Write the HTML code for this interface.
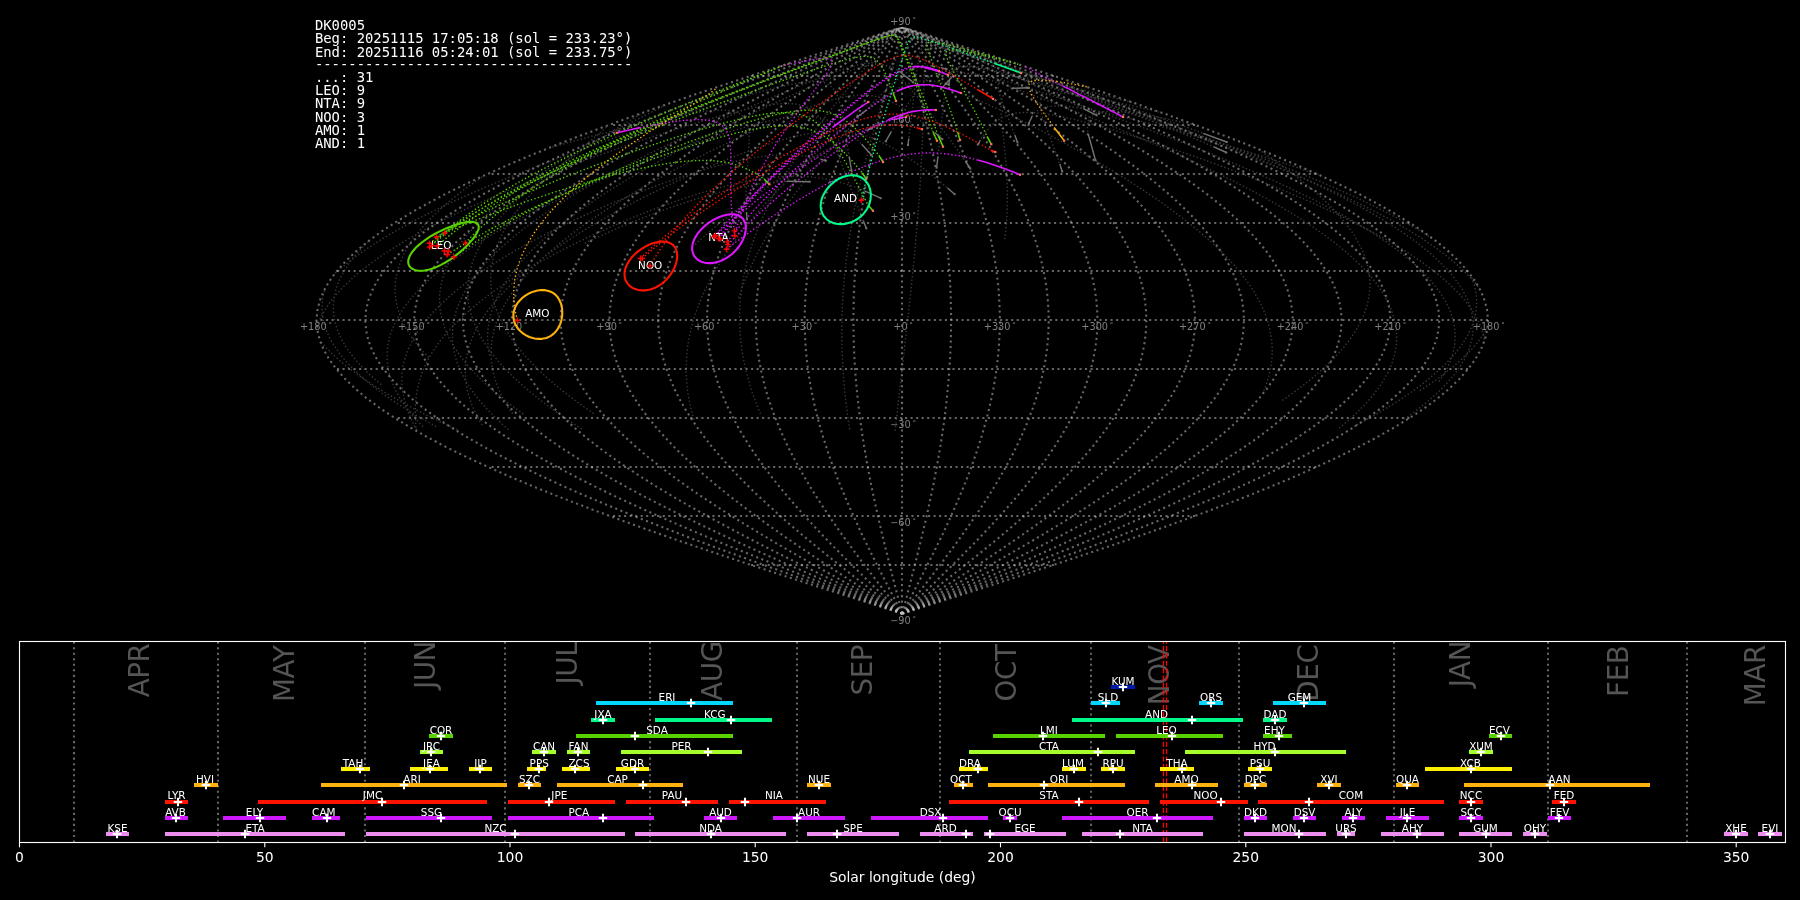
<!DOCTYPE html>
<html lang="en">
<head>
<meta charset="utf-8">
<title>DK0005 shower association</title>
<style>
html,body{margin:0;padding:0;background:#000;overflow:hidden}
svg{display:block;will-change:transform}
text{white-space:pre}
</style>
</head>
<body>
<svg width="1800" height="900" viewBox="0 0 1800 900">
<rect x="0" y="0" width="1800" height="900" fill="#000000"/>
<clipPath id="mapclip"><rect x="300" y="27.4" width="1200" height="600"/></clipPath>
<g fill="none" stroke="#c0c0c0" stroke-opacity="0.53" stroke-width="2.083" stroke-dasharray="2.083 3.4375" clip-path="url(#mapclip)">
<path d="M902.0 613.7 L902.0 603.9 L902.0 594.1 L902.0 584.4 L902.0 574.6 L902.0 564.8 L902.0 555.0 L902.0 545.3 L902.0 535.5 L902.0 525.7 L902.0 515.9 L902.0 506.1 L902.0 496.4 L902.0 486.6 L902.0 476.8 L902.0 467.0 L902.0 457.2 L902.0 447.5 L902.0 437.7 L902.0 427.9 L902.0 418.1 L902.0 408.4 L902.0 398.6 L902.0 388.8 L902.0 379.0 L902.0 369.2 L902.0 359.5 L902.0 349.7 L902.0 339.9 L902.0 330.1 L902.0 320.4 L902.0 310.6 L902.0 300.8 L902.0 291.0 L902.0 281.2 L902.0 271.5 L902.0 261.7 L902.0 251.9 L902.0 242.1 L902.0 232.3 L902.0 222.6 L902.0 212.8 L902.0 203.0 L902.0 193.2 L902.0 183.5 L902.0 173.7 L902.0 163.9 L902.0 154.1 L902.0 144.3 L902.0 134.6 L902.0 124.8 L902.0 115.0 L902.0 105.2 L902.0 95.4 L902.0 85.7 L902.0 75.9 L902.0 66.1 L902.0 56.3 L902.0 46.6 L902.0 36.8 L902.0 27.0"/>
<path d="M902.2 613.7 L899.7 603.9 L897.1 594.1 L894.6 584.4 L892.1 574.6 L889.6 564.8 L887.2 555.0 L884.8 545.3 L882.4 535.5 L880.1 525.7 L877.8 515.9 L875.7 506.1 L873.6 496.4 L871.5 486.6 L869.6 476.8 L867.7 467.0 L866.0 457.2 L864.3 447.5 L862.8 437.7 L861.3 427.9 L860.0 418.1 L858.8 408.4 L857.7 398.6 L856.7 388.8 L855.8 379.0 L855.1 369.2 L854.5 359.5 L854.0 349.7 L853.7 339.9 L853.5 330.1 L853.4 320.4 L853.5 310.6 L853.7 300.8 L854.0 291.0 L854.5 281.2 L855.1 271.5 L855.8 261.7 L856.7 251.9 L857.7 242.1 L858.8 232.3 L860.0 222.6 L861.3 212.8 L862.8 203.0 L864.3 193.2 L866.0 183.5 L867.7 173.7 L869.6 163.9 L871.5 154.1 L873.6 144.3 L875.7 134.6 L877.8 124.8 L880.1 115.0 L882.4 105.2 L884.8 95.4 L887.2 85.7 L889.6 75.9 L892.1 66.1 L894.6 56.3 L897.1 46.6 L899.7 36.8 L902.2 27.0"/>
<path d="M902.2 613.7 L897.1 603.9 L892.0 594.1 L887.0 584.4 L882.0 574.6 L877.0 564.8 L872.1 555.0 L867.3 545.3 L862.5 535.5 L857.9 525.7 L853.4 515.9 L849.1 506.1 L844.9 496.4 L840.8 486.6 L836.9 476.8 L833.2 467.0 L829.7 457.2 L826.4 447.5 L823.3 437.7 L820.4 427.9 L817.7 418.1 L815.3 408.4 L813.1 398.6 L811.1 388.8 L809.4 379.0 L808.0 369.2 L806.8 359.5 L805.8 349.7 L805.2 339.9 L804.8 330.1 L804.6 320.4 L804.8 310.6 L805.2 300.8 L805.8 291.0 L806.8 281.2 L808.0 271.5 L809.4 261.7 L811.1 251.9 L813.1 242.1 L815.3 232.3 L817.7 222.6 L820.4 212.8 L823.3 203.0 L826.4 193.2 L829.7 183.5 L833.2 173.7 L836.9 163.9 L840.8 154.1 L844.9 144.3 L849.1 134.6 L853.4 124.8 L857.9 115.0 L862.5 105.2 L867.3 95.4 L872.1 85.7 L877.0 75.9 L882.0 66.1 L887.0 56.3 L892.0 46.6 L897.1 36.8 L902.2 27.0"/>
<path d="M902.2 613.7 L894.6 603.9 L886.9 594.1 L879.3 584.4 L871.8 574.6 L864.3 564.8 L857.0 555.0 L849.8 545.3 L842.7 535.5 L835.8 525.7 L829.0 515.9 L822.5 506.1 L816.2 496.4 L810.1 486.6 L804.3 476.8 L798.7 467.0 L793.4 457.2 L788.4 447.5 L783.8 437.7 L779.4 427.9 L775.4 418.1 L771.8 408.4 L768.5 398.6 L765.5 388.8 L763.0 379.0 L760.8 369.2 L759.0 359.5 L757.6 349.7 L756.6 339.9 L756.0 330.1 L755.8 320.4 L756.0 310.6 L756.6 300.8 L757.6 291.0 L759.0 281.2 L760.8 271.5 L763.0 261.7 L765.5 251.9 L768.5 242.1 L771.8 232.3 L775.4 222.6 L779.4 212.8 L783.8 203.0 L788.4 193.2 L793.4 183.5 L798.7 173.7 L804.3 163.9 L810.1 154.1 L816.2 144.3 L822.5 134.6 L829.0 124.8 L835.8 115.0 L842.7 105.2 L849.8 95.4 L857.0 85.7 L864.3 75.9 L871.8 66.1 L879.3 56.3 L886.9 46.6 L894.6 36.8 L902.2 27.0"/>
<path d="M902.2 613.7 L892.0 603.9 L881.8 594.1 L871.7 584.4 L861.7 574.6 L851.7 564.8 L841.9 555.0 L832.3 545.3 L822.8 535.5 L813.6 525.7 L804.6 515.9 L795.9 506.1 L787.5 496.4 L779.4 486.6 L771.6 476.8 L764.2 467.0 L757.1 457.2 L750.5 447.5 L744.3 437.7 L738.5 427.9 L733.2 418.1 L728.3 408.4 L723.9 398.6 L720.0 388.8 L716.6 379.0 L713.7 369.2 L711.3 359.5 L709.4 349.7 L708.1 339.9 L707.3 330.1 L707.0 320.4 L707.3 310.6 L708.1 300.8 L709.4 291.0 L711.3 281.2 L713.7 271.5 L716.6 261.7 L720.0 251.9 L723.9 242.1 L728.3 232.3 L733.2 222.6 L738.5 212.8 L744.3 203.0 L750.5 193.2 L757.1 183.5 L764.2 173.7 L771.6 163.9 L779.4 154.1 L787.5 144.3 L795.9 134.6 L804.6 124.8 L813.6 115.0 L822.8 105.2 L832.3 95.4 L841.9 85.7 L851.7 75.9 L861.7 66.1 L871.7 56.3 L881.8 46.6 L892.0 36.8 L902.2 27.0"/>
<path d="M902.2 613.7 L889.5 603.9 L876.7 594.1 L864.1 584.4 L851.5 574.6 L839.1 564.8 L826.8 555.0 L814.8 545.3 L803.0 535.5 L791.4 525.7 L780.2 515.9 L769.3 506.1 L758.8 496.4 L748.7 486.6 L738.9 476.8 L729.7 467.0 L720.9 457.2 L712.6 447.5 L704.8 437.7 L697.6 427.9 L690.9 418.1 L684.8 408.4 L679.3 398.6 L674.4 388.8 L670.1 379.0 L666.5 369.2 L663.5 359.5 L661.2 349.7 L659.5 339.9 L658.5 330.1 L658.2 320.4 L658.5 310.6 L659.5 300.8 L661.2 291.0 L663.5 281.2 L666.5 271.5 L670.1 261.7 L674.4 251.9 L679.3 242.1 L684.8 232.3 L690.9 222.6 L697.6 212.8 L704.8 203.0 L712.6 193.2 L720.9 183.5 L729.7 173.7 L738.9 163.9 L748.7 154.1 L758.8 144.3 L769.3 134.6 L780.2 124.8 L791.4 115.0 L803.0 105.2 L814.8 95.4 L826.8 85.7 L839.1 75.9 L851.5 66.1 L864.1 56.3 L876.7 46.6 L889.5 36.8 L902.2 27.0"/>
<path d="M902.2 613.7 L886.9 603.9 L871.6 594.1 L856.4 584.4 L841.4 574.6 L826.4 564.8 L811.7 555.0 L797.3 545.3 L783.1 535.5 L769.3 525.7 L755.8 515.9 L742.7 506.1 L730.1 496.4 L717.9 486.6 L706.3 476.8 L695.2 467.0 L684.6 457.2 L674.6 447.5 L665.3 437.7 L656.6 427.9 L648.6 418.1 L641.3 408.4 L634.7 398.6 L628.8 388.8 L623.7 379.0 L619.4 369.2 L615.8 359.5 L613.0 349.7 L611.0 339.9 L609.8 330.1 L609.4 320.4 L609.8 310.6 L611.0 300.8 L613.0 291.0 L615.8 281.2 L619.4 271.5 L623.7 261.7 L628.8 251.9 L634.7 242.1 L641.3 232.3 L648.6 222.6 L656.6 212.8 L665.3 203.0 L674.6 193.2 L684.6 183.5 L695.2 173.7 L706.3 163.9 L717.9 154.1 L730.1 144.3 L742.7 134.6 L755.8 124.8 L769.3 115.0 L783.1 105.2 L797.3 95.4 L811.7 85.7 L826.4 75.9 L841.4 66.1 L856.4 56.3 L871.6 46.6 L886.9 36.8 L902.2 27.0"/>
<path d="M902.2 613.7 L884.4 603.9 L866.5 594.1 L848.8 584.4 L831.2 574.6 L813.8 564.8 L796.7 555.0 L779.8 545.3 L763.3 535.5 L747.1 525.7 L731.4 515.9 L716.2 506.1 L701.4 496.4 L687.2 486.6 L673.6 476.8 L660.6 467.0 L648.3 457.2 L636.7 447.5 L625.8 437.7 L615.7 427.9 L606.3 418.1 L597.8 408.4 L590.1 398.6 L583.3 388.8 L577.3 379.0 L572.2 369.2 L568.0 359.5 L564.8 349.7 L562.4 339.9 L561.0 330.1 L560.6 320.4 L561.0 310.6 L562.4 300.8 L564.8 291.0 L568.0 281.2 L572.2 271.5 L577.3 261.7 L583.3 251.9 L590.1 242.1 L597.8 232.3 L606.3 222.6 L615.7 212.8 L625.8 203.0 L636.7 193.2 L648.3 183.5 L660.6 173.7 L673.6 163.9 L687.2 154.1 L701.4 144.3 L716.2 134.6 L731.4 124.8 L747.1 115.0 L763.3 105.2 L779.8 95.4 L796.7 85.7 L813.8 75.9 L831.2 66.1 L848.8 56.3 L866.5 46.6 L884.4 36.8 L902.2 27.0"/>
<path d="M902.2 613.7 L881.8 603.9 L861.4 594.1 L841.2 584.4 L821.1 574.6 L801.2 564.8 L781.6 555.0 L762.3 545.3 L743.4 535.5 L725.0 525.7 L707.0 515.9 L689.6 506.1 L672.7 496.4 L656.5 486.6 L641.0 476.8 L626.1 467.0 L612.0 457.2 L598.8 447.5 L586.3 437.7 L574.7 427.9 L564.1 418.1 L554.3 408.4 L545.5 398.6 L537.7 388.8 L530.9 379.0 L525.1 369.2 L520.3 359.5 L516.6 349.7 L513.9 339.9 L512.3 330.1 L511.7 320.4 L512.3 310.6 L513.9 300.8 L516.6 291.0 L520.3 281.2 L525.1 271.5 L530.9 261.7 L537.7 251.9 L545.5 242.1 L554.3 232.3 L564.1 222.6 L574.7 212.8 L586.3 203.0 L598.8 193.2 L612.0 183.5 L626.1 173.7 L641.0 163.9 L656.5 154.1 L672.7 144.3 L689.6 134.6 L707.0 124.8 L725.0 115.0 L743.4 105.2 L762.3 95.4 L781.6 85.7 L801.2 75.9 L821.1 66.1 L841.2 56.3 L861.4 46.6 L881.8 36.8 L902.2 27.0"/>
<path d="M902.2 613.7 L879.3 603.9 L856.3 594.1 L833.5 584.4 L810.9 574.6 L788.5 564.8 L766.5 555.0 L744.8 545.3 L723.6 535.5 L702.8 525.7 L682.6 515.9 L663.0 506.1 L644.0 496.4 L625.8 486.6 L608.3 476.8 L591.6 467.0 L575.8 457.2 L560.8 447.5 L546.8 437.7 L533.8 427.9 L521.8 418.1 L510.8 408.4 L500.9 398.6 L492.1 388.8 L484.4 379.0 L477.9 369.2 L472.5 359.5 L468.3 349.7 L465.3 339.9 L463.5 330.1 L462.9 320.4 L463.5 310.6 L465.3 300.8 L468.3 291.0 L472.5 281.2 L477.9 271.5 L484.4 261.7 L492.1 251.9 L500.9 242.1 L510.8 232.3 L521.8 222.6 L533.8 212.8 L546.8 203.0 L560.8 193.2 L575.8 183.5 L591.6 173.7 L608.3 163.9 L625.8 154.1 L644.0 144.3 L663.0 134.6 L682.6 124.8 L702.8 115.0 L723.6 105.2 L744.8 95.4 L766.5 85.7 L788.5 75.9 L810.9 66.1 L833.5 56.3 L856.3 46.6 L879.3 36.8 L902.2 27.0"/>
<path d="M902.2 613.7 L876.7 603.9 L851.2 594.1 L825.9 584.4 L800.8 574.6 L775.9 564.8 L751.4 555.0 L727.3 545.3 L703.7 535.5 L680.6 525.7 L658.2 515.9 L636.4 506.1 L615.3 496.4 L595.1 486.6 L575.6 476.8 L557.1 467.0 L539.5 457.2 L522.9 447.5 L507.3 437.7 L492.9 427.9 L479.5 418.1 L467.3 408.4 L456.3 398.6 L446.5 388.8 L438.0 379.0 L430.8 369.2 L424.8 359.5 L420.1 349.7 L416.8 339.9 L414.8 330.1 L414.1 320.4 L414.8 310.6 L416.8 300.8 L420.1 291.0 L424.8 281.2 L430.8 271.5 L438.0 261.7 L446.5 251.9 L456.3 242.1 L467.3 232.3 L479.5 222.6 L492.9 212.8 L507.3 203.0 L522.9 193.2 L539.5 183.5 L557.1 173.7 L575.6 163.9 L595.1 154.1 L615.3 144.3 L636.4 134.6 L658.2 124.8 L680.6 115.0 L703.7 105.2 L727.3 95.4 L751.4 85.7 L775.9 75.9 L800.8 66.1 L825.9 56.3 L851.2 46.6 L876.7 36.8 L902.2 27.0"/>
<path d="M902.2 613.7 L874.1 603.9 L846.1 594.1 L818.3 584.4 L790.6 574.6 L763.3 564.8 L736.3 555.0 L709.8 545.3 L683.9 535.5 L658.5 525.7 L633.8 515.9 L609.8 506.1 L586.6 496.4 L564.3 486.6 L543.0 476.8 L522.6 467.0 L503.2 457.2 L485.0 447.5 L467.9 437.7 L451.9 427.9 L437.2 418.1 L423.8 408.4 L411.7 398.6 L401.0 388.8 L391.6 379.0 L383.6 369.2 L377.0 359.5 L371.9 349.7 L368.2 339.9 L366.0 330.1 L365.3 320.4 L366.0 310.6 L368.2 300.8 L371.9 291.0 L377.0 281.2 L383.6 271.5 L391.6 261.7 L401.0 251.9 L411.7 242.1 L423.8 232.3 L437.2 222.6 L451.9 212.8 L467.9 203.0 L485.0 193.2 L503.2 183.5 L522.6 173.7 L543.0 163.9 L564.3 154.1 L586.6 144.3 L609.8 134.6 L633.8 124.8 L658.5 115.0 L683.9 105.2 L709.8 95.4 L736.3 85.7 L763.3 75.9 L790.6 66.1 L818.3 56.3 L846.1 46.6 L874.1 36.8 L902.2 27.0"/>
<path d="M902.2 613.7 L871.6 603.9 L841.0 594.1 L810.6 584.4 L780.5 574.6 L750.6 564.8 L721.2 555.0 L692.3 545.3 L664.0 535.5 L636.3 525.7 L609.4 515.9 L583.2 506.1 L558.0 496.4 L533.6 486.6 L510.3 476.8 L488.1 467.0 L466.9 457.2 L447.0 447.5 L428.4 437.7 L411.0 427.9 L395.0 418.1 L380.3 408.4 L367.1 398.6 L355.4 388.8 L345.2 379.0 L336.5 369.2 L329.3 359.5 L323.7 349.7 L319.7 339.9 L317.3 330.1 L316.5 320.4 L317.3 310.6 L319.7 300.8 L323.7 291.0 L329.3 281.2 L336.5 271.5 L345.2 261.7 L355.4 251.9 L367.1 242.1 L380.3 232.3 L395.0 222.6 L411.0 212.8 L428.4 203.0 L447.0 193.2 L466.9 183.5 L488.1 173.7 L510.3 163.9 L533.6 154.1 L558.0 144.3 L583.2 134.6 L609.4 124.8 L636.3 115.0 L664.0 105.2 L692.3 95.4 L721.2 85.7 L750.6 75.9 L780.5 66.1 L810.6 56.3 L841.0 46.6 L871.6 36.8 L902.2 27.0"/>
<path d="M902.2 613.7 L930.4 603.9 L958.4 594.1 L986.2 584.4 L1013.9 574.6 L1041.2 564.8 L1068.2 555.0 L1094.7 545.3 L1120.6 535.5 L1146.0 525.7 L1170.7 515.9 L1194.7 506.1 L1217.9 496.4 L1240.2 486.6 L1261.5 476.8 L1281.9 467.0 L1301.3 457.2 L1319.5 447.5 L1336.6 437.7 L1352.6 427.9 L1367.3 418.1 L1380.7 408.4 L1392.8 398.6 L1403.5 388.8 L1412.9 379.0 L1420.9 369.2 L1427.5 359.5 L1432.6 349.7 L1436.3 339.9 L1438.5 330.1 L1439.2 320.4 L1438.5 310.6 L1436.3 300.8 L1432.6 291.0 L1427.5 281.2 L1420.9 271.5 L1412.9 261.7 L1403.5 251.9 L1392.8 242.1 L1380.7 232.3 L1367.3 222.6 L1352.6 212.8 L1336.6 203.0 L1319.5 193.2 L1301.3 183.5 L1281.9 173.7 L1261.5 163.9 L1240.2 154.1 L1217.9 144.3 L1194.7 134.6 L1170.7 124.8 L1146.0 115.0 L1120.6 105.2 L1094.7 95.4 L1068.2 85.7 L1041.2 75.9 L1013.9 66.1 L986.2 56.3 L958.4 46.6 L930.4 36.8 L902.2 27.0"/>
<path d="M902.2 613.7 L927.8 603.9 L953.3 594.1 L978.6 584.4 L1003.7 574.6 L1028.6 564.8 L1053.1 555.0 L1077.2 545.3 L1100.8 535.5 L1123.9 525.7 L1146.3 515.9 L1168.1 506.1 L1189.2 496.4 L1209.4 486.6 L1228.9 476.8 L1247.4 467.0 L1265.0 457.2 L1281.6 447.5 L1297.2 437.7 L1311.6 427.9 L1325.0 418.1 L1337.2 408.4 L1348.2 398.6 L1358.0 388.8 L1366.5 379.0 L1373.7 369.2 L1379.7 359.5 L1384.4 349.7 L1387.7 339.9 L1389.7 330.1 L1390.4 320.4 L1389.7 310.6 L1387.7 300.8 L1384.4 291.0 L1379.7 281.2 L1373.7 271.5 L1366.5 261.7 L1358.0 251.9 L1348.2 242.1 L1337.2 232.3 L1325.0 222.6 L1311.6 212.8 L1297.2 203.0 L1281.6 193.2 L1265.0 183.5 L1247.4 173.7 L1228.9 163.9 L1209.4 154.1 L1189.2 144.3 L1168.1 134.6 L1146.3 124.8 L1123.9 115.0 L1100.8 105.2 L1077.2 95.4 L1053.1 85.7 L1028.6 75.9 L1003.7 66.1 L978.6 56.3 L953.3 46.6 L927.8 36.8 L902.2 27.0"/>
<path d="M902.2 613.7 L925.2 603.9 L948.2 594.1 L971.0 584.4 L993.6 574.6 L1016.0 564.8 L1038.0 555.0 L1059.7 545.3 L1080.9 535.5 L1101.7 525.7 L1121.9 515.9 L1141.5 506.1 L1160.5 496.4 L1178.7 486.6 L1196.2 476.8 L1212.9 467.0 L1228.7 457.2 L1243.7 447.5 L1257.7 437.7 L1270.7 427.9 L1282.7 418.1 L1293.7 408.4 L1303.6 398.6 L1312.4 388.8 L1320.1 379.0 L1326.6 369.2 L1332.0 359.5 L1336.2 349.7 L1339.2 339.9 L1341.0 330.1 L1341.6 320.4 L1341.0 310.6 L1339.2 300.8 L1336.2 291.0 L1332.0 281.2 L1326.6 271.5 L1320.1 261.7 L1312.4 251.9 L1303.6 242.1 L1293.7 232.3 L1282.7 222.6 L1270.7 212.8 L1257.7 203.0 L1243.7 193.2 L1228.7 183.5 L1212.9 173.7 L1196.2 163.9 L1178.7 154.1 L1160.5 144.3 L1141.5 134.6 L1121.9 124.8 L1101.7 115.0 L1080.9 105.2 L1059.7 95.4 L1038.0 85.7 L1016.0 75.9 L993.6 66.1 L971.0 56.3 L948.2 46.6 L925.2 36.8 L902.2 27.0"/>
<path d="M902.2 613.7 L922.7 603.9 L943.1 594.1 L963.3 584.4 L983.4 574.6 L1003.3 564.8 L1022.9 555.0 L1042.2 545.3 L1061.1 535.5 L1079.5 525.7 L1097.5 515.9 L1114.9 506.1 L1131.8 496.4 L1148.0 486.6 L1163.5 476.8 L1178.4 467.0 L1192.5 457.2 L1205.7 447.5 L1218.2 437.7 L1229.8 427.9 L1240.4 418.1 L1250.2 408.4 L1259.0 398.6 L1266.8 388.8 L1273.6 379.0 L1279.4 369.2 L1284.2 359.5 L1287.9 349.7 L1290.6 339.9 L1292.2 330.1 L1292.8 320.4 L1292.2 310.6 L1290.6 300.8 L1287.9 291.0 L1284.2 281.2 L1279.4 271.5 L1273.6 261.7 L1266.8 251.9 L1259.0 242.1 L1250.2 232.3 L1240.4 222.6 L1229.8 212.8 L1218.2 203.0 L1205.7 193.2 L1192.5 183.5 L1178.4 173.7 L1163.5 163.9 L1148.0 154.1 L1131.8 144.3 L1114.9 134.6 L1097.5 124.8 L1079.5 115.0 L1061.1 105.2 L1042.2 95.4 L1022.9 85.7 L1003.3 75.9 L983.4 66.1 L963.3 56.3 L943.1 46.6 L922.7 36.8 L902.2 27.0"/>
<path d="M902.2 613.7 L920.1 603.9 L938.0 594.1 L955.7 584.4 L973.3 574.6 L990.7 564.8 L1007.8 555.0 L1024.7 545.3 L1041.2 535.5 L1057.4 525.7 L1073.1 515.9 L1088.3 506.1 L1103.1 496.4 L1117.3 486.6 L1130.9 476.8 L1143.9 467.0 L1156.2 457.2 L1167.8 447.5 L1178.7 437.7 L1188.8 427.9 L1198.2 418.1 L1206.7 408.4 L1214.4 398.6 L1221.2 388.8 L1227.2 379.0 L1232.3 369.2 L1236.5 359.5 L1239.7 349.7 L1242.1 339.9 L1243.5 330.1 L1243.9 320.4 L1243.5 310.6 L1242.1 300.8 L1239.7 291.0 L1236.5 281.2 L1232.3 271.5 L1227.2 261.7 L1221.2 251.9 L1214.4 242.1 L1206.7 232.3 L1198.2 222.6 L1188.8 212.8 L1178.7 203.0 L1167.8 193.2 L1156.2 183.5 L1143.9 173.7 L1130.9 163.9 L1117.3 154.1 L1103.1 144.3 L1088.3 134.6 L1073.1 124.8 L1057.4 115.0 L1041.2 105.2 L1024.7 95.4 L1007.8 85.7 L990.7 75.9 L973.3 66.1 L955.7 56.3 L938.0 46.6 L920.1 36.8 L902.2 27.0"/>
<path d="M902.2 613.7 L917.6 603.9 L932.9 594.1 L948.1 584.4 L963.1 574.6 L978.1 564.8 L992.8 555.0 L1007.2 545.3 L1021.4 535.5 L1035.2 525.7 L1048.7 515.9 L1061.8 506.1 L1074.4 496.4 L1086.6 486.6 L1098.2 476.8 L1109.3 467.0 L1119.9 457.2 L1129.9 447.5 L1139.2 437.7 L1147.9 427.9 L1155.9 418.1 L1163.2 408.4 L1169.8 398.6 L1175.7 388.8 L1180.8 379.0 L1185.1 369.2 L1188.7 359.5 L1191.5 349.7 L1193.5 339.9 L1194.7 330.1 L1195.1 320.4 L1194.7 310.6 L1193.5 300.8 L1191.5 291.0 L1188.7 281.2 L1185.1 271.5 L1180.8 261.7 L1175.7 251.9 L1169.8 242.1 L1163.2 232.3 L1155.9 222.6 L1147.9 212.8 L1139.2 203.0 L1129.9 193.2 L1119.9 183.5 L1109.3 173.7 L1098.2 163.9 L1086.6 154.1 L1074.4 144.3 L1061.8 134.6 L1048.7 124.8 L1035.2 115.0 L1021.4 105.2 L1007.2 95.4 L992.8 85.7 L978.1 75.9 L963.1 66.1 L948.1 56.3 L932.9 46.6 L917.6 36.8 L902.2 27.0"/>
<path d="M902.2 613.7 L915.0 603.9 L927.8 594.1 L940.4 584.4 L953.0 574.6 L965.4 564.8 L977.7 555.0 L989.7 545.3 L1001.5 535.5 L1013.1 525.7 L1024.3 515.9 L1035.2 506.1 L1045.7 496.4 L1055.8 486.6 L1065.6 476.8 L1074.8 467.0 L1083.6 457.2 L1091.9 447.5 L1099.7 437.7 L1106.9 427.9 L1113.6 418.1 L1119.7 408.4 L1125.2 398.6 L1130.1 388.8 L1134.4 379.0 L1138.0 369.2 L1141.0 359.5 L1143.3 349.7 L1145.0 339.9 L1146.0 330.1 L1146.3 320.4 L1146.0 310.6 L1145.0 300.8 L1143.3 291.0 L1141.0 281.2 L1138.0 271.5 L1134.4 261.7 L1130.1 251.9 L1125.2 242.1 L1119.7 232.3 L1113.6 222.6 L1106.9 212.8 L1099.7 203.0 L1091.9 193.2 L1083.6 183.5 L1074.8 173.7 L1065.6 163.9 L1055.8 154.1 L1045.7 144.3 L1035.2 134.6 L1024.3 124.8 L1013.1 115.0 L1001.5 105.2 L989.7 95.4 L977.7 85.7 L965.4 75.9 L953.0 66.1 L940.4 56.3 L927.8 46.6 L915.0 36.8 L902.2 27.0"/>
<path d="M902.2 613.7 L912.5 603.9 L922.7 594.1 L932.8 584.4 L942.8 574.6 L952.8 564.8 L962.6 555.0 L972.2 545.3 L981.7 535.5 L990.9 525.7 L999.9 515.9 L1008.6 506.1 L1017.0 496.4 L1025.1 486.6 L1032.9 476.8 L1040.3 467.0 L1047.4 457.2 L1054.0 447.5 L1060.2 437.7 L1066.0 427.9 L1071.3 418.1 L1076.2 408.4 L1080.6 398.6 L1084.5 388.8 L1087.9 379.0 L1090.8 369.2 L1093.2 359.5 L1095.1 349.7 L1096.4 339.9 L1097.2 330.1 L1097.5 320.4 L1097.2 310.6 L1096.4 300.8 L1095.1 291.0 L1093.2 281.2 L1090.8 271.5 L1087.9 261.7 L1084.5 251.9 L1080.6 242.1 L1076.2 232.3 L1071.3 222.6 L1066.0 212.8 L1060.2 203.0 L1054.0 193.2 L1047.4 183.5 L1040.3 173.7 L1032.9 163.9 L1025.1 154.1 L1017.0 144.3 L1008.6 134.6 L999.9 124.8 L990.9 115.0 L981.7 105.2 L972.2 95.4 L962.6 85.7 L952.8 75.9 L942.8 66.1 L932.8 56.3 L922.7 46.6 L912.5 36.8 L902.2 27.0"/>
<path d="M902.2 613.7 L909.9 603.9 L917.6 594.1 L925.2 584.4 L932.7 574.6 L940.2 564.8 L947.5 555.0 L954.7 545.3 L961.8 535.5 L968.7 525.7 L975.5 515.9 L982.0 506.1 L988.3 496.4 L994.4 486.6 L1000.2 476.8 L1005.8 467.0 L1011.1 457.2 L1016.1 447.5 L1020.7 437.7 L1025.1 427.9 L1029.1 418.1 L1032.7 408.4 L1036.0 398.6 L1039.0 388.8 L1041.5 379.0 L1043.7 369.2 L1045.5 359.5 L1046.9 349.7 L1047.9 339.9 L1048.5 330.1 L1048.7 320.4 L1048.5 310.6 L1047.9 300.8 L1046.9 291.0 L1045.5 281.2 L1043.7 271.5 L1041.5 261.7 L1039.0 251.9 L1036.0 242.1 L1032.7 232.3 L1029.1 222.6 L1025.1 212.8 L1020.7 203.0 L1016.1 193.2 L1011.1 183.5 L1005.8 173.7 L1000.2 163.9 L994.4 154.1 L988.3 144.3 L982.0 134.6 L975.5 124.8 L968.7 115.0 L961.8 105.2 L954.7 95.4 L947.5 85.7 L940.2 75.9 L932.7 66.1 L925.2 56.3 L917.6 46.6 L909.9 36.8 L902.2 27.0"/>
<path d="M902.2 613.7 L907.4 603.9 L912.5 594.1 L917.5 584.4 L922.5 574.6 L927.5 564.8 L932.4 555.0 L937.2 545.3 L942.0 535.5 L946.6 525.7 L951.1 515.9 L955.4 506.1 L959.6 496.4 L963.7 486.6 L967.6 476.8 L971.3 467.0 L974.8 457.2 L978.1 447.5 L981.2 437.7 L984.1 427.9 L986.8 418.1 L989.2 408.4 L991.4 398.6 L993.4 388.8 L995.1 379.0 L996.5 369.2 L997.7 359.5 L998.7 349.7 L999.3 339.9 L999.7 330.1 L999.9 320.4 L999.7 310.6 L999.3 300.8 L998.7 291.0 L997.7 281.2 L996.5 271.5 L995.1 261.7 L993.4 251.9 L991.4 242.1 L989.2 232.3 L986.8 222.6 L984.1 212.8 L981.2 203.0 L978.1 193.2 L974.8 183.5 L971.3 173.7 L967.6 163.9 L963.7 154.1 L959.6 144.3 L955.4 134.6 L951.1 124.8 L946.6 115.0 L942.0 105.2 L937.2 95.4 L932.4 85.7 L927.5 75.9 L922.5 66.1 L917.5 56.3 L912.5 46.6 L907.4 36.8 L902.2 27.0"/>
<path d="M902.2 613.7 L904.8 603.9 L907.4 594.1 L909.9 584.4 L912.4 574.6 L914.9 564.8 L917.3 555.0 L919.7 545.3 L922.1 535.5 L924.4 525.7 L926.7 515.9 L928.8 506.1 L930.9 496.4 L933.0 486.6 L934.9 476.8 L936.8 467.0 L938.5 457.2 L940.2 447.5 L941.7 437.7 L943.2 427.9 L944.5 418.1 L945.7 408.4 L946.8 398.6 L947.8 388.8 L948.7 379.0 L949.4 369.2 L950.0 359.5 L950.5 349.7 L950.8 339.9 L951.0 330.1 L951.1 320.4 L951.0 310.6 L950.8 300.8 L950.5 291.0 L950.0 281.2 L949.4 271.5 L948.7 261.7 L947.8 251.9 L946.8 242.1 L945.7 232.3 L944.5 222.6 L943.2 212.8 L941.7 203.0 L940.2 193.2 L938.5 183.5 L936.8 173.7 L934.9 163.9 L933.0 154.1 L930.9 144.3 L928.8 134.6 L926.7 124.8 L924.4 115.0 L922.1 105.2 L919.7 95.4 L917.3 85.7 L914.9 75.9 L912.4 66.1 L909.9 56.3 L907.4 46.6 L904.8 36.8 L902.2 27.0"/>
<path d="M902.2 613.7 L932.9 603.9 L963.5 594.1 L993.9 584.4 L1024.0 574.6 L1053.9 564.8 L1083.3 555.0 L1112.2 545.3 L1140.5 535.5 L1168.2 525.7 L1195.1 515.9 L1221.3 506.1 L1246.5 496.4 L1270.9 486.6 L1294.2 476.8 L1316.4 467.0 L1337.6 457.2 L1357.5 447.5 L1376.1 437.7 L1393.5 427.9 L1409.5 418.1 L1424.2 408.4 L1437.4 398.6 L1449.1 388.8 L1459.3 379.0 L1468.0 369.2 L1475.2 359.5 L1480.8 349.7 L1484.8 339.9 L1487.2 330.1 L1488.0 320.4 L1487.2 310.6 L1484.8 300.8 L1480.8 291.0 L1475.2 281.2 L1468.0 271.5 L1459.3 261.7 L1449.1 251.9 L1437.4 242.1 L1424.2 232.3 L1409.5 222.6 L1393.5 212.8 L1376.1 203.0 L1357.5 193.2 L1337.6 183.5 L1316.4 173.7 L1294.2 163.9 L1270.9 154.1 L1246.5 144.3 L1221.3 134.6 L1195.1 124.8 L1168.2 115.0 L1140.5 105.2 L1112.2 95.4 L1083.3 85.7 L1053.9 75.9 L1024.0 66.1 L993.9 56.3 L963.5 46.6 L932.9 36.8 L902.2 27.0"/>
<path d="M902.2 565.0 L750.6 565.0"/>
<path d="M1053.9 565.0 L902.2 565.0"/>
<path d="M902.2 516.0 L609.4 516.0"/>
<path d="M1195.1 516.0 L902.2 516.0"/>
<path d="M902.2 467.0 L488.1 467.0"/>
<path d="M1316.4 467.0 L902.2 467.0"/>
<path d="M902.2 418.0 L395.0 418.0"/>
<path d="M1409.5 418.0 L902.2 418.0"/>
<path d="M902.2 369.0 L336.5 369.0"/>
<path d="M1468.0 369.0 L902.2 369.0"/>
<path d="M902.2 320.0 L316.5 320.0"/>
<path d="M1488.0 320.0 L902.2 320.0"/>
<path d="M902.2 271.0 L336.5 271.0"/>
<path d="M1468.0 271.0 L902.2 271.0"/>
<path d="M902.2 223.0 L395.0 223.0"/>
<path d="M1409.5 223.0 L902.2 223.0"/>
<path d="M902.2 174.0 L488.1 174.0"/>
<path d="M1316.4 174.0 L902.2 174.0"/>
<path d="M902.2 125.0 L609.4 125.0"/>
<path d="M1195.1 125.0 L902.2 125.0"/>
<path d="M902.2 76.0 L750.6 76.0"/>
<path d="M1053.9 76.0 L902.2 76.0"/>
</g>
<g font-family="'DejaVu Sans', 'Liberation Sans', sans-serif" font-size="9.72" fill="#808080" text-anchor="middle">
<text x="903.0" y="624.0">−90<tspan font-size="6.9" dy="-3.4" dx="1.7">&#176;</tspan></text>
<text x="903.0" y="526.0">−60<tspan font-size="6.9" dy="-3.4" dx="1.7">&#176;</tspan></text>
<text x="903.0" y="428.0">−30<tspan font-size="6.9" dy="-3.4" dx="1.7">&#176;</tspan></text>
<text x="903.0" y="330.0">+0<tspan font-size="6.9" dy="-3.4" dx="1.7">&#176;</tspan></text>
<text x="903.0" y="220.0">+30<tspan font-size="6.9" dy="-3.4" dx="1.7">&#176;</tspan></text>
<text x="903.0" y="123.0">+60<tspan font-size="6.9" dy="-3.4" dx="1.7">&#176;</tspan></text>
<text x="903.0" y="25.0">+90<tspan font-size="6.9" dy="-3.4" dx="1.7">&#176;</tspan></text>
<text x="804.4" y="330.0">+30<tspan font-size="6.9" dy="-3.4" dx="1.7">&#176;</tspan></text>
<text x="706.8" y="330.0">+60<tspan font-size="6.9" dy="-3.4" dx="1.7">&#176;</tspan></text>
<text x="609.2" y="330.0">+90<tspan font-size="6.9" dy="-3.4" dx="1.7">&#176;</tspan></text>
<text x="511.5" y="330.0">+120<tspan font-size="6.9" dy="-3.4" dx="1.7">&#176;</tspan></text>
<text x="413.9" y="330.0">+150<tspan font-size="6.9" dy="-3.4" dx="1.7">&#176;</tspan></text>
<text x="315.9" y="330.0">+180<tspan font-size="6.9" dy="-3.4" dx="1.7">&#176;</tspan></text>
<text x="1390.2" y="330.0">+210<tspan font-size="6.9" dy="-3.4" dx="1.7">&#176;</tspan></text>
<text x="1292.6" y="330.0">+240<tspan font-size="6.9" dy="-3.4" dx="1.7">&#176;</tspan></text>
<text x="1194.9" y="330.0">+270<tspan font-size="6.9" dy="-3.4" dx="1.7">&#176;</tspan></text>
<text x="1097.3" y="330.0">+300<tspan font-size="6.9" dy="-3.4" dx="1.7">&#176;</tspan></text>
<text x="999.7" y="330.0">+330<tspan font-size="6.9" dy="-3.4" dx="1.7">&#176;</tspan></text>
<text x="1488.7" y="330.0">+180<tspan font-size="6.9" dy="-3.4" dx="1.7">&#176;</tspan></text>
</g>
<path d="M1263.8 390.8 L1264.6 388.8 L1265.4 386.8 L1266.1 384.7 L1266.8 382.7 L1267.5 380.7 L1268.1 378.7 L1268.7 376.6 L1269.2 374.6 L1269.7 372.6 L1270.1 370.6 L1270.5 368.5 L1270.9 366.5 L1271.2 364.5 L1271.5 362.4 L1271.7 360.4 L1271.9 358.4 L1272.0 356.3 L1272.1 354.3 L1272.2 352.3 L1272.2 350.2 L1272.2 348.2 L1272.1 346.2 L1272.0 344.1 L1271.8 342.1 L1271.6 340.1 L1271.3 338.0 L1271.0 336.0 L1270.7 334.0 L1270.3 331.9 L1269.9 329.9 L1269.4 327.9 L1268.9 325.8 L1268.4 323.8 L1267.8 321.7 L1267.1 319.7 L1266.4 317.7 L1265.7 315.6 L1264.9 313.6 L1264.1 311.6 L1263.2 309.5 L1262.3 307.5 L1261.4 305.4 L1260.4 303.4 L1259.4 301.4 L1258.3 299.3 L1257.2 297.3 L1256.0 295.3 L1254.8 293.2 L1253.6 291.2 L1252.3 289.2 L1251.0 287.1 L1249.6 285.1 L1248.2 283.1 L1246.7 281.0 L1245.2 279.0 L1243.7 277.0 L1242.1 274.9 L1240.5 272.9 L1238.9 270.9 L1237.2 268.8 L1235.5 266.8 L1233.7 264.8 L1231.9 262.8 L1230.1 260.7 L1228.2 258.7 L1226.2 256.7 L1224.3 254.7 L1222.3 252.6 L1220.3 250.6 L1218.2 248.6 L1216.1 246.6 L1214.0 244.6 L1211.8 242.6 L1209.6 240.5 L1207.3 238.5 L1205.0 236.5 L1202.7 234.5 L1200.4 232.5 L1198.0 230.5 L1195.6 228.5 L1193.1 226.5 L1190.7 224.5 L1188.2 222.5 L1185.6 220.5 L1183.0 218.5 L1180.4 216.5 L1177.8 214.5 L1175.1 212.5 L1172.5 210.5 L1169.7 208.5 L1167.0 206.5 L1164.2 204.5 L1161.4 202.5 L1158.6 200.6 L1155.7 198.6 L1152.8 196.6 L1149.9 194.6 L1147.0 192.7 L1144.1 190.7 L1141.1 188.8 L1138.1 186.8 L1135.1 184.8 L1132.0 182.9 L1128.9 180.9 L1125.9 179.0 L1122.8 177.1 L1119.6 175.1 L1116.5 173.2 L1113.3 171.3 L1110.2 169.3 L1107.0 167.4 L1103.8 165.5 L1100.6 163.6 L1097.3 161.7 L1094.1 159.8 L1090.8 157.9 L1087.5 156.1 L1084.3 154.2 L1081.0 152.3 L1077.7 150.5 L1074.4 148.6 L1071.0 146.8 L1067.7 144.9 L1064.4 143.1 L1061.1 141.3 L1057.7 139.5 L1054.4 137.7 L1051.1 135.9 L1047.7 134.1 L1044.4 132.4 L1041.1 130.6 L1037.7 128.9 L1034.4 127.2 L1031.1 125.5 L1027.8 123.8 L1024.5 122.1 L1021.2 120.4 L1017.9 118.8 L1014.7 117.2 L1011.4 115.6 L1008.2 114.0 L1005.0 112.4 L1001.8 110.9 L998.6 109.4 L995.5 107.9 L992.3 106.5 L989.2 105.0 L986.2 103.7 L983.1 102.3 L980.1 101.0 L977.1 99.7 L974.2 98.4 L971.3 97.2 L968.4 96.1 L965.6 95.0 L962.8 93.9 L960.1 92.9 L957.3 91.9 L954.7 91.0 L952.1 90.1 L949.5 89.3 L947.0 88.6 L944.5 87.9 L942.0 87.3 L939.6 86.8 L937.3 86.3 L934.9 85.9 L932.7 85.6 L930.4 85.3 L928.2 85.2 L926.0 85.1 L923.9 85.0 L921.8 85.1 L919.7 85.2 L917.6 85.4 L915.6 85.7 L913.5 86.1 L911.5 86.5 L909.5 87.0 L907.5 87.5 L905.5 88.2 L903.5 88.9 L901.5 89.6 L899.5 90.5 L897.5 91.3 L895.5 92.3 L893.5 93.3 L891.5 94.3 L889.5 95.4 L887.5 96.5 L885.4 97.7 L883.4 98.9 L881.3 100.2 L879.3 101.5 L877.2 102.8 L875.1 104.2 L873.0 105.6 L870.9 107.0 L868.8 108.5 L866.7 110.0M1339.2 428.2 L1341.7 426.1 L1344.2 424.1 L1346.6 422.0 L1349.0 419.9 L1351.3 417.9 L1353.5 415.8 L1355.7 413.8 L1357.9 411.7 L1359.9 409.6 L1362.0 407.6 L1364.0 405.5 L1365.9 403.4 L1367.8 401.4 L1369.6 399.3 L1371.3 397.2 L1373.0 395.2 L1374.7 393.1 L1376.2 391.0 L1377.8 388.9 L1379.2 386.9 L1380.7 384.8 L1382.0 382.7 L1383.3 380.7 L1384.5 378.6 L1385.7 376.5 L1386.8 374.4 L1387.9 372.4 L1388.9 370.3 L1389.8 368.2 L1390.7 366.1 L1391.5 364.0 L1392.3 362.0 L1393.0 359.9 L1393.6 357.8 L1394.2 355.7 L1394.7 353.7 L1395.1 351.6 L1395.5 349.5 L1395.9 347.4 L1396.1 345.3 L1396.3 343.3 L1396.5 341.2 L1396.6 339.1 L1396.6 337.0 L1396.6 334.9 L1396.5 332.9 L1396.3 330.8 L1396.1 328.7 L1395.8 326.6 L1395.5 324.5 L1395.1 322.5 L1394.6 320.4 L1394.1 318.3 L1393.5 316.2 L1392.8 314.1 L1392.1 312.1 L1391.3 310.0 L1390.5 307.9 L1389.6 305.8 L1388.7 303.7 L1387.7 301.6 L1386.6 299.6 L1385.5 297.5 L1384.3 295.4 L1383.0 293.3 L1381.7 291.3 L1380.3 289.2 L1378.9 287.1 L1377.4 285.0 L1375.9 282.9 L1374.3 280.9 L1372.6 278.8 L1370.9 276.7 L1369.1 274.6 L1367.3 272.5 L1365.4 270.5 L1363.4 268.4 L1361.4 266.3 L1359.3 264.2 L1357.2 262.2 L1355.0 260.1 L1352.8 258.0 L1350.5 255.9 L1348.2 253.9 L1345.8 251.8 L1343.3 249.7 L1340.8 247.7 L1338.3 245.6 L1335.6 243.5 L1333.0 241.4 L1330.3 239.4 L1327.5 237.3 L1324.7 235.2 L1321.8 233.2 L1318.9 231.1 L1315.9 229.1 L1312.9 227.0 L1309.8 224.9 L1306.7 222.9 L1303.6 220.8 L1300.3 218.7 L1297.1 216.7 L1293.8 214.6 L1290.4 212.6 L1287.0 210.5 L1283.6 208.5 L1280.1 206.4 L1276.6 204.4 L1273.0 202.3 L1269.4 200.3 L1265.7 198.2 L1262.0 196.2 L1258.3 194.1 L1254.5 192.1 L1250.7 190.0 L1246.8 188.0 L1242.9 186.0 L1239.0 183.9 L1235.1 181.9 L1231.0 179.9 L1227.0 177.9 L1222.9 175.8 L1218.8 173.8 L1214.7 171.8 L1210.5 169.8 L1206.3 167.8 L1202.1 165.7 L1197.8 163.7 L1193.5 161.7 L1189.2 159.7 L1184.9 157.7 L1180.5 155.7 L1176.1 153.8 L1171.7 151.8 L1167.3 149.8 L1162.8 147.8 L1158.3 145.8 L1153.8 143.9 L1149.3 141.9 L1144.8 140.0 L1140.2 138.0 L1135.7 136.1 L1131.1 134.1 L1126.5 132.2 L1121.9 130.3 L1117.3 128.4 L1112.7 126.5 L1108.1 124.6 L1103.5 122.7 L1098.8 120.8 L1094.2 118.9 L1089.6 117.1 L1085.0 115.2 L1080.4 113.4 L1075.8 111.6 L1071.2 109.8 L1066.6 108.0 L1062.0 106.2 L1057.5 104.4 L1053.0 102.7 L1048.5 101.0 L1044.0 99.3 L1039.6 97.6 L1035.2 96.0 L1030.8 94.3 L1026.5 92.8 L1022.2 91.2 L1018.0 89.7 L1013.8 88.2 L1009.7 86.7 L1005.6 85.3 L1001.7 83.9 L997.8 82.6 L993.9 81.3 L990.2 80.1 L986.5 78.9 L983.0 77.8 L979.5 76.8 L976.2 75.8 L972.9 74.9 L969.8 74.1 L966.8 73.4 L963.9 72.7 L961.1 72.1 L958.4 71.7 L955.9 71.3 L953.4 71.1 L951.1 70.9 L948.9 70.8 L946.8 70.9 L944.8 71.0 L942.9 71.2 L941.1 71.6 L939.4 72.0 L937.7 72.6 L936.1 73.2 L934.6 73.9 L933.2 74.7 L931.8 75.6 L930.4 76.5 L929.1 77.5 L927.8 78.6 L926.5 79.8 L925.3 81.0 L924.0 82.2 L922.8 83.6 L921.6 84.9 L920.5 86.3 L919.3 87.8 L918.2 89.3 L917.0 90.8 L915.9 92.3 L914.7 93.9 L913.6 95.5 L912.5 97.2 L911.4 98.9 L910.3 100.5 L909.1 102.3 L908.0 104.0 L906.9 105.7 L905.8 107.5 L904.7 109.3 L903.6 111.1 L902.4 112.9 L901.3 114.7 L900.2 116.6 L899.1 118.4 L898.0 120.3 L896.9 122.2 L895.8 124.1 L894.6 126.0 L893.5 127.9 L892.4 129.8 L891.3 131.7M422.9 426.7 L421.2 425.0 L419.5 423.2 L417.8 421.4 L416.2 419.5 L414.6 417.7 L413.0 415.9 L411.5 414.1 L410.0 412.3 L408.5 410.5 L407.2 408.6 L405.8 406.8 L404.5 405.0 L403.2 403.1 L402.0 401.3 L400.8 399.4 L399.7 397.6 L398.6 395.7 L397.6 393.9 L396.6 392.0 L395.6 390.2 L394.7 388.3 L393.9 386.5 L393.1 384.6 L392.3 382.7 L391.6 380.9 L391.0 379.0 L390.4 377.1 L389.8 375.2 L389.3 373.4 L388.9 371.5 L388.5 369.6 L388.1 367.7 L387.8 365.8 L387.6 364.0 L387.4 362.1 L387.2 360.2 L387.1 358.3 L387.1 356.4 L387.1 354.5 L387.2 352.6 L387.3 350.7 L387.5 348.9 L387.7 347.0 L387.9 345.1 L388.3 343.2 L388.7 341.3 L389.1 339.4 L389.6 337.5 L390.1 335.6 L390.7 333.7 L391.3 331.8 L392.0 329.9 L392.8 328.0 L393.6 326.1 L394.4 324.2 L395.3 322.3 L396.3 320.4 L397.3 318.5 L398.4 316.6 L399.5 314.7 L400.6 312.8 L401.9 310.9 L403.1 309.0 L404.4 307.1 L405.8 305.2 L407.2 303.3 L408.7 301.4 L410.2 299.5 L411.8 297.6 L413.4 295.7 L415.1 293.9 L416.8 292.0 L418.6 290.1 L420.4 288.2 L422.3 286.3 L424.2 284.4 L426.2 282.5 L428.2 280.6 L430.3 278.7 L432.4 276.9 L434.6 275.0 L436.8 273.1 L439.0 271.2 L441.3 269.3 L443.7 267.5 L446.0 265.6 L448.5 263.7 L451.0 261.8 L453.5 260.0 L456.1 258.1 L458.7 256.2 L461.3 254.4 L464.0 252.5 L466.7 250.6 L469.5 248.8 L472.3 246.9 L475.2 245.1 L478.1 243.2 L481.0 241.4 L484.0 239.5 L487.0 237.7 L490.0 235.9 L493.1 234.0 L496.2 232.2 L499.4 230.4 L502.6 228.5 L505.8 226.7 L509.1 224.9 L512.4 223.1 L515.7 221.3 L519.0 219.5 L522.4 217.7 L525.8 215.9 L529.3 214.1 L532.7 212.3 L536.2 210.5 L539.8 208.7 L543.3 206.9 L546.9 205.2 L550.5 203.4 L554.1 201.7 L557.8 199.9 L561.4 198.2 L565.1 196.4 L568.8 194.7 L572.6 193.0 L576.3 191.3 L580.1 189.5 L583.8 187.8 L587.6 186.1 L591.4 184.5 L595.3 182.8 L599.1 181.1 L602.9 179.4 L606.8 177.8 L610.6 176.2 L614.5 174.5 L618.4 172.9 L622.3 171.3 L626.2 169.7 L630.0 168.1 L633.9 166.5 L637.8 165.0 L641.7 163.4 L645.6 161.9 L649.5 160.3 L653.3 158.8 L657.2 157.3 L661.1 155.8 L664.9 154.4 L668.8 152.9 L672.6 151.5 L676.4 150.1 L680.2 148.7 L684.0 147.3 L687.7 145.9 L691.5 144.6 L695.2 143.3 L698.9 142.0 L702.6 140.7 L706.2 139.4 L709.9 138.2 L713.4 137.0 L717.0 135.8 L720.5 134.7 L724.0 133.5 L727.5 132.4 L730.9 131.4 L734.3 130.3 L737.7 129.3 L741.0 128.3 L744.2 127.4 L747.5 126.5 L750.6 125.6 L753.8 124.8 L756.9 123.9 L759.9 123.2 L762.9 122.4 L765.8 121.8 L768.7 121.1 L771.5 120.5 L774.3 119.9 L777.1 119.4 L779.7 118.9 L782.4 118.4 L784.9 118.0 L787.5 117.7 L789.9 117.4 L792.4 117.1 L794.7 116.9 L797.0 116.7 L799.3 116.6 L801.5 116.5 L803.7 116.5 L805.8 116.5 L807.9 116.6 L809.9 116.7 L811.9 116.8 L813.8 117.0 L815.7 117.3 L817.6 117.6 L819.4 117.9 L821.2 118.3 L822.9 118.8 L824.6 119.2 L826.3 119.7 L828.0 120.3 L829.6 120.9 L831.2 121.6 L832.7 122.2 L834.3 123.0 L835.8 123.7 L837.3 124.5 L838.8 125.3 L840.2 126.2 L841.6 127.1 L843.1 128.1 L844.5 129.0 L845.8 130.0 L847.2 131.1 L848.6 132.1 L849.9 133.2 L851.3 134.3 L852.6 135.5 L853.9 136.7 L855.2 137.9 L856.5 139.1 L857.8 140.3 L859.1 141.6 L860.4 142.9 L861.7 144.2M1353.9 426.4 L1357.7 424.4 L1361.5 422.4 L1365.2 420.3 L1368.8 418.3 L1372.4 416.3 L1376.0 414.3 L1379.5 412.3 L1382.9 410.2 L1386.3 408.2 L1389.6 406.2 L1392.9 404.2 L1396.1 402.1 L1399.3 400.1 L1402.4 398.1 L1405.4 396.0 L1408.4 394.0 L1411.3 392.0 L1414.2 389.9 L1417.0 387.9 L1419.8 385.9 L1422.5 383.8 L1425.1 381.8 L1427.7 379.8 L1430.2 377.7 L1432.6 375.7 L1435.0 373.6 L1437.3 371.6 L1439.6 369.6 L1441.7 367.5 L1443.9 365.5 L1445.9 363.4 L1447.9 361.4 L1449.9 359.3 L1451.7 357.3 L1453.5 355.2 L1455.3 353.2 L1456.9 351.2 L1458.5 349.1 L1460.1 347.1 L1461.5 345.0 L1462.9 343.0 L1464.3 340.9 L1465.5 338.9 L1466.7 336.8 L1467.9 334.8 L1468.9 332.7 L1469.9 330.7 L1470.8 328.6 L1471.7 326.6 L1472.5 324.5 L1473.2 322.5 L1473.9 320.4 L1474.4 318.4 L1475.0 316.3 L1475.4 314.3 L1475.8 312.2 L1476.1 310.2 L1476.3 308.1 L1476.5 306.1 L1476.6 304.0 L1476.6 302.0 L1476.6 299.9 L1476.5 297.9 L1476.3 295.8 L1476.1 293.8 L1475.7 291.8 L1475.4 289.7 L1474.9 287.7 L1474.4 285.6 L1473.8 283.6 L1473.1 281.5 L1472.4 279.5 L1471.6 277.4 L1470.8 275.4M335.2 273.3 L337.5 271.3 L339.8 269.3 L342.2 267.2 L344.7 265.2 L347.2 263.1 L349.8 261.1 L352.5 259.1 L355.2 257.0 L358.0 255.0 L360.8 253.0 L363.7 250.9 L366.7 248.9 L369.8 246.8 L372.9 244.8 L376.0 242.8 L379.3 240.8 L382.5 238.7 L385.9 236.7 L389.3 234.7 L392.8 232.6 L396.3 230.6 L399.9 228.6 L403.5 226.6 L407.2 224.6 L410.9 222.5 L414.7 220.5 L418.6 218.5 L422.5 216.5 L426.5 214.5 L430.5 212.5 L434.6 210.5 L438.7 208.5 L442.8 206.4 L447.1 204.4 L451.3 202.4 L455.6 200.4 L460.0 198.5 L464.4 196.5 L468.9 194.5 L473.4 192.5 L477.9 190.5 L482.5 188.5 L487.1 186.5 L491.8 184.6 L496.5 182.6 L501.2 180.6 L506.0 178.6 L510.8 176.7 L515.7 174.7 L520.5 172.8 L525.5 170.8 L530.4 168.9 L535.4 166.9 L540.4 165.0 L545.4 163.1 L550.5 161.1 L555.6 159.2 L560.7 157.3 L565.9 155.4 L571.0 153.5 L576.2 151.6 L581.4 149.7 L586.6 147.8 L591.9 145.9 L597.1 144.1 L602.4 142.2 L607.6 140.4 L612.9 138.5 L618.2 136.7 L623.5 134.9 L628.8 133.0 L634.1 131.2 L639.4 129.4 L644.6 127.7 L649.9 125.9 L655.2 124.2 L660.5 122.4 L665.7 120.7 L670.9 119.0 L676.1 117.3 L681.3 115.6 L686.5 114.0 L691.6 112.3 L696.7 110.7 L701.8 109.1 L706.8 107.6 L711.8 106.0 L716.7 104.5 L721.6 103.0 L726.4 101.6 L731.2 100.2 L735.9 98.8 L740.5 97.4 L745.0 96.1 L749.5 94.8 L753.9 93.6 L758.2 92.4 L762.4 91.3 L766.5 90.2 L770.5 89.1 L774.4 88.1 L778.2 87.2 L781.9 86.3 L785.4 85.5 L788.8 84.8 L792.1 84.1 L795.3 83.5 L798.3 83.0 L801.2 82.6 L803.9 82.2 L806.6 81.9 L809.0 81.7 L811.4 81.5 L813.6 81.5 L815.7 81.5 L817.7 81.6 L819.5 81.8 L821.3 82.1 L822.9 82.4 L824.4 82.9 L825.8 83.4 L827.1 83.9 L828.3 84.6 L829.4 85.3 L830.5 86.1 L831.5 86.9 L832.4 87.8 L833.2 88.8 L834.0 89.8 L834.8 90.9 L835.5 92.0 L836.1 93.2 L836.7 94.4 L837.3 95.7 L837.8 97.0 L838.3 98.3 L838.8 99.7 L839.2 101.1 L839.7 102.6 L840.1 104.0 L840.5 105.6 L840.8 107.1 L841.2 108.6 L841.5 110.2 L841.9 111.8 L842.2 113.5 L842.5 115.1 L842.8 116.8 L843.1 118.5 L843.4 120.2 L843.7 121.9 L844.0 123.6 L844.3 125.4 L844.6 127.1 L844.9 128.9 L845.1 130.7 L845.4 132.5 L845.7 134.3 L846.0 136.1 L846.3 137.9 L846.5 139.8 L846.8 141.6 L847.1 143.5 L847.4 145.3 L847.7 147.2 L848.0 149.1 L848.3 151.0 L848.6 152.9 L848.9 154.8 L849.2 156.7M584.8 243.2 L587.5 241.9 L590.1 240.6 L592.8 239.4 L595.5 238.1 L598.2 236.9 L600.9 235.6 L603.7 234.4 L606.4 233.2 L609.1 232.0 L611.8 230.8 L614.6 229.6 L617.3 228.4 L620.1 227.2 L622.8 226.0 L625.6 224.9 L628.4 223.7 L631.1 222.6 L633.9 221.5 L636.6 220.4 L639.4 219.2 L642.2 218.2 L644.9 217.1 L647.7 216.0 L650.4 214.9 L653.2 213.9 L656.0 212.8 L658.7 211.8 L661.5 210.8 L664.2 209.8 L666.9 208.8 L669.7 207.8 L672.4 206.9 L675.1 205.9 L677.9 205.0 L680.6 204.1 L683.3 203.2 L686.0 202.3 L688.7 201.4 L691.3 200.5 L694.0 199.7 L696.7 198.9 L699.3 198.1 L702.0 197.3 L704.6 196.5 L707.3 195.7 L709.9 195.0 L712.5 194.2 L715.1 193.5 L717.6 192.8 L720.2 192.2 L722.8 191.5 L725.3 190.9 L727.8 190.2 L730.4 189.6 L732.9 189.0 L735.4 188.5 L737.8 187.9 L740.3 187.4 L742.8 186.9 L745.2 186.4 L747.6 186.0 L750.0 185.5 L752.4 185.1 L754.8 184.7 L757.2 184.3 L759.5 183.9 L761.9 183.6 L764.2 183.3 L766.5 183.0 L768.8 182.7 L771.1 182.4 L773.4 182.2 L775.6 182.0 L777.9 181.8 L780.1 181.7 L782.3 181.5 L784.5 181.4 L786.7 181.3M415.9 427.7 L415.8 426.6 L415.8 425.5 L415.7 424.3 L415.7 423.2 L415.6 422.0 L415.6 420.9 L415.5 419.7 L415.5 418.5 L415.4 417.3 L415.4 416.1 L415.4 414.8 L415.4 413.6 L415.4 412.4 L415.4 411.1 L415.4 409.9 L415.4 408.6 L415.4 407.3 L415.5 406.1 L415.5 404.8 L415.6 403.5 L415.7 402.2 L415.8 400.9 L415.9 399.5 L416.1 398.2 L416.2 396.9 L416.4 395.5 L416.6 394.2 L416.8 392.8 L417.0 391.5 L417.3 390.1 L417.5 388.8 L417.8 387.4 L418.1 386.0 L418.4 384.6 L418.8 383.2 L419.2 381.8 L419.6 380.4 L420.0 379.0 L420.4 377.6 L420.9 376.2 L421.4 374.8 L421.9 373.4 L422.4 372.0 L423.0 370.5 L423.6 369.1 L424.2 367.7 L424.8 366.2 L425.5 364.8 L426.2 363.3 L426.9 361.9 L427.7 360.4 L428.5 359.0 L429.3 357.5 L430.1 356.1 L430.9 354.6 L431.8 353.1 L432.7 351.7 L433.7 350.2 L434.7 348.7 L435.7 347.3 L436.7 345.8 L437.7 344.3 L438.8 342.8 L439.9 341.3 L441.1 339.9 L442.2 338.4 L443.4 336.9 L444.7 335.4 L445.9 333.9 L447.2 332.4 L448.5 330.9 L449.9 329.5 L451.2 328.0 L452.6 326.5 L454.1 325.0 L455.5 323.5 L457.0 322.0 L458.5 320.5 L460.1 319.0 L461.6 317.5 L463.2 316.0 L464.9 314.5 L466.5 313.1 L468.2 311.6 L469.9 310.1 L471.7 308.6 L473.4 307.1 L475.2 305.6 L477.0 304.1 L478.9 302.6 L480.7 301.2 L482.6 299.7 L484.6 298.2 L486.5 296.7 L488.5 295.2 L490.5 293.8 L492.5 292.3 L494.6 290.8 L496.6 289.3 L498.7 287.9 L500.9 286.4 L503.0 284.9 L505.2 283.5 L507.4 282.0 L509.6 280.6 L511.8 279.1 L514.1 277.7 L516.4 276.2 L518.7 274.8 L521.0 273.3 L523.4 271.9 L525.7 270.5 L528.1 269.0 L530.5 267.6 L532.9 266.2 L535.4 264.8 L537.9 263.4 L540.3 262.0 L542.8 260.5 L545.4 259.1 L547.9 257.8 L550.4 256.4 L553.0 255.0 L555.6 253.6 L558.2 252.2 L560.8 250.9 L563.4 249.5 L566.1 248.1 L568.7 246.8 L571.4 245.4 L574.1 244.1 L576.7 242.8 L579.4 241.4 L582.2 240.1 L584.9 238.8 L587.6 237.5 L590.4 236.2 L593.1 234.9 L595.9 233.6 L598.6 232.4 L601.4 231.1 L604.2 229.8 L607.0 228.6 L609.8 227.3 L612.6 226.1 L615.4 224.9 L618.2 223.7 L621.0 222.5 L623.8 221.3 L626.6 220.1 L629.4 218.9 L632.3 217.8 L635.1 216.6 L637.9 215.5 L640.7 214.3 L643.5 213.2 L646.4 212.1 L649.2 211.0 L652.0 209.9 L654.8 208.8 L657.6 207.8 L660.4 206.7 L663.2 205.7 L666.0 204.7 L668.8 203.7 L671.6 202.7 L674.4 201.7 L677.2 200.7 L679.9 199.8 L682.7 198.9 L685.4 197.9 L688.2 197.0 L690.9 196.1 L693.6 195.3 L696.4 194.4 L699.1 193.6 L701.8 192.7 L704.4 191.9 L707.1 191.1 L709.8 190.4 L712.4 189.6 L715.0 188.9 L717.7 188.2 L720.3 187.5 L722.9 186.8 L725.4 186.1 L728.0 185.5 L730.6 184.9 L733.1 184.3 L735.6 183.7 L738.1 183.1 L740.6 182.6 L743.1 182.1 L745.6 181.6 L748.0 181.1 L750.5 180.6 L752.9 180.2 L755.3 179.8 L757.7 179.4 L760.0 179.0 L762.4 178.7 L764.7 178.4 L767.0 178.1 L769.4 177.8 L771.6 177.5 L773.9 177.3 L776.2 177.1 L778.4 176.9 L780.7 176.8 L782.9 176.6 L785.1 176.5 L787.3 176.4 L789.4 176.4 L791.6 176.3 L793.7 176.3 L795.9 176.3 L798.0 176.3 L800.1 176.4 L802.2 176.5 L804.3 176.6 L806.3 176.7 L808.4 176.8 L810.5 177.0 L812.5 177.2 L814.5 177.4 L816.5 177.7 L818.5 177.9 L820.5 178.2 L822.5 178.5 L824.5 178.9 L826.5 179.2 L828.4 179.6 L830.4 180.0 L832.3 180.4 L834.2 180.9 L836.2 181.3 L838.1 181.8 L840.0 182.3 L841.9 182.9 L843.8 183.4 L845.7 184.0 L847.6 184.6 L849.5 185.2 L851.4 185.8 L853.3 186.5 L855.2 187.2 L857.0 187.9 L858.9 188.6 L860.8 189.3 L862.6 190.0 L864.5 190.8M416.8 430.0 L416.0 428.6 L415.2 427.2 L414.5 425.8 L413.7 424.4 L413.0 422.9 L412.3 421.5 L411.6 420.0 L410.9 418.6 L410.3 417.1 L409.6 415.6 L409.0 414.2 L408.4 412.7 L407.8 411.2 L407.3 409.7 L406.7 408.2 L406.2 406.7 L405.7 405.2 L405.3 403.6 L404.9 402.1 L404.4 400.6 L404.1 399.0 L403.7 397.5 L403.4 395.9 L403.1 394.4 L402.8 392.8 L402.6 391.2 L402.4 389.7 L402.2 388.1 L402.1 386.5 L402.0 384.9 L401.9 383.4 L401.8 381.8 L401.8 380.2 L401.8 378.6 L401.9 377.0 L402.0 375.4 L402.1 373.8 L402.3 372.1 L402.5 370.5 L402.7 368.9 L402.9 367.3 L403.2 365.7 L403.6 364.0 L403.9 362.4 L404.4 360.8 L404.8 359.2 L405.3 357.5 L405.8 355.9 L406.4 354.2 L406.9 352.6 L407.6 351.0 L408.2 349.3 L408.9 347.7 L409.7 346.0 L410.5 344.4 L411.3 342.7 L412.1 341.1 L413.0 339.4 L414.0 337.8 L414.9 336.1 L415.9 334.5 L417.0 332.8 L418.1 331.2 L419.2 329.5 L420.4 327.8 L421.6 326.2 L422.8 324.5 L424.1 322.9 L425.4 321.2 L426.7 319.6 L428.1 317.9 L429.5 316.2 L431.0 314.6 L432.5 312.9 L434.0 311.3 L435.6 309.6 L437.2 308.0 L438.9 306.3 L440.5 304.6 L442.3 303.0 L444.0 301.3 L445.8 299.7 L447.6 298.0 L449.5 296.4 L451.4 294.7 L453.3 293.1 L455.3 291.4 L457.3 289.8 L459.3 288.2 L461.4 286.5 L463.5 284.9 L465.6 283.2 L467.8 281.6 L470.0 280.0 L472.2 278.3 L474.4 276.7 L476.7 275.1 L479.0 273.5 L481.4 271.8 L483.8 270.2 L486.2 268.6 L488.6 267.0 L491.1 265.4 L493.6 263.8 L496.1 262.2 L498.7 260.6 L501.2 259.0 L503.9 257.4 L506.5 255.8 L509.1 254.2 L511.8 252.7 L514.5 251.1 L517.3 249.5 L520.0 247.9 L522.8 246.4 L525.6 244.8 L528.4 243.3 L531.2 241.7 L534.1 240.2 L537.0 238.7 L539.9 237.1 L542.8 235.6 L545.8 234.1 L548.7 232.6 L551.7 231.1 L554.7 229.6 L557.7 228.1 L560.7 226.6 L563.7 225.1 L566.8 223.6 L569.9 222.2 L572.9 220.7 L576.0 219.3 L579.1 217.8 L582.2 216.4 L585.3 215.0 L588.5 213.5 L591.6 212.1 L594.7 210.7 L597.9 209.4 L601.0 208.0 L604.2 206.6 L607.4 205.2 L610.5 203.9 L613.7 202.6 L616.9 201.2 L620.1 199.9 L623.2 198.6 L626.4 197.3 L629.6 196.0 L632.8 194.8 L636.0 193.5 L639.1 192.3 L642.3 191.1 L645.4 189.8 L648.6 188.6 L651.8 187.5 L654.9 186.3 L658.0 185.1 L661.2 184.0 L664.3 182.9 L667.4 181.7 L670.5 180.7 L673.6 179.6 L676.6 178.5 L679.7 177.5 L682.7 176.5 L685.8 175.5 L688.8 174.5 L691.8 173.5 L694.8 172.6 L697.7 171.6 L700.7 170.7 L703.6 169.8 L706.5 169.0 L709.4 168.1 L712.3 167.3 L715.1 166.5 L717.9 165.7 L720.7 165.0 L723.5 164.3 L726.3 163.6 L729.0 162.9 L731.7 162.2 L734.4 161.6 L737.1 161.0 L739.7 160.4 L742.3 159.9 L744.9 159.3 L747.5 158.8 L750.0 158.4 L752.5 157.9 L755.0 157.5 L757.5 157.1 L759.9 156.8 L762.3 156.4 L764.7 156.1 L767.1 155.9 L769.4 155.6 L771.7 155.4 L774.0 155.2 L776.3 155.1 L778.5 154.9 L780.7 154.9 L782.9 154.8 L785.1 154.8 L787.2 154.8 L789.3 154.8 L791.4 154.8 L793.5 154.9 L795.5 155.0 L797.6 155.2 L799.6 155.4 L801.6 155.6 L803.5 155.8 L805.5 156.1 L807.4 156.4 L809.3 156.7 L811.2 157.0 L813.1 157.4 L815.0 157.8 L816.8 158.2 L818.7 158.7 L820.5 159.2M1004.8 239.3 L1005.0 237.3 L1005.2 235.3 L1005.5 233.3 L1005.6 231.3 L1005.8 229.3 L1006.0 227.3 L1006.2 225.3 L1006.3 223.3 L1006.5 221.3 L1006.6 219.3 L1006.7 217.3 L1006.8 215.4 L1006.9 213.4 L1007.0 211.4 L1007.1 209.4 L1007.2 207.4 L1007.2 205.5 L1007.2 203.5 L1007.3 201.5 L1007.3 199.6 L1007.3 197.6 L1007.3 195.7 L1007.3 193.7 L1007.3 191.7 L1007.3 189.8 L1007.2 187.9 L1007.2 185.9 L1007.1 184.0 L1007.1 182.0 L1007.0 180.1 L1006.9 178.2 L1006.8 176.3 L1006.7 174.4 L1006.6 172.4 L1006.5 170.5 L1006.3 168.6 L1006.2 166.7 L1006.1 164.9 L1005.9 163.0 L1005.8 161.1 L1005.6 159.2 L1005.4 157.4 L1005.3 155.5 L1005.1 153.7 L1004.9 151.8 L1004.7 150.0 L1004.5 148.2 L1004.3 146.3 L1004.2 144.5 L1004.0 142.7 L1003.8 141.0 L1003.6 139.2 L1003.4 137.4 L1003.2 135.7 L1003.0 133.9 L1002.8 132.2 L1002.6 130.5 L1002.4 128.8 L1002.2 127.1 L1002.0 125.4 L1001.9 123.8 L1001.7 122.2 L1001.5 120.5 L1001.4 119.0 L1001.3 117.4 L1001.2 115.8 L1001.1 114.3 L1001.0 112.8 L1001.0 111.3 L1000.9 109.9 L1000.9 108.4 L1000.9 107.0 L1001.0 105.7 L1001.1 104.4 L1001.2 103.1 L1001.4 101.8 L1001.6 100.6 L1001.8 99.4 L1002.2 98.3 L1002.5 97.2 L1002.9 96.1 L1003.4 95.1 L1004.0 94.2 L1004.6 93.3 L1005.3 92.4 L1006.1 91.7 L1007.0 90.9 L1008.0 90.3 L1009.1 89.7 L1010.3 89.2 L1011.6 88.7 L1013.0 88.3M428.7 357.6 L426.9 355.7 L425.1 353.7 L423.3 351.8 L421.6 349.9 L419.9 347.9 L418.3 346.0 L416.8 344.0 L415.3 342.1 L413.8 340.1 L412.4 338.2 L411.1 336.2 L409.8 334.3 L408.5 332.3 L407.4 330.4 L406.2 328.4 L405.2 326.5 L404.1 324.5 L403.2 322.6 L402.3 320.6 L401.4 318.7 L400.6 316.7 L399.8 314.8 L399.2 312.8 L398.5 310.9 L397.9 308.9 L397.4 307.0 L396.9 305.0 L396.5 303.1 L396.1 301.1 L395.8 299.2 L395.6 297.2 L395.4 295.3 L395.2 293.3 L395.2 291.4 L395.1 289.4 L395.1 287.5 L395.2 285.5 L395.3 283.6 L395.5 281.7 L395.8 279.7 L396.1 277.8 L396.4 275.8 L396.8 273.9 L397.3 272.0 L397.8 270.0 L398.3 268.1 L398.9 266.2 L399.6 264.2 L400.3 262.3 L401.1 260.4 L401.9 258.4 L402.8 256.5 L403.7 254.6 L404.7 252.7 L405.7 250.7 L406.8 248.8 L407.9 246.9 L409.1 245.0 L410.4 243.1 L411.6 241.2 L413.0 239.3 L414.3 237.3 L415.8 235.4 L417.2 233.5 L418.7 231.6 L420.3 229.7 L421.9 227.9 L423.6 226.0 L425.3 224.1 L427.0 222.2 L428.8 220.3 L430.6 218.4 L432.5 216.6 L434.4 214.7 L436.4 212.8 L438.4 211.0 L440.4 209.1 L442.5 207.2 L444.6 205.4 L446.7 203.5 L448.9 201.7 L451.1 199.9 L453.4 198.0 L455.7 196.2 L458.0 194.4 L460.4 192.6 L462.7 190.7 L465.2 188.9 L467.6 187.1 L470.1 185.4 L472.6 183.6 L475.1 181.8 L477.6 180.0 L480.2 178.2 L482.8 176.5M1318.5 174.7 L1313.4 173.0 L1308.3 171.3 L1303.2 169.5 L1298.0 167.8 L1292.9 166.1 L1287.7 164.4 L1282.6 162.7 L1277.4 161.0 L1272.2 159.4 L1267.0 157.7 L1261.8 156.1 L1256.7 154.5 L1251.5 152.8 L1246.3 151.2 L1241.1 149.6 L1236.0 148.1 L1230.8 146.5 L1225.7 145.0 L1220.6 143.4 L1215.5 141.9 L1210.4 140.4 L1205.4 138.9 L1200.3 137.5 L1195.3 136.1 L1190.4 134.6 L1185.4 133.2 L1180.5 131.9 L1175.7 130.5 L1170.9 129.2 L1166.1 127.9 L1161.4 126.6 L1156.7 125.4 L1152.1 124.1 L1147.6 123.0 L1143.1 121.8 L1138.7 120.7 L1134.3 119.6 L1130.0 118.5 L1125.8 117.5 L1121.7 116.5 L1117.6 115.5 L1113.6 114.6 L1109.7 113.7 L1105.9 112.9 L1102.2 112.1 L1098.6 111.4 L1095.0 110.7 L1091.6 110.0 L1088.2 109.4 L1085.0 108.8 L1081.9 108.3 L1078.8 107.9 L1075.9 107.4 L1073.0 107.1 L1070.3 106.8 L1067.7 106.5 L1065.2 106.3 L1062.8 106.2 L1060.4 106.1 L1058.2 106.0 L1056.1 106.0 L1054.1 106.1 L1052.2 106.2 L1050.4 106.4 L1048.7 106.6 L1047.0 106.9 L1045.5 107.3 L1044.0 107.6 L1042.6 108.1 L1041.3 108.6 L1040.1 109.1 L1039.0 109.7 L1037.9 110.3 L1036.9 111.0 L1036.0 111.7 L1035.1 112.5 L1034.3 113.3 L1033.6 114.2 L1032.9 115.1 L1032.2 116.0M523.3 413.9 L520.4 411.9 L517.6 409.8 L514.8 407.8 L512.0 405.7 L509.3 403.7 L506.7 401.6 L504.0 399.6 L501.5 397.6 L499.0 395.5 L496.5 393.5 L494.1 391.4 L491.7 389.3 L489.4 387.3 L487.1 385.2 L484.9 383.2 L482.7 381.1 L480.6 379.1 L478.5 377.0 L476.5 375.0 L474.5 372.9 L472.6 370.8 L470.7 368.8 L468.9 366.7 L467.1 364.7 L465.4 362.6 L463.8 360.5 L462.2 358.5 L460.6 356.4 L459.1 354.4 L457.7 352.3 L456.3 350.2 L455.0 348.2 L453.7 346.1 L452.4 344.0 L451.3 342.0 L450.2 339.9 L449.1 337.9 L448.1 335.8 L447.1 333.7 L446.2 331.7 L445.4 329.6 L444.6 327.5 L443.9 325.5 L443.2 323.4 L442.6 321.3 L442.1 319.3 L441.5 317.2 L441.1 315.1 L440.7 313.1 L440.4 311.0 L440.1 309.0 L439.9 306.9 L439.7 304.8 L439.6 302.8 L439.6 300.7 L439.6 298.6 L439.6 296.6 L439.7 294.5 L439.9 292.4 L440.1 290.4 L440.4 288.3 L440.8 286.3 L441.2 284.2 L441.6 282.1 L442.1 280.1 L442.7 278.0 L443.3 275.9 L444.0 273.9 L444.7 271.8 L445.5 269.8 L446.4 267.7 L447.3 265.7 L448.2 263.6 L449.2 261.5 L450.3 259.5 L451.4 257.4 L452.6 255.4 L453.8 253.3 L455.1 251.3 L456.4 249.2 L457.8 247.2 L459.2 245.1 L460.7 243.1 L462.3 241.0 L463.9 239.0 L465.5 236.9 L467.2 234.9 L469.0 232.8 L470.8 230.8 L472.6 228.7 L474.5 226.7 L476.5 224.7 L478.5 222.6 L480.5 220.6 L482.6 218.5 L484.8 216.5 L486.9 214.5 L489.2 212.4 L491.5 210.4 L493.8 208.4 L496.2 206.3 L498.6 204.3 L501.1 202.3 L503.6 200.3 L506.1 198.3 L508.7 196.2 L511.4 194.2 L514.0 192.2 L516.8 190.2 L519.5 188.2 L522.3 186.2 L525.2 184.2 L528.1 182.2 L531.0 180.2 L533.9 178.2 L536.9 176.2 L540.0 174.2 L543.0 172.2 L546.1 170.2 L549.2 168.2 L552.4 166.3 L555.6 164.3 L558.8 162.3 L562.1 160.4 L565.3 158.4 L568.6 156.5 L572.0 154.5 L575.3 152.6 L578.7 150.6 L582.1 148.7 L585.5 146.8 L589.0 144.9 L592.4 142.9 L595.9 141.0 L599.4 139.1 L602.9 137.2 L606.4 135.4 L609.9 133.5 L613.5 131.6 L617.0 129.8 L620.5 127.9 L624.1 126.1 L627.6 124.3 L631.1 122.4 L634.7 120.6 L638.2 118.9 L641.7 117.1 L645.2 115.3 L648.6 113.6 L652.1 111.9 L655.5 110.2 L658.9 108.5 L662.2 106.8 L665.5 105.2M1135.6 103.5 L1129.6 101.9 L1123.6 100.4 L1117.7 98.8 L1111.9 97.3 L1106.2 95.8 L1100.5 94.4 L1095.0 93.0 L1089.5 91.6 L1084.1 90.3 L1078.8 89.0 L1073.7 87.7 L1068.7 86.5 L1063.8 85.4 L1059.1 84.3 L1054.5 83.3 L1050.0 82.3 L1045.8 81.4 L1041.7 80.5 L1037.8 79.8 L1034.0 79.1 L1030.5 78.5 L1027.1 77.9 L1024.0 77.5 L1021.0 77.1 L1018.3 76.9 L1015.7 76.7 L1013.4 76.6 L1011.2 76.6 L1009.2 76.6 L1007.5 76.8 L1005.9 77.1 L1004.5 77.4 L1003.2 77.9 L1002.1 78.4 L1001.2 79.0 L1000.4 79.6 L999.8 80.4 L999.2 81.2 L998.8 82.1 L998.5 83.1 L998.3 84.1 L998.2 85.2 L998.2 86.3 L998.3 87.5 L998.4 88.7 L998.6 90.0 L998.9 91.3 L999.2 92.7 L999.5 94.1 L999.9 95.5 L1000.4 97.0 L1000.9 98.5 L1001.4 100.1 L1001.9 101.6 L1002.5 103.2 L1003.1 104.8 L1003.7 106.5 L1004.3 108.2 L1005.0 109.8 L1005.6 111.5 L1006.3 113.3 L1007.0 115.0 L1007.7 116.8 L1008.4 118.5 L1009.1 120.3 L1009.8 122.1 L1010.5 123.9 L1011.2 125.7 L1011.9 127.6 L1012.7 129.4 L1013.4 131.3 L1014.1 133.1 L1014.8 135.0M760.5 413.8 L759.6 411.7 L758.7 409.6 L757.9 407.4 L757.0 405.3 L756.2 403.1 L755.4 401.0 L754.6 398.9 L753.8 396.7 L753.1 394.6 L752.3 392.5 L751.6 390.3 L750.9 388.2 L750.3 386.0 L749.6 383.9 L749.0 381.8 L748.4 379.6 L747.8 377.5 L747.2 375.3 L746.6 373.2 L746.1 371.1 L745.6 368.9 L745.1 366.8 L744.6 364.6 L744.2 362.5 L743.8 360.4 L743.4 358.2 L743.0 356.1 L742.6 353.9 L742.3 351.8 L741.9 349.7 L741.6 347.5 L741.4 345.4 L741.1 343.2 L740.8 341.1 L740.6 339.0 L740.4 336.8 L740.3 334.7 L740.1 332.6 L740.0 330.4 L739.9 328.3 L739.8 326.1 L739.7 324.0 L739.6 321.9 L739.6 319.7 L739.6 317.6 L739.6 315.4 L739.7 313.3 L739.7 311.2 L739.8 309.0 L739.9 306.9 L740.0 304.7 L740.2 302.6 L740.3 300.5 L740.5 298.3 L740.7 296.2 L741.0 294.0 L741.2 291.9 L741.5 289.8 L741.8 287.6 L742.1 285.5 L742.4 283.3 L742.8 281.2 L743.2 279.1 L743.6 276.9 L744.0 274.8 L744.4 272.6 L744.9 270.5 L745.3 268.4 L745.8 266.2 L746.4 264.1 L746.9 262.0 L747.5 259.8 L748.1 257.7 L748.7 255.5 L749.3 253.4 L749.9 251.3 L750.6 249.1 L751.3 247.0 L752.0 244.8 L752.7 242.7 L753.4 240.6 L754.2 238.4 L755.0 236.3 L755.8 234.1 L756.6 232.0 L757.4 229.9 L758.3 227.7 L759.2 225.6 L760.1 223.4 L761.0 221.3 L761.9 219.2 L762.9 217.0 L763.8 214.9 L764.8 212.7 L765.8 210.6 L766.8 208.5 L767.9 206.3 L768.9 204.2 L770.0 202.1 L771.1 199.9 L772.2 197.8 L773.3 195.6 L774.5 193.5 L775.7 191.4 L776.8 189.2 L778.0 187.1 L779.2 184.9 L780.5 182.8 L781.7 180.7 L783.0 178.5 L784.2 176.4 L785.5 174.2 L786.8 172.1 L788.1 170.0 L789.5 167.8 L790.8 165.7 L792.2 163.5 L793.6 161.4 L795.0 159.3 L796.4 157.1 L797.8 155.0 L799.2 152.9 L800.7 150.7 L802.1 148.6 L803.6 146.4 L805.1 144.3 L806.6 142.2 L808.1 140.0 L809.6 137.9 L811.2 135.7 L812.7 133.6 L814.3 131.5 L815.9 129.3 L817.4 127.2 L819.0 125.0 L820.6 122.9 L822.3 120.8 L823.9 118.6 L825.5 116.5 L827.2 114.3 L828.8 112.2 L830.5 110.1 L832.2 107.9 L833.9 105.8 L835.6 103.7 L837.3 101.5 L839.0 99.4 L840.7 97.2 L842.4 95.1 L844.2 93.0 L845.9 90.8 L847.6 88.7 L849.4 86.5 L851.2 84.4 L852.9 82.3 L854.7 80.1 L856.5 78.0 L858.3 75.9 L860.1 73.7 L861.9 71.6 L863.7 69.4 L865.5 67.3 L867.3 65.2 L869.1 63.0 L871.0 60.9 L872.8 58.8 L874.6 56.6 L876.4 54.5 L878.3 52.4 L880.1 50.2 L882.0 48.1 L883.8 46.0 L885.6 43.8 L887.5 41.7 L889.3 39.6 L891.1 37.5 L893.0 35.4 L894.7 33.3 L896.4 31.4 L897.7 29.6 L897.0 29.0 L911.6 30.2 L915.7 32.1 L920.3 34.1 L925.0 36.2 L929.7 38.2 L934.5 40.4 L939.3 42.5 L944.0 44.6 L948.8 46.7 L953.6 48.9 L958.4 51.0 L963.2 53.1 L968.0 55.3 L972.8 57.4 L977.5 59.5 L982.3 61.7 L987.0 63.8 L991.8 65.9 L996.5 68.1 L1001.2 70.2 L1005.9 72.3 L1010.6 74.5 L1015.3 76.6 L1019.9 78.8 L1024.6 80.9 L1029.2 83.0 L1033.8 85.2 L1038.4 87.3 L1043.0 89.5 L1047.6 91.6 L1052.1 93.7 L1056.6 95.9 L1061.1 98.0 L1065.6 100.1 L1070.1 102.3 L1074.5 104.4 L1078.9 106.6 L1083.3 108.7M593.6 413.6 L590.9 411.7 L588.2 409.9 L585.6 408.0 L582.9 406.1 L580.3 404.3 L577.7 402.4 L575.2 400.5 L572.7 398.6 L570.2 396.8 L567.8 394.9 L565.3 393.0 L562.9 391.1 L560.6 389.2 L558.3 387.3 L556.0 385.4 L553.7 383.5 L551.5 381.6 L549.3 379.7 L547.2 377.8 L545.1 375.9 L543.0 374.0 L541.0 372.1 L539.0 370.2 L537.0 368.3 L535.1 366.4 L533.2 364.5 L531.4 362.6 L529.5 360.7 L527.8 358.7 L526.0 356.8 L524.3 354.9 L522.7 353.0 L521.1 351.1 L519.5 349.2 L518.0 347.2 L516.5 345.3 L515.0 343.4 L513.6 341.5 L512.2 339.6 L510.9 337.6 L509.6 335.7 L508.4 333.8 L507.1 331.9 L506.0 329.9 L504.9 328.0 L503.8 326.1 L502.7 324.2 L501.7 322.2 L500.8 320.3 L499.9 318.4 L499.0 316.5 L498.2 314.5 L497.4 312.6 L496.7 310.7 L496.0 308.8 L495.3 306.8 L494.7 304.9 L494.1 303.0 L493.6 301.1 L493.1 299.2 L492.7 297.2 L492.3 295.3 L492.0 293.4 L491.7 291.5 L491.4 289.6 L491.2 287.6 L491.0 285.7 L490.9 283.8 L490.8 281.9 L490.7 280.0 L490.7 278.1 L490.7 276.1 L490.8 274.2 L490.9 272.3 L491.1 270.4 L491.3 268.5 L491.6 266.6 L491.8 264.7 L492.2 262.8 L492.5 260.9 L493.0 259.0 L493.4 257.1 L493.9 255.2 L494.4 253.3 L495.0 251.4 L495.6 249.5 L496.3 247.6 L497.0 245.8 L497.7 243.9 L498.5 242.0 L499.3 240.1 L500.1 238.2 L501.0 236.4 L502.0 234.5 L502.9 232.6 L503.9 230.8 L505.0 228.9 L506.0 227.0 L507.1 225.2 L508.3 223.3 L509.4 221.5 L510.6 219.6 L511.9 217.8 L513.2 216.0 L514.5 214.1 L515.8 212.3 L517.2 210.5 L518.6 208.7 L520.0 206.9 L521.5 205.0 L522.9 203.2 L524.5 201.4 L526.0 199.6 L527.6 197.9 L529.2 196.1 L530.8 194.3 L532.4 192.5 L534.1 190.8 L535.8 189.0 L537.5 187.3 L539.2 185.5 L541.0 183.8 L542.7 182.0 L544.5 180.3 L546.3 178.6 L548.1 176.9 L549.9 175.2 L551.8 173.5 L553.6 171.8 L555.5 170.2 L557.3 168.5 L559.2 166.9 L561.1 165.2 L563.0 163.6 L564.9 162.0 L566.7 160.4 L568.6 158.8 L570.5 157.2 L572.4 155.7 L574.2 154.1 L576.1 152.6 L577.9 151.1 L579.8 149.6 L581.6 148.1 L583.4 146.6 L585.2 145.2 L586.9 143.7 L588.6 142.3 L590.3 140.9 L592.0 139.5 L593.6 138.2 L595.2 136.8 L596.8 135.5 L598.3 134.3 L599.8 133.0 L601.2 131.8 L602.5 130.5 L603.8 129.4 L605.1 128.2 L606.2 127.1 L607.3 126.0M1194.9 124.9 L1190.3 123.9 L1185.7 122.9 L1181.2 121.9 L1176.8 121.0 L1172.4 120.1 L1168.2 119.3 L1164.1 118.4 L1160.1 117.7 L1156.1 116.9 L1152.3 116.2 L1148.6 115.6 L1145.0 115.0 L1141.5 114.4 L1138.1 113.9 L1134.9 113.4 L1131.7 113.0 L1128.7 112.6 L1125.8 112.3 L1123.0 112.0 L1120.3 111.8 L1117.7 111.6 L1115.3 111.5 L1113.0 111.4 L1110.8 111.4 L1108.7 111.4 L1106.7 111.4 L1104.8 111.6 L1103.1 111.7 L1101.4 112.0 L1099.9 112.2 L1098.5 112.5 L1097.2 112.9 L1095.9 113.3 L1094.8 113.8 L1093.8 114.3 L1092.8 114.9 L1092.0 115.5 L1091.2 116.1 L1090.5 116.8 L1089.9 117.5 L1089.4 118.3 L1088.9 119.1 L1088.5 119.9 L1088.2 120.8 L1087.9 121.7 L1087.7 122.7 L1087.5 123.7 L1087.4 124.7 L1087.4 125.8 L1087.4 126.9 L1087.4 128.0 L1087.5 129.1 L1087.6 130.3 L1087.8 131.5 L1088.0 132.7 L1088.2 134.0M581.6 428.8 L578.5 426.8 L575.5 424.9 L572.5 422.9 L569.5 421.0 L566.6 419.0 L563.7 417.1 L560.9 415.1 L558.0 413.1 L555.3 411.2 L552.5 409.2 L549.8 407.2 L547.1 405.3 L544.5 403.3 L541.9 401.3 L539.3 399.3 L536.8 397.3 L534.3 395.4 L531.9 393.4 L529.5 391.4 L527.1 389.4 L524.8 387.4 L522.5 385.4 L520.3 383.4 L518.1 381.5 L515.9 379.5 L513.8 377.5 L511.8 375.5 L509.7 373.5 L507.8 371.5 L505.8 369.5 L503.9 367.5 L502.1 365.5 L500.3 363.5 L498.6 361.5 L496.9 359.5 L495.2 357.5 L493.6 355.5 L492.0 353.5 L490.5 351.5 L489.0 349.5 L487.6 347.5 L486.2 345.5 L484.9 343.5 L483.6 341.5 L482.4 339.5 L481.2 337.4 L480.1 335.4 L479.0 333.4 L478.0 331.4 L477.0 329.4 L476.0 327.4 L475.2 325.4 L474.3 323.4 L473.5 321.4 L472.8 319.4 L472.1 317.4 L471.5 315.4 L470.9 313.4 L470.3 311.4 L469.8 309.4 L469.4 307.3 L469.0 305.3 L468.6 303.3 L468.4 301.3 L468.1 299.3 L467.9 297.3 L467.8 295.3 L467.7 293.3 L467.6 291.3 L467.7 289.3 L467.7 287.3 L467.8 285.3 L468.0 283.3 L468.2 281.3 L468.4 279.3 L468.7 277.3 L469.1 275.3 L469.5 273.3 L469.9 271.3 L470.5 269.3 L471.0 267.3 L471.6 265.3 L472.2 263.3 L472.9 261.3 L473.7 259.3 L474.5 257.3 L475.3 255.4 L476.2 253.4 L477.1 251.4 L478.1 249.4 L479.1 247.4 L480.2 245.4 L481.3 243.4 L482.5 241.5 L483.7 239.5 L485.0 237.5 L486.3 235.5 L487.6 233.6 L489.0 231.6 L490.4 229.6 L491.9 227.7 L493.4 225.7 L495.0 223.7 L496.6 221.8 L498.3 219.8 L499.9 217.8 L501.7 215.9 L503.4 213.9 L505.3 212.0 L507.1 210.0 L509.0 208.1 L510.9 206.2 L512.9 204.2 L514.9 202.3 L516.9 200.4 L519.0 198.4 L521.1 196.5 L523.2 194.6 L525.4 192.7 L527.6 190.8 L529.9 188.9 L532.1 186.9 L534.4 185.1 L536.8 183.2 L539.1 181.3 L541.5 179.4 L543.9 177.5 L546.4 175.6 L548.9 173.8 L551.3 171.9 L553.9 170.0 L556.4 168.2 L559.0 166.3 L561.5 164.5 L564.1 162.7 L566.8 160.9 L569.4 159.0 L572.0 157.2 L574.7 155.4 L577.4 153.7 L580.0 151.9 L582.7 150.1 L585.4 148.3 L588.1 146.6 L590.8 144.9 L593.5 143.1 L596.2 141.4 L598.9 139.7 L601.6 138.0 L604.3 136.4 L606.9 134.7 L609.6 133.0 L612.2 131.4 L614.8 129.8 L617.4 128.2 L620.0 126.6 L622.5 125.1 L625.0 123.5 L627.5 122.0 L629.9 120.5 L632.3 119.1 L634.7 117.6 L636.9 116.2 L639.2 114.8 L641.3 113.4M1159.0 112.1 L1153.7 110.8 L1148.4 109.5 L1143.2 108.3 L1138.1 107.1 L1133.1 105.9 L1128.2 104.8 L1123.4 103.7 L1118.7 102.7 L1114.1 101.7 L1109.7 100.7 L1105.3 99.8 L1101.1 98.9 L1097.0 98.1 L1093.1 97.4 L1089.3 96.7 L1085.6 96.1 L1082.1 95.5 L1078.7 94.9 L1075.5 94.5 L1072.4 94.1 L1069.5 93.7 L1066.7 93.5 L1064.1 93.3 L1061.6 93.1 L1059.3 93.1 L1057.2 93.0 L1055.2 93.1 L1053.3 93.2 L1051.6 93.4 L1050.0 93.7 L1048.6 94.0 L1047.2 94.4 L1046.1 94.8 L1045.0 95.3 L1044.1 95.9 L1043.2 96.5 L1042.5 97.2 L1041.9 97.9 L1041.4 98.7 L1041.0 99.6 L1040.6 100.5 L1040.4 101.4 L1040.2 102.4 L1040.1 103.4 L1040.1 104.5 L1040.1 105.6 L1040.2 106.8 L1040.3 107.9 L1040.5 109.2 L1040.8 110.4 L1041.1 111.7 L1041.4 113.1 L1041.8 114.4 L1042.2 115.8 L1042.6 117.2 L1043.1 118.7 L1043.6 120.1 L1044.1 121.6 L1044.6 123.1 L1045.2 124.6 L1045.8 126.2 L1046.4 127.8 L1047.0 129.4 L1047.6 131.0 L1048.2 132.6 L1048.8 134.2 L1049.5 135.9 L1050.1 137.6 L1050.8 139.2 L1051.4 140.9 L1052.1 142.7 L1052.7 144.4 L1053.4 146.1 L1054.1 147.9 L1054.7 149.6 L1055.4 151.4 L1056.0 153.2 L1056.7 154.9 L1057.3 156.7 L1057.9 158.5 L1058.6 160.4 L1059.2 162.2 L1059.8 164.0M895.1 430.9 L895.4 428.8 L895.6 426.7 L895.8 424.6 L896.1 422.4 L896.3 420.3 L896.5 418.2 L896.8 416.1 L897.0 413.9 L897.2 411.8 L897.5 409.7 L897.7 407.6 L897.9 405.5 L898.2 403.3 L898.4 401.2 L898.7 399.1 L898.9 397.0 L899.2 394.8 L899.4 392.7 L899.6 390.6 L899.9 388.5 L900.1 386.3 L900.4 384.2 L900.6 382.1 L900.8 380.0 L901.1 377.8 L901.3 375.7 L901.6 373.6 L901.8 371.5 L902.1 369.3 L902.3 367.2 L902.6 365.1 L902.8 363.0 L903.0 360.8 L903.3 358.7 L903.5 356.6 L903.8 354.5 L904.0 352.3 L904.3 350.2 L904.5 348.1 L904.7 346.0 L905.0 343.8 L905.2 341.7 L905.5 339.6 L905.7 337.4 L906.0 335.3 L906.2 333.2 L906.4 331.1 L906.7 328.9 L906.9 326.8 L907.1 324.7 L907.4 322.6 L907.6 320.4 L907.9 318.3 L908.1 316.2 L908.3 314.1 L908.6 311.9 L908.8 309.8 L909.0 307.7 L909.3 305.6 L909.5 303.4 L909.7 301.3 L909.9 299.2 L910.2 297.1 L910.4 294.9 L910.6 292.8 L910.8 290.7 L911.1 288.5 L911.3 286.4 L911.5 284.3 L911.7 282.2 L911.9 280.0 L912.2 277.9 L912.4 275.8 L912.6 273.7 L912.8 271.5 L913.0 269.4 L913.2 267.3 L913.4 265.2 L913.6 263.0 L913.9 260.9 L914.1 258.8 L914.3 256.7 L914.5 254.5 L914.7 252.4 L914.9 250.3 L915.1 248.2 L915.2 246.0 L915.4 243.9 L915.6 241.8 L915.8 239.7 L916.0 237.5 L916.2 235.4 L916.4 233.3 L916.6 231.2 L916.7 229.1 L916.9 226.9 L917.1 224.8 L917.3 222.7 L917.4 220.6 L917.6 218.4 L917.8 216.3 L918.0 214.2 L918.1 212.1 L918.3 210.0 L918.4 207.8 L918.6 205.7 L918.8 203.6 L918.9 201.5 L919.1 199.4 L919.2 197.2 L919.4 195.1 L919.5 193.0 L919.7 190.9 L919.8 188.8 L919.9 186.7 L920.1 184.5 L920.2 182.4 L920.3 180.3 L920.5 178.2 L920.6 176.1 L920.7 174.0 L920.9 171.9 L921.0 169.7 L921.1 167.6 L921.2 165.5 L921.3 163.4 L921.4 161.3 L921.5 159.2 L921.7 157.1 L921.8 155.0 L921.9 152.9 L922.0 150.8 L922.1 148.7 L922.2 146.6 L922.3 144.5 L922.3 142.4 L922.4 140.3 L922.5 138.2 L922.6 136.1 L922.7 134.0 L922.8 131.9 L922.8 129.8 L922.9 127.7 L923.0 125.6 L923.1 123.5 L923.1 121.4 L923.2 119.4 L923.3 117.3 L923.3 115.2 L923.4 113.1 L923.4 111.1 L923.5 109.0 L923.5 106.9 L923.6 104.9 L923.6 102.8 L923.7 100.8 L923.7 98.7 L923.8 96.7 L923.8 94.6 L923.9 92.6 L923.9 90.6 L924.0 88.6 L924.0 86.6 L924.1 84.6 L924.1 82.6 L924.2 80.6 L924.2 78.6 L924.3 76.7 L924.3 74.7 L924.4 72.8 L924.5 70.9 L924.6 69.1 L924.7 67.2 L924.8 65.4 L924.9 63.6 L925.0 61.9 L925.2 60.2 L925.4 58.5 L925.7 57.0 L926.0 55.5 L926.4 54.0 L926.8 52.7 L927.4 51.5 L928.1 50.4 L929.0 49.5 L930.1 48.8 L931.4 48.2 L933.0 47.8 L934.9 47.7 L937.1 47.8 L939.8 48.1 L942.8 48.6 L946.1 49.2 L949.8 50.1 L953.8 51.1 L958.1 52.3 L962.7 53.6 L967.5 55.0 L972.5 56.5 L977.7 58.0 L983.0 59.7 L988.5 61.3 L994.1 63.1 L999.7 64.8 L1005.5 66.6 L1011.3 68.5 L1017.2 70.3 L1023.1 72.2 L1029.1 74.1 L1035.1 76.1 L1041.2 78.0 L1047.3 80.0 L1053.3 81.9 L1059.4 83.9 L1065.6 85.9 L1071.7 87.9 L1077.8 89.9 L1083.9 92.0 L1090.0 94.0 L1096.2 96.0 L1102.3 98.1 L1108.4 100.1 L1114.5 102.1 L1120.5 104.2 L1126.6 106.3 L1132.6 108.3 L1138.7 110.4 L1144.7 112.5 L1150.6 114.5 L1156.6 116.6 L1162.5 118.7 L1168.5 120.8 L1174.3 122.9 L1180.2 124.9 L1186.0 127.0 L1191.8 129.1 L1197.6 131.2 L1203.3 133.3M849.7 429.3 L849.4 427.2 L849.1 425.1 L848.7 422.9 L848.4 420.8 L848.1 418.6 L847.8 416.5 L847.5 414.4 L847.2 412.2 L846.9 410.1 L846.7 408.0 L846.4 405.8 L846.1 403.7 L845.9 401.5 L845.6 399.4 L845.4 397.3 L845.2 395.1 L844.9 393.0 L844.7 390.8 L844.5 388.7 L844.3 386.6 L844.1 384.4 L843.9 382.3 L843.8 380.1 L843.6 378.0 L843.4 375.9 L843.3 373.7 L843.1 371.6 L843.0 369.5 L842.8 367.3 L842.7 365.2 L842.6 363.0 L842.5 360.9 L842.4 358.8 L842.3 356.6 L842.2 354.5 L842.1 352.3 L842.1 350.2 L842.0 348.1 L842.0 345.9 L841.9 343.8 L841.9 341.6 L841.8 339.5 L841.8 337.4 L841.8 335.2 L841.8 333.1 L841.8 331.0 L841.8 328.8 L841.8 326.7 L841.9 324.5 L841.9 322.4 L841.9 320.3 L842.0 318.1 L842.0 316.0 L842.1 313.8 L842.2 311.7 L842.3 309.6 L842.3 307.4 L842.4 305.3 L842.5 303.1 L842.7 301.0 L842.8 298.9 L842.9 296.7 L843.0 294.6 L843.2 292.5 L843.3 290.3 L843.5 288.2 L843.7 286.0 L843.8 283.9 L844.0 281.8 L844.2 279.6 L844.4 277.5 L844.6 275.3 L844.8 273.2 L845.0 271.1 L845.3 268.9 L845.5 266.8 L845.7 264.6 L846.0 262.5 L846.2 260.4 L846.5 258.2 L846.8 256.1 L847.1 254.0 L847.3 251.8 L847.6 249.7 L847.9 247.5 L848.3 245.4 L848.6 243.3 L848.9 241.1 L849.2 239.0 L849.6 236.8 L849.9 234.7 L850.2 232.6 L850.6 230.4 L851.0 228.3 L851.3 226.1 L851.7 224.0 L852.1 221.9 L852.5 219.7 L852.9 217.6 L853.3 215.5 L853.7 213.3 L854.1 211.2 L854.5 209.0 L855.0 206.9 L855.4 204.8 L855.8 202.6 L856.3 200.5 L856.7 198.3 L857.2 196.2 L857.7 194.1 L858.1 191.9 L858.6 189.8 L859.1 187.6 L859.6 185.5 L860.1 183.4 L860.6 181.2 L861.1 179.1 L861.6 177.0 L862.1 174.8 L862.6 172.7 L863.1 170.5 L863.7 168.4 L864.2 166.3 L864.7 164.1 L865.3 162.0 L865.8 159.8 L866.4 157.7 L867.0 155.6 L867.5 153.4 L868.1 151.3 L868.7 149.2 L869.2 147.0 L869.8 144.9 L870.4 142.7 L871.0 140.6 L871.6 138.5 L872.2 136.3 L872.8 134.2 L873.4 132.1 L874.0 129.9 L874.6 127.8 L875.2 125.6 L875.9 123.5 L876.5 121.4 L877.1 119.2 L877.7 117.1 L878.4 115.0 L879.0 112.8 L879.7 110.7 L880.3 108.5 L880.9 106.4 L881.6 104.3 L882.2 102.1 L882.9 100.0 L883.5 97.9 L884.2 95.7 L884.9 93.6 L885.5 91.5 L886.2 89.3 L886.9 87.2 L887.5 85.0 L888.2 82.9 L888.9 80.8 L889.6 78.6 L890.2 76.5 L890.9 74.4 L891.6 72.2 L892.3 70.1 L892.9 68.0 L893.6 65.9 L894.3 63.7 L895.0 61.6 L895.7 59.5 L896.4 57.4 L897.1 55.2 L897.7 53.1 L898.4 51.0 L899.1 48.9 L899.8 46.8 L900.5 44.7 L901.2 42.6 L901.8 40.6 L902.5 38.5 L903.2 36.6 L903.9 34.7 L904.6 32.9 L905.5 31.5 L907.0 30.9 L909.8 31.4 L913.9 32.7 L918.9 34.4 L924.3 36.3 L929.9 38.2 L935.6 40.3 L941.4 42.3 L947.2 44.4 L953.1 46.5 L959.0 48.6 L964.8 50.7 L970.7 52.8 L976.6 54.9 L982.5 57.0 L988.4 59.2 L994.3 61.3 L1000.2 63.4 L1006.1 65.5 L1012.0 67.7 L1017.8 69.8 L1023.7 71.9 L1029.5 74.1 L1035.3 76.2 L1041.1 78.3 L1046.9 80.5 L1052.6 82.6 L1058.4 84.7 L1064.1 86.9 L1069.8 89.0 L1075.5 91.1 L1081.1 93.3 L1086.8 95.4 L1092.4 97.5 L1098.0 99.7 L1103.6 101.8 L1109.1 104.0 L1114.6 106.1 L1120.1 108.2 L1125.5 110.4 L1131.0 112.5 L1136.4 114.6 L1141.7 116.8 L1147.1 118.9 L1152.4 121.0 L1157.7 123.2 L1162.9 125.3 L1168.1 127.5 L1173.3 129.6 L1178.4 131.7 L1183.5 133.9 L1188.6 136.0 L1193.6 138.1 L1198.6 140.3 L1203.5 142.4 L1208.4 144.6 L1213.3 146.7M1404.2 419.0 L1407.3 416.9 L1410.3 414.8 L1413.2 412.7 L1416.1 410.5 L1418.9 408.4 L1421.6 406.3 L1424.3 404.2 L1426.9 402.0 L1429.4 399.9 L1431.9 397.8 L1434.3 395.6 L1436.6 393.5 L1438.9 391.4 L1441.1 389.3 L1443.2 387.1 L1445.2 385.0 L1447.2 382.9 L1449.1 380.8 L1450.9 378.6 L1452.7 376.5 L1454.4 374.4 L1456.0 372.2 L1457.6 370.1 L1459.0 368.0 L1460.4 365.9 L1461.8 363.7 L1463.0 361.6 L1464.2 359.5 L1465.3 357.3 L1466.4 355.2 L1467.4 353.1 L1468.2 350.9 L1469.1 348.8 L1469.8 346.7 L1470.5 344.6 L1471.1 342.4 L1471.6 340.3 L1472.1 338.2 L1472.4 336.0 L1472.7 333.9 L1473.0 331.8 L1473.1 329.7 L1473.2 327.5 L1473.2 325.4 L1473.1 323.3 L1473.0 321.1 L1472.8 319.0 L1472.5 316.9 L1472.1 314.8 L1471.7 312.6 L1471.2 310.5 L1470.6 308.4 L1469.9 306.2 L1469.2 304.1 L1468.4 302.0 L1467.5 299.8 L1466.6 297.7 L1465.5 295.6 L1464.4 293.5 L1463.3 291.3 L1462.0 289.2 L1460.7 287.1 L1459.3 284.9 L1457.8 282.8 L1456.3 280.7 L1454.7 278.6 L1453.0 276.4 L1451.3 274.3 L1449.4 272.2 L1447.5 270.0 L1445.6 267.9 L1443.5 265.8 L1441.4 263.7 L1439.2 261.5 L1437.0 259.4 L1434.7 257.3 L1432.3 255.1 L1429.8 253.0 L1427.3 250.9 L1424.7 248.8 L1422.1 246.6 L1419.4 244.5 L1416.6 242.4 L1413.7 240.2 L1410.8 238.1 L1407.8 236.0 L1404.7 233.9 L1401.6 231.7 L1398.4 229.6 L1395.2 227.5 L1391.9 225.4 L1388.5 223.2 L1385.1 221.1 L1381.6 219.0 L1378.0 216.9 L1374.4 214.7 L1370.7 212.6 L1366.9 210.5 L1363.1 208.4 L1359.3 206.2 L1355.3 204.1 L1351.4 202.0 L1347.3 199.9 L1343.2 197.7 L1339.1 195.6 L1334.9 193.5 L1330.6 191.4 L1326.3 189.2 L1321.9 187.1 L1317.5 185.0 L1313.0 182.9 L1308.5 180.8 L1303.9 178.6 L1299.3 176.5 L1294.6 174.4 L1289.8 172.3 L1285.1 170.2 L1280.2 168.0 L1275.3 165.9 L1270.4 163.8 L1265.5 161.7 L1260.4 159.6 L1255.4 157.5 L1250.3 155.3 L1245.1 153.2 L1239.9 151.1 L1234.7 149.0 L1229.4 146.9 L1224.1 144.8 L1218.8 142.7 L1213.4 140.6 L1207.9 138.5 L1202.5 136.3 L1197.0 134.2 L1191.5 132.1 L1185.9 130.0 L1180.3 127.9 L1174.7 125.8 L1169.0 123.7 L1163.3 121.6 L1157.6 119.5 L1151.8 117.4 L1146.1 115.3 L1140.3 113.3 L1134.4 111.2 L1128.6 109.1 L1122.7 107.0 L1116.9 104.9 L1110.9 102.8 L1105.0 100.8 L1099.1 98.7 L1093.1 96.6 L1087.2 94.6 L1081.2 92.5 L1075.2 90.5 L1069.2 88.4 L1063.3 86.4 L1057.3 84.4 L1051.3 82.3 L1045.3 80.3 L1039.3 78.3 L1033.4 76.3 L1027.4 74.3 L1021.5 72.4 L1015.6 70.4 L1009.8 68.5 L1004.0 66.6 L998.2 64.7 L992.5 62.8 L986.9 61.0 L981.3 59.2 L975.9 57.5 L970.5 55.8 L965.4 54.2 L960.3 52.6 L955.5 51.1 L950.9 49.8 L946.6 48.5 L942.6 47.5 L938.9 46.5 L935.6 45.8 L932.7 45.3 L930.2 45.1 L928.1 45.1 L926.3 45.4 L924.8 45.9 L923.6 46.6 L922.6 47.5 L921.8 48.6 L921.1 49.8 L920.6 51.2 L920.1 52.6 L919.6 54.2 L919.3 55.8 L918.9 57.5 L918.6 59.3 L918.3 61.1 L918.0 62.9 L917.7 64.7 L917.4 66.6 L917.2 68.5 L916.9 70.5 L916.7 72.4 L916.4 74.4 L916.2 76.4 L915.9 78.4 L915.7 80.4 L915.5 82.4 L915.2 84.4 L915.0 86.4 L914.7 88.5 L914.5 90.5 L914.3 92.6 L914.0 94.6 L913.8 96.7 L913.5 98.8 L913.3 100.8 L913.1 102.9 L912.8 105.0 L912.6 107.1 L912.3 109.1 L912.1 111.2 L911.8 113.3 L911.6 115.4 L911.3 117.5 L911.1 119.6 L910.8 121.7 L910.6 123.8 L910.3 125.9 L910.1 128.0 L909.8 130.1 L909.6 132.2 L909.3 134.3 L909.1 136.4 L908.8 138.5M512.6 413.9 L511.3 411.9 L510.0 410.0 L508.7 408.0 L507.5 406.0 L506.3 404.1 L505.2 402.1 L504.1 400.1 L503.0 398.2 L502.0 396.2 L501.0 394.2 L500.1 392.2 L499.2 390.3 L498.4 388.3 L497.6 386.3 L496.8 384.3 L496.1 382.4 L495.5 380.4 L494.9 378.4 L494.3 376.4 L493.8 374.4 L493.3 372.4 L492.9 370.4 L492.5 368.5 L492.1 366.5 L491.8 364.5 L491.6 362.5 L491.4 360.5 L491.2 358.5 L491.1 356.5 L491.1 354.5 L491.0 352.5 L491.1 350.5 L491.2 348.5 L491.3 346.5 L491.5 344.5 L491.7 342.5 L491.9 340.5 L492.2 338.5 L492.6 336.5 L493.0 334.5 L493.5 332.5 L494.0 330.5 L494.5 328.5 L495.1 326.5 L495.7 324.5 L496.4 322.5 L497.2 320.5 L497.9 318.5 L498.8 316.5 L499.6 314.6 L500.6 312.6 L501.5 310.6 L502.5 308.6 L503.6 306.6 L504.7 304.6 L505.8 302.6 L507.0 300.6 L508.3 298.6 L509.5 296.6 L510.9 294.6 L512.2 292.6 L513.7 290.6 L515.1 288.6 L516.6 286.6 L518.2 284.6 L519.8 282.6 L521.4 280.6 L523.1 278.6 L524.8 276.6 L526.6 274.6 L528.4 272.6 L530.2 270.7 L532.1 268.7 L534.0 266.7 L536.0 264.7 L538.0 262.7 L540.1 260.7 L542.2 258.7 L544.3 256.8 L546.5 254.8 L548.7 252.8 L550.9 250.8 L553.2 248.8 L555.5 246.9 L557.9 244.9 L560.3 242.9 L562.7 241.0 L565.2 239.0 L567.7 237.0 L570.3 235.1 L572.8 233.1 L575.5 231.1 L578.1 229.2 L580.8 227.2 L583.5 225.3 L586.2 223.3 L589.0 221.4 L591.8 219.4 L594.7 217.5 L597.6 215.5 L600.5 213.6 L603.4 211.6 L606.4 209.7 L609.4 207.8 L612.4 205.9 L615.4 203.9 L618.5 202.0 L621.6 200.1 L624.7 198.2 L627.9 196.3 L631.0 194.4 L634.2 192.5 L637.5 190.6 L640.7 188.7 L644.0 186.8 L647.2 184.9 L650.5 183.0 L653.9 181.1 L657.2 179.3 L660.6 177.4 L663.9 175.6 L667.3 173.7 L670.7 171.9 L674.2 170.0 L677.6 168.2 L681.1 166.4 L684.5 164.5 L688.0 162.7 L691.5 160.9 L695.0 159.1 L698.4 157.3 L702.0 155.6 L705.5 153.8 L709.0 152.0 L712.5 150.3 L716.0 148.6 L719.5 146.8 L723.1 145.1 L726.6 143.4 L730.1 141.7 L733.6 140.1 L737.1 138.4 L740.6 136.7 L744.1 135.1 L747.6 133.5 L751.1 131.9 L754.6 130.3 L758.0 128.7 L761.5 127.2 L764.9 125.7 L768.3 124.2 L771.7 122.7 L775.1 121.2 L778.4 119.8 L781.7 118.4 L785.0 117.0 L788.3 115.6 L791.5 114.3 L794.7 113.0 L797.9 111.8 L801.1 110.5 L804.2 109.3 L807.3 108.2 L810.3 107.0 L813.3 106.0 L816.3 104.9 L819.2 103.9 L822.1 103.0 L824.9 102.0 L827.7 101.2 L830.4 100.4 L833.1 99.6 L835.7 98.9 L838.4 98.2 L840.9 97.7 L843.4 97.1 L845.9 96.6 L848.3 96.2 L850.7 95.8 L853.0 95.5 L855.3 95.3 L857.5 95.1 L859.7 95.0 L861.9 95.0 L864.0 95.0 L866.1 95.1 L868.1 95.2 L870.2 95.4 L872.2 95.7 L874.1 96.0 L876.1 96.4 L878.0 96.9 L879.9 97.4 L881.8 98.0 L883.7 98.6 L885.6 99.3 L887.4 100.0 L889.3 100.8 L891.1 101.7 L892.9 102.6 L894.7 103.5 L896.6 104.5 L898.4 105.5 L900.2 106.6 L902.0 107.7 L903.8 108.8 L905.6 110.0 L907.5 111.2 L909.3 112.5 L911.1 113.8 L912.9 115.1 L914.7 116.4 L916.6 117.8 L918.4 119.2 L920.2 120.6 L922.1 122.1 L923.9 123.5 L925.7 125.0 L927.6 126.5 L929.4 128.1 L931.3 129.6 L933.1 131.2 L935.0 132.8M436.2 426.5 L432.4 424.4 L428.6 422.4 L424.9 420.3 L421.3 418.2 L417.7 416.1 L414.2 414.1 L410.7 412.0 L407.3 409.9 L404.0 407.8 L400.7 405.7 L397.5 403.7 L394.3 401.6 L391.2 399.5 L388.2 397.4 L385.2 395.3 L382.3 393.3 L379.5 391.2 L376.7 389.1 L374.0 387.0 L371.3 384.9 L368.8 382.8 L366.3 380.8 L363.8 378.7 L361.4 376.6 L359.1 374.5 L356.9 372.4 L354.7 370.3 L352.6 368.2 L350.5 366.1 L348.6 364.1 L346.7 362.0 L344.8 359.9 L343.0 357.8 L341.4 355.7 L339.7 353.6 L338.2 351.5 L336.7 349.4 L335.3 347.3 L333.9 345.2 L332.7 343.2 L331.5 341.1 L330.3 339.0 L329.3 336.9 L328.3 334.8 L327.4 332.7 L326.5 330.6 L325.8 328.5 L325.1 326.4 L324.4 324.3 L323.9 322.2 L323.4 320.2 L323.0 318.1 L322.7 316.0 L322.4 313.9 L322.2 311.8 L322.1 309.7 L322.1 307.6 L322.1 305.5 L322.2 303.4 L322.4 301.3 L322.6 299.2 L322.9 297.1 L323.3 295.1 L323.8 293.0 L324.3 290.9 L324.9 288.8M1478.2 286.7 L1476.5 284.6 L1474.8 282.5 L1472.9 280.4 L1471.1 278.3 L1469.1 276.3 L1467.1 274.2 L1465.0 272.1 L1462.8 270.0 L1460.6 267.9 L1458.3 265.8 L1455.9 263.7 L1453.5 261.6 L1451.0 259.6 L1448.4 257.5 L1445.7 255.4 L1443.0 253.3 L1440.2 251.2 L1437.4 249.1 L1434.5 247.0 L1431.5 245.0 L1428.5 242.9 L1425.4 240.8 L1422.2 238.7 L1419.0 236.6 L1415.7 234.6 L1412.3 232.5 L1408.9 230.4 L1405.4 228.3 L1401.8 226.2 L1398.2 224.2 L1394.6 222.1 L1390.8 220.0 L1387.1 217.9 L1383.2 215.9 L1379.3 213.8 L1375.4 211.7 L1371.3 209.7 L1367.3 207.6 L1363.1 205.5 L1359.0 203.5 L1354.7 201.4 L1350.4 199.3 L1346.1 197.3 L1341.7 195.2 L1337.3 193.1 L1332.8 191.1 L1328.2 189.0 L1323.6 187.0 L1319.0 184.9 L1314.3 182.9 L1309.6 180.8 L1304.8 178.8 L1300.0 176.7 L1295.1 174.7 L1290.2 172.6 L1285.3 170.6 L1280.3 168.6 L1275.3 166.5 L1270.2 164.5 L1265.1 162.5 L1259.9 160.4 L1254.8 158.4 L1249.6 156.4 L1244.3 154.4 L1239.0 152.4 L1233.7 150.3 L1228.4 148.3 L1223.0 146.3 L1217.6 144.3 L1212.2 142.3 L1206.8 140.4 L1201.3 138.4 L1195.8 136.4 L1190.3 134.4 L1184.8 132.4 L1179.2 130.5 L1173.6 128.5 L1168.1 126.6 L1162.5 124.6 L1156.9 122.7 L1151.3 120.8 L1145.7 118.8 L1140.1 116.9 L1134.5 115.0 L1128.8 113.1 L1123.2 111.3 L1117.6 109.4 L1112.0 107.5 L1106.5 105.7 L1100.9 103.9 L1095.3 102.1 L1089.8 100.3 L1084.3 98.5 L1078.9 96.7 L1073.4 95.0 L1068.0 93.3 L1062.7 91.6 L1057.4 89.9 L1052.2 88.3 L1047.0 86.7 L1041.9 85.1 L1036.8 83.6 L1031.9 82.1 L1027.0 80.7 L1022.2 79.2 L1017.6 77.9 L1013.0 76.6 L1008.6 75.3 L1004.3 74.2 L1000.1 73.0 L996.1 72.0 L992.2 71.0 L988.5 70.2 L985.0 69.4 L981.7 68.7 L978.5 68.1 L975.5 67.6 L972.7 67.2 L970.1 66.9 L967.7 66.7 L965.5 66.7 L963.4 66.7 L961.6 66.9 L959.9 67.2 L958.3 67.5 L956.9 68.0 L955.6 68.6 L954.4 69.3 L953.4 70.1 L952.4 71.0 L951.6 72.0 L950.8 73.0 L950.1 74.1 L949.5 75.3 L948.9 76.5 L948.4 77.8 L947.9 79.2 L947.5 80.6 L947.1 82.0 L946.7 83.5 L946.3 85.1 L946.0 86.6 L945.7 88.2 L945.4 89.9 L945.2 91.5 L944.9 93.2 L944.7 94.9 L944.4 96.7 L944.2 98.4 L944.0 100.2 L943.8 102.0 L943.6 103.8 L943.4 105.6 L943.2 107.5 L943.0 109.3 L942.8 111.2 L942.6 113.1 L942.4 115.0 L942.2 116.9 L942.0 118.8 L941.8 120.7 L941.6 122.6 L941.4 124.5 L941.2 126.5 L941.0 128.4 L940.8 130.4 L940.6 132.4 L940.4 134.3 L940.2 136.3 L940.0 138.3 L939.8 140.3 L939.6 142.3 L939.4 144.2 L939.2 146.2 L938.9 148.2 L938.7 150.3 L938.5 152.3 L938.2 154.3 L938.0 156.3M508.5 429.6 L506.1 427.5 L503.7 425.4 L501.4 423.3 L499.2 421.2 L496.9 419.1 L494.8 417.1 L492.7 415.0 L490.6 412.9 L488.6 410.8 L486.7 408.7 L484.8 406.6 L482.9 404.5 L481.1 402.4 L479.4 400.3 L477.7 398.2 L476.1 396.1 L474.5 394.1 L473.0 392.0 L471.5 389.9 L470.1 387.8 L468.7 385.7 L467.4 383.6 L466.1 381.5 L464.9 379.4 L463.8 377.3 L462.7 375.2 L461.6 373.1 L460.6 371.0 L459.7 368.9 L458.8 366.8 L458.0 364.7 L457.2 362.6 L456.5 360.5 L455.9 358.4 L455.3 356.3 L454.8 354.2 L454.3 352.1 L453.9 350.0 L453.5 347.9 L453.2 345.8 L452.9 343.7 L452.7 341.6 L452.6 339.5 L452.5 337.4 L452.5 335.3 L452.5 333.2 L452.6 331.1 L452.7 329.0 L452.9 326.9 L453.2 324.8 L453.5 322.7 L453.9 320.6 L454.3 318.5 L454.8 316.4 L455.3 314.3 L455.9 312.2 L456.6 310.1 L457.3 308.0 L458.0 305.9 L458.9 303.8 L459.7 301.7 L460.7 299.6 L461.7 297.5 L462.7 295.4 L463.8 293.3 L465.0 291.2 L466.2 289.1 L467.4 287.0 L468.8 284.9 L470.1 282.8 L471.6 280.7 L473.1 278.6 L474.6 276.5 L476.2 274.4 L477.8 272.3 L479.5 270.2 L481.3 268.1 L483.1 266.0 L485.0 263.9 L486.9 261.8 L488.8 259.7 L490.8 257.6 L492.9 255.6 L495.0 253.5 L497.2 251.4 L499.4 249.3 L501.7 247.2 L504.0 245.1 L506.4 243.0 L508.8 240.9 L511.3 238.8 L513.8 236.7 L516.3 234.6 L519.0 232.5 L521.6 230.4 L524.3 228.3 L527.1 226.3 L529.9 224.2 L532.7 222.1 L535.6 220.0 L538.5 217.9 L541.5 215.8 L544.6 213.7 L547.6 211.7 L550.7 209.6 L553.9 207.5 L557.1 205.4 L560.3 203.3 L563.6 201.3 L566.9 199.2 L570.3 197.1 L573.7 195.0 L577.1 192.9 L580.6 190.9 L584.1 188.8 L587.6 186.7 L591.2 184.7 L594.9 182.6 L598.5 180.5 L602.2 178.5 L605.9 176.4 L609.7 174.3 L613.5 172.3 L617.3 170.2 L621.2 168.2 L625.1 166.1 L629.0 164.0 L632.9 162.0 L636.9 159.9 L640.9 157.9 L645.0 155.9 L649.0 153.8 L653.1 151.8 L657.2 149.7 L661.3 147.7 L665.5 145.7 L669.7 143.7 L673.9 141.6 L678.1 139.6 L682.3 137.6 L686.6 135.6 L690.9 133.6 L695.1 131.6 L699.5 129.6 L703.8 127.6 L708.1 125.6 L712.4 123.6 L716.8 121.7 L721.2 119.7 L725.5 117.7 L729.9 115.8 L734.3 113.9 L738.7 111.9 L743.0 110.0 L747.4 108.1 L751.8 106.2 L756.2 104.3 L760.5 102.4 L764.9 100.5 L769.2 98.7 L773.5 96.9 L777.9 95.0 L782.1 93.2 L786.4 91.5 L790.6 89.7 L794.9 88.0 L799.0 86.2 L803.2 84.6 L807.3 82.9 L811.3 81.3 L815.3 79.7 L819.2 78.2 L823.1 76.7 L826.9 75.2 L830.7 73.8 L834.3 72.5 L837.9 71.2 L841.4 70.0 L844.7 68.8 L848.0 67.7 L851.2 66.8 L854.2 65.9 L857.2 65.1 L860.0 64.4 L862.6 63.8 L865.2 63.4 L867.7 63.0 L870.0 62.8 L872.2 62.7 L874.3 62.7 L876.3 62.9 L878.2 63.2 L880.1 63.6 L881.9 64.1 L883.6 64.7 L885.2 65.5 L886.8 66.3 L888.4 67.3 L890.0 68.3 L891.5 69.4 L893.0 70.6 L894.5 71.8 L896.0 73.1 L897.5 74.5 L898.9 76.0 L900.4 77.4 L901.9 79.0 L903.3 80.5 L904.8 82.1 L906.3 83.8 L907.8 85.4 L909.2 87.1 L910.7 88.8 L912.2 90.6 L913.7 92.4 L915.1 94.2 L916.6 96.0 L918.1 97.8 L919.6 99.6 L921.1 101.5 L922.6 103.4 L924.1 105.3 L925.6 107.2 L927.1 109.1 L928.6 111.0 L930.1 112.9 L931.5 114.9 L933.0 116.8 L934.5 118.8 L936.0 120.7 L937.5 122.7 L939.0 124.7 L940.5 126.6 L942.0 128.6 L943.5 130.6 L944.9 132.6 L946.4 134.6 L947.9 136.6 L949.4 138.6 L950.8 140.7 L952.3 142.7 L953.7 144.7 L955.2 146.7 L956.6 148.8 L958.1 150.8 L959.5 152.8 L960.9 154.9 L962.4 156.9 L963.8 159.0 L965.2 161.0M457.6 429.8 L453.6 428.0 L449.7 426.2 L445.8 424.4 L441.9 422.5 L438.1 420.7 L434.3 418.9 L430.5 417.0 L426.8 415.2 L423.1 413.3 L419.5 411.5 L415.9 409.6 L412.3 407.8 L408.8 405.9 L405.4 404.1 L402.0 402.2 L398.6 400.3 L395.3 398.5 L392.0 396.6 L388.8 394.7 L385.6 392.8 L382.5 390.9 L379.5 389.1 L376.4 387.2 L373.5 385.3 L370.6 383.4 L367.7 381.5 L364.9 379.6 L362.1 377.7 L359.4 375.8 L356.8 373.9 L354.2 372.0 L351.6 370.1 L349.2 368.2 L346.7 366.3 L344.4 364.4 L342.1 362.5 L339.8 360.6 L337.6 358.7 L335.5 356.8 L333.4 354.9 L331.4 352.9 L329.4 351.0 L327.5 349.1 L325.7 347.2 L323.9 345.3 L322.2 343.4 L320.5 341.5M1484.3 339.5 L1483.9 337.6 L1483.5 335.7 L1483.0 333.8 L1482.4 331.9 L1481.8 330.0 L1481.2 328.0 L1480.4 326.1 L1479.6 324.2 L1478.8 322.3 L1477.9 320.4 L1476.9 318.4 L1475.9 316.5 L1474.8 314.6 L1473.6 312.7 L1472.4 310.8 L1471.1 308.8 L1469.8 306.9 L1468.4 305.0 L1466.9 303.1 L1465.4 301.2 L1463.9 299.3 L1462.2 297.3 L1460.5 295.4 L1458.8 293.5 L1457.0 291.6 L1455.1 289.7 L1453.2 287.8 L1451.2 285.9 L1449.2 283.9 L1447.1 282.0 L1444.9 280.1 L1442.7 278.2 L1440.5 276.3 L1438.1 274.4 L1435.8 272.5 L1433.3 270.6 L1430.9 268.7 L1428.3 266.8 L1425.7 264.9 L1423.1 263.0 L1420.4 261.1 L1417.7 259.2 L1414.9 257.3 L1412.0 255.4 L1409.1 253.5 L1406.2 251.7 L1403.2 249.8 L1400.1 247.9 L1397.0 246.0 L1393.9 244.1 L1390.7 242.3 L1387.5 240.4 L1384.2 238.5 L1380.9 236.7 L1377.5 234.8 L1374.1 232.9 L1370.7 231.1 L1367.2 229.2 L1363.6 227.4 L1360.1 225.5 L1356.4 223.7 L1352.8 221.8 L1349.1 220.0 L1345.4 218.2 L1341.6 216.3 L1337.8 214.5 L1333.9 212.7 L1330.1 210.9 L1326.2 209.1 L1322.2 207.3 L1318.2 205.5 L1314.2 203.7 L1310.2 201.9 L1306.1 200.1 L1302.1 198.3 L1297.9 196.5 L1293.8 194.8 L1289.6 193.0 L1285.4 191.2 L1281.2 189.5 L1277.0 187.8 L1272.7 186.0 L1268.5 184.3 L1264.2 182.6 L1259.9 180.9 L1255.6 179.2 L1251.2 177.5 L1246.9 175.8 L1242.5 174.1 L1238.1 172.4 L1233.8 170.8 L1229.4 169.1 L1225.0 167.5 L1220.6 165.9 L1216.2 164.2 L1211.8 162.6 L1207.4 161.0 L1203.0 159.5 L1198.6 157.9 L1194.2 156.3 L1189.8 154.8 L1185.4 153.3 L1181.1 151.8 L1176.7 150.3 L1172.4 148.8 L1168.0 147.3 L1163.7 145.9 L1159.4 144.5 L1155.2 143.1 L1150.9 141.7 L1146.7 140.3 L1142.5 139.0 L1138.4 137.7 L1134.2 136.4 L1130.1 135.1 L1126.1 133.8 L1122.0 132.6 L1118.1 131.4 L1114.1 130.3 L1110.2 129.1 L1106.3 128.0 L1102.5 126.9 L1098.8 125.9 L1095.1 124.8 L1091.4 123.9 L1087.8 122.9 L1084.3 122.0 L1080.8 121.1 L1077.4 120.3 L1074.0 119.4 L1070.7 118.7 L1067.5 117.9 L1064.3 117.3 L1061.2 116.6 L1058.2 116.0 L1055.2 115.5 L1052.4 114.9 L1049.5 114.5 L1046.8 114.1 L1044.1 113.7 L1041.5 113.4 L1039.0 113.1 L1036.5 112.9 L1034.1 112.7 L1031.8 112.5 L1029.6 112.5 L1027.4 112.4 L1025.3 112.5 L1023.2 112.5 L1021.3 112.6 L1019.4 112.8 L1017.5 113.0 L1015.7 113.3 L1014.0 113.6 L1012.3 114.0 L1010.7 114.4 L1009.1 114.8 L1007.6 115.3 L1006.1 115.9 L1004.7 116.5 L1003.3 117.1 L1002.0 117.8 L1000.7 118.5 L999.4 119.3 L998.2 120.0 L997.0 120.9 L995.9 121.8 L994.7 122.7 L993.7 123.6 L992.6 124.6 L991.5 125.6 L990.5 126.7 L989.5 127.7 L988.6 128.8 L987.6 130.0 L986.7 131.1 L985.7 132.3 L984.8 133.5 L983.9 134.8 L983.1 136.1 L982.2 137.3 L981.3 138.7 L980.5 140.0M482.1 425.0 L481.1 423.3 L480.1 421.6 L479.2 419.9 L478.2 418.2 L477.3 416.5 L476.5 414.8 L475.6 413.1 L474.8 411.4 L474.0 409.7 L473.3 408.0 L472.5 406.3 L471.8 404.5 L471.2 402.8 L470.5 401.1 L470.0 399.3 L469.4 397.6 L468.9 395.8 L468.4 394.1 L467.9 392.3 L467.5 390.6 L467.1 388.8 L466.8 387.0 L466.5 385.3 L466.2 383.5 L465.9 381.7 L465.7 380.0 L465.6 378.2 L465.5 376.4 L465.4 374.6 L465.3 372.8 L465.3 371.0 L465.3 369.3 L465.4 367.5 L465.5 365.7 L465.7 363.9 L465.8 362.1 L466.1 360.3 L466.3 358.5 L466.6 356.7 L467.0 354.9 L467.4 353.1 L467.8 351.3 L468.2 349.5 L468.8 347.7 L469.3 345.9 L469.9 344.0 L470.5 342.2 L471.2 340.4 L471.9 338.6 L472.6 336.8 L473.4 335.0 L474.2 333.2 L475.1 331.4 L476.0 329.5 L477.0 327.7 L477.9 325.9 L479.0 324.1 L480.0 322.3 L481.1 320.5 L482.3 318.7 L483.5 316.8 L484.7 315.0 L486.0 313.2 L487.3 311.4 L488.6 309.6 L490.0 307.8 L491.4 305.9 L492.9 304.1 L494.4 302.3 L495.9 300.5 L497.5 298.7 L499.1 296.9 L500.8 295.1 L502.5 293.3 L504.2 291.5 L505.9 289.7 L507.7 287.9 L509.6 286.0 L511.5 284.2 L513.4 282.4 L515.3 280.6 L517.3 278.8 L519.3 277.0 L521.3 275.3 L523.4 273.5 L525.5 271.7 L527.7 269.9 L529.9 268.1 L532.1 266.3 L534.3 264.5 L536.6 262.7 L538.9 261.0 L541.3 259.2 L543.6 257.4 L546.0 255.6 L548.5 253.9 L550.9 252.1 L553.4 250.4 L556.0 248.6 L558.5 246.8 L561.1 245.1 L563.7 243.3 L566.3 241.6 L569.0 239.9 L571.7 238.1 L574.4 236.4 L577.1 234.7 L579.9 232.9 L582.6 231.2 L585.5 229.5 L588.3 227.8 L591.1 226.1 L594.0 224.4 L596.9 222.7 L599.8 221.0 L602.7 219.3 L605.7 217.6 L608.7 215.9 L611.6 214.3 L614.6 212.6 L617.7 211.0 L620.7 209.3 L623.7 207.7 L626.8 206.0 L629.9 204.4 L633.0 202.8 L636.1 201.2 L639.2 199.6 L642.3 198.0 L645.5 196.4 L648.6 194.8 L651.8 193.2 L654.9 191.7 L658.1 190.1 L661.3 188.6 L664.4 187.0 L667.6 185.5 L670.8 184.0 L674.0 182.5 L677.2 181.0 L680.4 179.5 L683.6 178.1 L686.8 176.6 L689.9 175.2 L693.1 173.7 L696.3 172.3 L699.5 170.9 L702.7 169.5 L705.8 168.2 L709.0 166.8 L712.2 165.5 L715.3 164.2 L718.5 162.9 L721.6 161.6 L724.7 160.3 L727.8 159.0 L730.9 157.8 L734.0 156.6 L737.0 155.4 L740.1 154.2 L743.1 153.1 L746.1 152.0 L749.1 150.9 L752.1 149.8 L755.0 148.7 L758.0 147.7 L760.9 146.7 L763.8 145.7 L766.6 144.7 L769.5 143.8 L772.3 142.9 L775.1 142.0 L777.9 141.2 L780.6 140.4 L783.3 139.6 L786.0 138.8 L788.7 138.1 L791.3 137.4 L793.9 136.8 L796.5 136.1 L799.1 135.5 L801.6 135.0 L804.1 134.5 L806.6 134.0 L809.0 133.5 L811.4 133.1 L813.8 132.7 L816.2 132.4 L818.5 132.1 L820.8 131.9 L823.1 131.6 L825.3 131.4 L827.5 131.3 L829.7 131.2 L831.9 131.1 L834.1 131.1 L836.2 131.1 L838.3 131.2 L840.4 131.3 L842.4 131.4 L844.5 131.6 L846.5 131.8 L848.5 132.0 L850.5 132.3 L852.5 132.6 L854.4 133.0 L856.4 133.4 L858.3 133.8 L860.2 134.3 L862.1 134.8 L864.0 135.3 L865.9 135.9 L867.8 136.5 L869.6 137.2 L871.5 137.8 L873.3 138.6 L875.2 139.3 L877.0 140.1 L878.9 140.9 L880.7 141.7 L882.5 142.6 L884.3 143.5 L886.1 144.4 L887.9 145.3 L889.7 146.3 L891.5 147.3 L893.3 148.3 L895.1 149.4 L897.0 150.5 L898.8 151.6 L900.6 152.7 L902.4 153.8 L904.2 155.0 L906.0 156.2 L907.8 157.4 L909.6 158.6 L911.4 159.8 L913.2 161.1 L915.0 162.4 L916.8 163.7 L918.6 165.0 L920.4 166.3 L922.2 167.7 L924.0 169.0 L925.8 170.4 L927.6 171.8 L929.4 173.2 L931.2 174.6 L933.0 176.1 L934.8 177.5 L936.6 179.0 L938.5 180.5 L940.3 181.9 L942.1 183.4 L943.9 185.0 L945.7 186.5 L947.5 188.0M1419.9 390.7 L1422.9 388.8 L1425.8 386.8 L1428.7 384.9 L1431.6 382.9 L1434.4 381.0 L1437.1 379.1 L1439.8 377.1 L1442.4 375.2 L1445.0 373.2 L1447.5 371.3 L1449.9 369.3 L1452.3 367.4 L1454.6 365.4 L1456.9 363.5 L1459.1 361.5 L1461.2 359.6 L1463.3 357.6 L1465.3 355.7 L1467.3 353.7 L1469.2 351.8 L1471.1 349.8 L1472.8 347.8 L1474.5 345.9 L1476.2 343.9 L1477.8 342.0 L1479.3 340.0 L1480.8 338.0 L1482.2 336.1 L1483.5 334.1 L1484.8 332.2 L1486.0 330.2 L1487.1 328.2M317.3 326.3 L318.0 324.3 L318.7 322.3 L319.5 320.4 L320.4 318.4 L321.4 316.5 L322.4 314.5 L323.5 312.5 L324.6 310.6 L325.8 308.6 L327.1 306.6 L328.4 304.7 L329.8 302.7 L331.2 300.8 L332.8 298.8 L334.3 296.8 L336.0 294.9 L337.7 292.9 L339.4 291.0 L341.3 289.0 L343.2 287.1 L345.1 285.1 L347.1 283.1 L349.2 281.2 L351.3 279.2 L353.5 277.3 L355.8 275.3 L358.1 273.4 L360.4 271.4 L362.9 269.5 L365.4 267.5 L367.9 265.6 L370.5 263.6 L373.1 261.7 L375.9 259.8 L378.6 257.8 L381.4 255.9 L384.3 253.9 L387.3 252.0 L390.2 250.1 L393.3 248.1 L396.4 246.2 L399.5 244.3 L402.7 242.3 L405.9 240.4 L409.2 238.5 L412.6 236.6 L416.0 234.7 L419.4 232.7 L422.9 230.8 L426.4 228.9 L430.0 227.0 L433.6 225.1 L437.3 223.2 L441.0 221.3 L444.7 219.4 L448.5 217.5 L452.4 215.6 L456.3 213.7 L460.2 211.9 L464.1 210.0 L468.1 208.1 L472.2 206.2 L476.3 204.4 L480.4 202.5 L484.5 200.6 L488.7 198.8 L492.9 196.9 L497.1 195.1 L501.4 193.3 L505.7 191.4 L510.0 189.6 L514.4 187.8 L518.8 185.9 L523.2 184.1 L527.6 182.3 L532.1 180.5 L536.6 178.7 L541.1 177.0 L545.6 175.2 L550.1 173.4 L554.7 171.6 L559.2 169.9 L563.8 168.1 L568.4 166.4 L573.0 164.7 L577.6 163.0 L582.3 161.2 L586.9 159.5 L591.5 157.9 L596.2 156.2 L600.8 154.5 L605.5 152.9 L610.1 151.2 L614.7 149.6 L619.4 148.0 L624.0 146.4 L628.6 144.8 L633.2 143.2 L637.8 141.7 L642.4 140.1 L646.9 138.6 L651.5 137.1 L656.0 135.6 L660.5 134.2 L664.9 132.7 L669.4 131.3 L673.8 129.9 L678.1 128.5 L682.5 127.2 L686.8 125.8 L691.0 124.5 L695.3 123.3 L699.4 122.0 L703.5 120.8 L707.6 119.6 L711.6 118.5 L715.6 117.3 L719.5 116.2 L723.3 115.2 L727.1 114.2 L730.8 113.2 L734.5 112.3 L738.0 111.4 L741.5 110.5 L745.0 109.7 L748.3 108.9 L751.6 108.2 L754.8 107.5 L757.9 106.9 L760.9 106.3 L763.9 105.8 L766.7 105.3 L769.5 104.9 L772.2 104.5 L774.8 104.2 L777.3 104.0 L779.8 103.8 L782.1 103.6 L784.4 103.5 L786.6 103.5 L788.7 103.5 L790.7 103.6 L792.6 103.7 L794.5 103.9 L796.3 104.1 L798.1 104.4 L799.7 104.8 L801.3 105.2 L802.8 105.7 L804.3 106.2 L805.7 106.7 L807.1 107.4 L808.4 108.0 L809.7 108.7 L810.9 109.5 L812.0 110.3 L813.1 111.1 L814.2 112.0 L815.3 112.9 L816.3 113.9 L817.2 114.9 L818.2 116.0 L819.1 117.0 L820.0 118.1 L820.9 119.3 L821.7 120.5 L822.5 121.7 L823.3 122.9 L824.1 124.2 L824.9 125.5 L825.6 126.8 L826.4 128.2 L827.1 129.5 L827.8 130.9 L828.5 132.3 L829.2 133.8 L829.9 135.2 L830.6 136.7 L831.2 138.2 L831.9 139.7 L832.6 141.3 L833.2 142.8 L833.9 144.4 L834.5 146.0 L835.2 147.6 L835.8 149.2 L836.5 150.8 L837.1 152.4 L837.8 154.1 L838.4 155.7 L839.1 157.4 L839.7 159.1 L840.4 160.8 L841.0 162.5 L841.7 164.2 L842.3 165.9 L843.0 167.7 L843.6 169.4 L844.3 171.2 L844.9 172.9 L845.6 174.7 L846.3 176.5 L846.9 178.3 L847.6 180.1 L848.3 181.8 L849.0 183.7 L849.6 185.5 L850.3 187.3 L851.0 189.1 L851.7 190.9 L852.4 192.8 L853.1 194.6 L853.8 196.4 L854.5 198.3 L855.2 200.1 L855.9 202.0 L856.7 203.9 L857.4 205.7 L858.1 207.6 L858.8 209.5 L859.6 211.4 L860.3 213.2 L861.1 215.1 L861.8 217.0 L862.5 218.9 L863.3 220.8M489.6 355.4 L489.1 353.3 L488.8 351.2 L488.4 349.2 L488.2 347.1 L488.0 345.0 L487.8 342.9 L487.7 340.8 L487.6 338.7 L487.6 336.6 L487.7 334.5 L487.8 332.4 L487.9 330.3 L488.1 328.2 L488.4 326.1 L488.7 324.0 L489.1 321.9 L489.5 319.8 L489.9 317.7 L490.4 315.6 L491.0 313.5 L491.6 311.4 L492.3 309.3 L493.0 307.2 L493.8 305.1 L494.6 303.0 L495.5 300.9 L496.4 298.8 L497.4 296.7 L498.4 294.6 L499.5 292.5 L500.7 290.4 L501.8 288.4 L503.1 286.3 L504.4 284.2 L505.7 282.1 L507.1 280.0 L508.5 277.9 L510.0 275.8 L511.5 273.7 L513.1 271.6 L514.7 269.5 L516.4 267.4 L518.1 265.3 L519.9 263.2 L521.7 261.1 L523.6 259.0 L525.5 256.9 L527.5 254.9 L529.5 252.8 L531.5 250.7 L533.6 248.6 L535.8 246.5 L538.0 244.4 L540.2 242.3 L542.5 240.2 L544.8 238.1 L547.2 236.1 L549.6 234.0 L552.1 231.9 L554.6 229.8 L557.1 227.7 L559.7 225.6 L562.3 223.5 L565.0 221.5 L567.7 219.4 L570.5 217.3 L573.3 215.2 L576.1 213.1 L579.0 211.1 L581.9 209.0 L584.8 206.9 L587.8 204.8 L590.9 202.8 L593.9 200.7 L597.0 198.6 L600.1 196.5 L603.3 194.5 L606.5 192.4 L609.8 190.3 L613.0 188.3 L616.3 186.2 L619.7 184.1 L623.1 182.1 L626.5 180.0 L629.9 178.0 L633.4 175.9 L636.9 173.9 L640.4 171.8 L643.9 169.8 L647.5 167.7 L651.1 165.7 L654.8 163.6 L658.4 161.6 L662.1 159.5 L665.8 157.5 L669.6 155.5 L673.3 153.4 L677.1 151.4 L680.9 149.4 L684.8 147.4 L688.6 145.3 L692.5 143.3 L696.3 141.3 L700.2 139.3 L704.2 137.3 L708.1 135.3 L712.0 133.3 L716.0 131.3 L720.0 129.4 L723.9 127.4 L727.9 125.4 L731.9 123.4 L735.9 121.5 L740.0 119.5 L744.0 117.6 L748.0 115.7 L752.0 113.8 L756.1 111.8 L760.1 109.9 L764.1 108.0 L768.1 106.2 L772.1 104.3 L776.1 102.4 L780.1 100.6 L784.1 98.8 L788.1 97.0 L792.0 95.2 L795.9 93.4 L799.8 91.7 L803.7 89.9 L807.5 88.3 L811.3 86.6 L815.1 84.9 L818.9 83.3 L822.5 81.8 L826.2 80.2 L829.8 78.7 L833.3 77.3 L836.8 75.9 L840.2 74.5 L843.5 73.3 L846.7 72.0 L849.9 70.9 L853.0 69.8 L856.0 68.8 L858.9 67.9 L861.7 67.1 L864.4 66.3 L867.0 65.7 L869.6 65.2 L872.0 64.8 L874.3 64.5 L876.6 64.4 L878.7 64.3 L880.8 64.4 L882.8 64.6 L884.8 64.9 L886.7 65.3 L888.6 65.9 L890.4 66.5 L892.2 67.3 L894.0 68.1 L895.7 69.1 L897.5 70.1 L899.2 71.2M1439.1 381.5 L1440.5 379.4 L1441.9 377.3 L1443.2 375.3 L1444.4 373.2 L1445.6 371.1 L1446.7 369.1 L1447.7 367.0 L1448.7 364.9 L1449.6 362.8 L1450.4 360.8 L1451.2 358.7 L1451.9 356.6 L1452.5 354.6 L1453.1 352.5 L1453.6 350.4 L1454.0 348.3 L1454.4 346.3 L1454.7 344.2 L1454.9 342.1 L1455.0 340.1 L1455.1 338.0 L1455.1 335.9 L1455.1 333.8 L1455.0 331.8 L1454.8 329.7 L1454.5 327.6 L1454.2 325.5 L1453.8 323.5 L1453.4 321.4 L1452.9 319.3 L1452.3 317.2 L1451.6 315.2 L1450.9 313.1 L1450.1 311.0 L1449.2 308.9 L1448.3 306.9 L1447.3 304.8 L1446.2 302.7 L1445.1 300.7 L1443.9 298.6 L1442.6 296.5 L1441.3 294.4 L1439.9 292.4 L1438.4 290.3 L1436.9 288.2 L1435.3 286.1 L1433.6 284.1 L1431.9 282.0 L1430.1 279.9 L1428.3 277.9 L1426.3 275.8 L1424.4 273.7 L1422.3 271.7 L1420.2 269.6 L1418.0 267.5 L1415.8 265.4 L1413.5 263.4 L1411.1 261.3 L1408.7 259.2 L1406.2 257.2 L1403.7 255.1 L1401.1 253.0 L1398.4 251.0 L1395.7 248.9 L1392.9 246.9 L1390.0 244.8 L1387.1 242.7 L1384.2 240.7 L1381.1 238.6 L1378.1 236.6 L1374.9 234.5 L1371.7 232.4 L1368.5 230.4 L1365.2 228.3 L1361.8 226.3 L1358.4 224.2 L1354.9 222.2 L1351.4 220.1 L1347.9 218.1 L1344.2 216.0 L1340.6 214.0 L1336.8 211.9 L1333.1 209.9 L1329.2 207.8 L1325.4 205.8 L1321.5 203.8 L1317.5 201.7 L1313.5 199.7 L1309.4 197.7 L1305.3 195.6 L1301.2 193.6 L1297.0 191.6 L1292.7 189.5 L1288.4 187.5 L1284.1 185.5 L1279.8 183.5 L1275.4 181.4 L1270.9 179.4 L1266.4 177.4 L1261.9 175.4 L1257.4 173.4 L1252.8 171.4 L1248.2 169.4 L1243.5 167.4 L1238.8 165.4 L1234.1 163.4 L1229.4 161.4 L1224.6 159.4 L1219.8 157.5 L1215.0 155.5 L1210.1 153.5 L1205.2 151.5 L1200.3 149.6 L1195.4 147.6 L1190.4 145.7 L1185.5 143.7 L1180.5 141.8 L1175.5 139.9 L1170.5 137.9 L1165.4 136.0 L1160.4 134.1 L1155.3 132.2 L1150.3 130.3 L1145.2 128.4 L1140.1 126.5 L1135.0 124.7 L1130.0 122.8 L1124.9 121.0 L1119.8 119.1 L1114.8 117.3 L1109.7 115.5 L1104.6 113.7 L1099.6 111.9 L1094.6 110.2 L1089.6 108.4 L1084.6 106.7 L1079.7 105.0 L1074.7 103.3 L1069.8 101.6 L1065.0 100.0 L1060.2 98.3 L1055.4 96.7 L1050.7 95.2 L1046.0 93.6 L1041.4 92.1 L1036.8 90.7 L1032.4 89.2 L1027.9 87.8 L1023.6 86.5 L1019.4 85.2 L1015.2 83.9 L1011.1 82.7 L1007.2 81.6 L1003.3 80.5 L999.6 79.5 L996.0 78.5 L992.5 77.6 L989.1 76.8 L985.8 76.1 L982.7 75.4 L979.7 74.8 L976.9 74.4 L974.2 74.0 L971.7 73.7 L969.2 73.5 L967.0 73.4 L964.8 73.3 L962.8 73.4 L960.9 73.6 L959.1 73.9 L957.4 74.3 L955.9 74.7 L954.4 75.3 L953.0 75.9M381.2 384.6 L378.7 382.5 L376.2 380.4 L373.9 378.3 L371.5 376.3 L369.3 374.2 L367.1 372.1 L364.9 370.0 L362.9 367.9 L360.9 365.8 L359.0 363.7 L357.1 361.6 L355.3 359.5 L353.6 357.4 L351.9 355.3 L350.4 353.3 L348.9 351.2 L347.4 349.1 L346.0 347.0 L344.7 344.9 L343.5 342.8 L342.3 340.7 L341.2 338.6 L340.2 336.5 L339.3 334.4 L338.4 332.3 L337.6 330.2 L336.8 328.1 L336.2 326.0 L335.6 324.0 L335.0 321.9 L334.6 319.8 L334.2 317.7 L333.9 315.6 L333.6 313.5 L333.5 311.4 L333.4 309.3 L333.3 307.2 L333.4 305.1 L333.5 303.0 L333.7 300.9 L333.9 298.8 L334.3 296.7 L334.7 294.7 L335.1 292.6 L335.7 290.5 L336.3 288.4 L337.0 286.3 L337.7 284.2 L338.6 282.1 L339.4 280.0 L340.4 277.9 L341.5 275.8 L342.6 273.7 L343.7 271.6 L345.0 269.6 L346.3 267.5 L347.7 265.4 L349.1 263.3 L350.7 261.2 L352.3 259.1 L353.9 257.0 L355.6 254.9 L357.4 252.8 L359.3 250.8 L361.2 248.7 L363.2 246.6 L365.3 244.5 L367.4 242.4 L369.6 240.3M1432.0 238.3 L1428.7 236.2 L1425.4 234.1 L1421.9 232.0 L1418.4 229.9 L1414.9 227.8 L1411.3 225.8 L1407.6 223.7 L1403.9 221.6 L1400.1 219.5 L1396.2 217.5 L1392.3 215.4 L1388.3 213.3 L1384.3 211.2 L1380.2 209.2 L1376.0 207.1 L1371.8 205.0 L1367.5 202.9 L1363.2 200.9 L1358.8 198.8 L1354.4 196.7 L1349.9 194.7 L1345.4 192.6 L1340.8 190.6 L1336.2 188.5 L1331.5 186.4 L1326.8 184.4 L1322.0 182.3 L1317.2 180.3 L1312.3 178.2 L1307.4 176.2 L1302.4 174.1 L1297.4 172.1 L1292.3 170.0 L1287.3 168.0 L1282.1 166.0 L1277.0 163.9 L1271.7 161.9 L1266.5 159.9 L1261.2 157.8 L1255.9 155.8 L1250.5 153.8 L1245.1 151.8 L1239.7 149.7 L1234.3 147.7 L1228.8 145.7 L1223.3 143.7 L1217.7 141.7 L1212.2 139.7 L1206.6 137.7 L1201.0 135.7 L1195.4 133.8 L1189.7 131.8 L1184.0 129.8 L1178.4 127.9 L1172.7 125.9 L1167.0 124.0 L1161.2 122.0 L1155.5 120.1 L1149.8 118.2 L1144.0 116.2 L1138.3 114.3 L1132.6 112.4 L1126.8 110.5 L1121.1 108.7 L1115.4 106.8 L1109.7 105.0 L1104.0 103.1 L1098.3 101.3 L1092.7 99.5 L1087.0 97.7 L1081.5 96.0 L1075.9 94.2 L1070.4 92.5 L1064.9 90.8 L1059.5 89.1 L1054.1 87.5 L1048.8 85.9 L1043.6 84.3 L1038.4 82.7 L1033.4 81.2 L1028.4 79.8 L1023.5 78.4 L1018.8 77.0 L1014.1 75.7 L1009.6 74.4 L1005.2 73.2 L1001.0 72.1 L996.9 71.1 L992.9 70.1 L989.2 69.2 L985.6 68.4 L982.2 67.7 L979.1 67.1 L976.1 66.6 L973.3 66.3 L970.7 66.0 L968.3 65.8 L966.1 65.8 L964.1 65.9 L962.2 66.1 L960.6 66.4 L959.1 66.8 L957.7 67.3 L956.5 67.9 L955.4 68.7 L954.5 69.5 L953.6 70.4 L952.9 71.4 L952.2 72.5 L951.6 73.6 L951.1 74.8 L950.6 76.1 L950.2 77.4 L949.8 78.8M694.1 419.7 L693.5 417.7 L692.9 415.7 L692.3 413.6 L691.8 411.6 L691.2 409.6 L690.8 407.6 L690.3 405.5 L689.9 403.5 L689.4 401.5 L689.0 399.4 L688.7 397.4 L688.3 395.4 L688.0 393.3 L687.7 391.3 L687.4 389.3 L687.2 387.2 L687.0 385.2 L686.8 383.1 L686.6 381.1 L686.5 379.1 L686.4 377.0 L686.3 375.0 L686.2 372.9 L686.2 370.9 L686.2 368.8 L686.2 366.8 L686.2 364.8 L686.3 362.7 L686.4 360.7 L686.5 358.6 L686.6 356.6 L686.8 354.5 L687.0 352.5 L687.2 350.4 L687.4 348.4 L687.7 346.3 L688.0 344.3 L688.3 342.2 L688.7 340.2 L689.0 338.1 L689.4 336.1 L689.9 334.0 L690.3 332.0 L690.8 329.9 L691.3 327.9 L691.8 325.8 L692.4 323.8 L692.9 321.7 L693.6 319.7 L694.2 317.6 L694.8 315.6 L695.5 313.5 L696.2 311.5 L696.9 309.4 L697.7 307.4 L698.5 305.3 L699.3 303.3 L700.1 301.2 L700.9 299.2 L701.8 297.1 L702.7 295.1 L703.6 293.0 L704.6 291.0 L705.6 288.9 L706.6 286.9 L707.6 284.8 L708.6 282.8 L709.7 280.7 L710.8 278.7 L711.9 276.6 L713.0 274.6 L714.2 272.5 L715.3 270.5 L716.5 268.4 L717.8 266.4 L719.0 264.4 L720.3 262.3 L721.6 260.3 L722.9 258.2 L724.2 256.2 L725.5 254.2 L726.9 252.1 L728.3 250.1 L729.7 248.0 L731.2 246.0 L732.6 244.0 L734.1 241.9 L735.6 239.9 L737.1 237.9 L738.6 235.8 L740.2 233.8 L741.7 231.8 L743.3 229.8 L744.9 227.7 L746.5 225.7 L748.2 223.7 L749.8 221.7 L751.5 219.6 L753.2 217.6 L754.9 215.6 L756.6 213.6 L758.4 211.6 L760.1 209.6 L761.9 207.6 L763.7 205.6 L765.5 203.5 L767.3 201.5 L769.1 199.5 L771.0 197.5 L772.8 195.6 L774.7 193.6 L776.6 191.6 L778.5 189.6 L780.4 187.6 L782.3 185.6 L784.2 183.6 L786.2 181.7 L788.1 179.7 L790.1 177.7 L792.1 175.8 L794.1 173.8 L796.1 171.8 L798.1 169.9 L800.1 167.9 L802.1 166.0 L804.1 164.0 L806.2 162.1 L808.2 160.2 L810.3 158.3 L812.3 156.3 L814.4 154.4 L816.5 152.5 L818.5 150.6 L820.6 148.7 L822.7 146.8 L824.8 145.0 L826.9 143.1 L829.0 141.2 L831.1 139.4 L833.2 137.5 L835.3 135.7 L837.4 133.9 L839.5 132.0 L841.6 130.2 L843.7 128.4 L845.8 126.7 L847.9 124.9 L850.0 123.1 L852.1 121.4 L854.2 119.7 L856.3 118.0 L858.4 116.3 L860.4 114.6 L862.5 112.9 L864.6 111.3 L866.6 109.7 L868.7 108.1 L870.7 106.5 L872.8 105.0 L874.8 103.5 L876.8 102.0 L878.9 100.5 L880.9 99.1 L882.9 97.7 L884.9 96.4 L886.9 95.1 L888.8 93.8 L890.8 92.6 L892.8 91.4 L894.7 90.2 L896.7 89.2 L898.6 88.1 L900.6 87.2 L902.5 86.2 L904.4 85.4 L906.4 84.6 L908.3 83.9 L910.3 83.2 L912.3 82.6 L914.2 82.1 L916.2 81.7 L918.2 81.4 L920.3 81.1 L922.3 80.9 L924.4 80.8 L926.6 80.8 L928.7 80.8 L930.9 81.0 L933.2 81.2 L935.5 81.5 L937.8 81.9 L940.2 82.4 L942.6 82.9 L945.1 83.5M738.6 298.1 L739.3 296.0 L740.0 293.9 L740.7 291.8 L741.5 289.7 L742.2 287.6 L743.0 285.6 L743.8 283.5 L744.6 281.4 L745.4 279.3 L746.3 277.2 L747.2 275.1 L748.1 273.0 L749.0 270.9 L749.9 268.8 L750.9 266.7 L751.8 264.7 L752.8 262.6 L753.8 260.5 L754.8 258.4 L755.9 256.3 L757.0 254.2 L758.0 252.1 L759.1 250.0 L760.2 248.0 L761.4 245.9 L762.5 243.8 L763.7 241.7 L764.9 239.6 L766.1 237.5 L767.3 235.5 L768.5 233.4 L769.8 231.3 L771.1 229.2 L772.3 227.1 L773.6 225.1 L775.0 223.0 L776.3 220.9 L777.6 218.8 L779.0 216.7 L780.4 214.7 L781.8 212.6 L783.2 210.5 L784.6 208.4 L786.0 206.4 L787.5 204.3 L788.9 202.2 L790.4 200.2 L791.9 198.1 L793.4 196.0 L794.9 194.0 L796.4 191.9 L798.0 189.9 L799.5 187.8 L801.1 185.7 L802.6 183.7 L804.2 181.6 L805.8 179.6 L807.4 177.5 L809.0 175.5 L810.7 173.4 L812.3 171.4 L813.9 169.3 L815.6 167.3 L817.3 165.3 L818.9 163.2 L820.6 161.2 L822.3 159.2 L824.0 157.1 L825.7 155.1 L827.4 153.1 L829.1 151.1 L830.9 149.1 L832.6 147.1 L834.3 145.0 L836.1 143.0 L837.8 141.0 L839.6 139.1 L841.4 137.1 L843.1 135.1 L844.9 133.1 L846.7 131.1 L848.4 129.2 L850.2 127.2 L852.0 125.3 L853.8 123.3 L855.6 121.4 L857.4 119.4 L859.1 117.5 L860.9 115.6 L862.7 113.7 L864.5 111.8 L866.3 109.9 L868.1 108.1 L869.9 106.2 L871.6 104.4 L873.4 102.5 L875.2 100.7 L877.0 98.9 L878.7 97.1 L880.5 95.4 L882.3 93.6 L884.0 91.9 L885.8 90.2 L887.5 88.6 L889.3 87.0 L891.0 85.4 L892.7 83.8 L894.5 82.3 L896.2 80.8 L897.9 79.3 L899.6 77.9 L901.3 76.6 L903.0 75.3 L904.7 74.1 L906.4 72.9 L908.1 71.8 L909.9 70.8 L911.6 69.9 L913.4 69.0 L915.2 68.2 L917.0 67.6 L918.8 67.0 L920.7 66.6 L922.6 66.2 L924.6 66.0 L926.7 65.9 L928.9 65.9 L931.1 66.0 L933.4 66.2 L935.8 66.6 L938.2 67.0 L940.8 67.6M695.2 244.5 L697.1 242.6 L699.2 240.8 L701.2 239.0 L703.2 237.2 L705.3 235.4 L707.4 233.6 L709.5 231.8 L711.6 230.0 L713.7 228.2 L715.9 226.4 L718.0 224.6 L720.2 222.8 L722.4 221.0 L724.6 219.2 L726.8 217.5 L729.0 215.7 L731.3 213.9 L733.5 212.2 L735.8 210.4 L738.1 208.7 L740.4 206.9 L742.7 205.2 L745.0 203.5 L747.3 201.8 L749.6 200.0 L751.9 198.3 L754.3 196.6 L756.6 194.9 L759.0 193.2 L761.4 191.6 L763.7 189.9 L766.1 188.2 L768.5 186.6 L770.9 184.9 L773.3 183.3 L775.7 181.6 L778.1 180.0 L780.5 178.4 L782.9 176.8 L785.3 175.2 L787.7 173.6 L790.1 172.1 L792.5 170.5 L795.0 169.0 L797.4 167.4 L799.8 165.9 L802.2 164.4 L804.6 162.9 L807.0 161.4 L809.4 160.0 L811.8 158.5 L814.2 157.1 L816.6 155.7 L819.0 154.3 L821.4 152.9 L823.8 151.5 L826.1 150.2 L828.5 148.9 L830.9 147.6 L833.2 146.3 L835.6 145.0 L837.9 143.8 L840.2 142.6 L842.6 141.4 L844.9 140.2 L847.2 139.1 L849.5 137.9 L851.8 136.8 L854.0 135.8 L856.3 134.7 L858.6 133.7 L860.8 132.7 L863.1 131.8 L865.3 130.9 L867.5 130.0M1282.4 400.4 L1285.2 398.5 L1287.9 396.6 L1290.5 394.7 L1293.2 392.8 L1295.8 390.9 L1298.3 389.0 L1300.8 387.1 L1303.3 385.2 L1305.8 383.3 L1308.2 381.4 L1310.5 379.5 L1312.8 377.6 L1315.1 375.7 L1317.3 373.8 L1319.5 371.9 L1321.7 370.0 L1323.8 368.0 L1325.8 366.1 L1327.8 364.2 L1329.8 362.3 L1331.7 360.4 L1333.6 358.5 L1335.5 356.5 L1337.3 354.6 L1339.0 352.7 L1340.7 350.8 L1342.4 348.8 L1344.0 346.9 L1345.5 345.0 L1347.0 343.1 L1348.5 341.1 L1349.9 339.2 L1351.3 337.3 L1352.6 335.4 L1353.9 333.4 L1355.1 331.5 L1356.3 329.6 L1357.4 327.6 L1358.5 325.7 L1359.5 323.8 L1360.5 321.9 L1361.5 319.9 L1362.3 318.0 L1363.2 316.1 L1364.0 314.1 L1364.7 312.2 L1365.4 310.3 L1366.0 308.3 L1366.6 306.4 L1367.2 304.5 L1367.7 302.6 L1368.1 300.6 L1368.5 298.7 L1368.8 296.8 L1369.1 294.8 L1369.4 292.9 L1369.6 291.0 L1369.7 289.1 L1369.8 287.2 L1369.9 285.2 L1369.9 283.3 L1369.8 281.4 L1369.7 279.5 L1369.6 277.5 L1369.4 275.6 L1369.1 273.7 L1368.8 271.8 L1368.5 269.9 L1368.1 268.0 L1367.7 266.1 L1367.2 264.2 L1366.6 262.2 L1366.1 260.3 L1365.4 258.4 L1364.8 256.5 L1364.0 254.6 L1363.3 252.7 L1362.5 250.8 L1361.6 248.9 L1360.7 247.1 L1359.8 245.2 L1358.8 243.3 L1357.7 241.4 L1356.6 239.5 L1355.5 237.6 L1354.4 235.7 L1353.1 233.9 L1351.9 232.0 L1350.6 230.1 L1349.3 228.3 L1347.9 226.4 L1346.5 224.5 L1345.0 222.7 L1343.5 220.8 L1342.0 219.0 L1340.5 217.1 L1338.8 215.3 L1337.2 213.4 L1335.5 211.6 L1333.8 209.8 L1332.1 208.0 L1330.3 206.1 L1328.5 204.3 L1326.6 202.5 L1324.8 200.7 L1322.9 198.9 L1320.9 197.1 L1319.0 195.3 L1317.0 193.5 L1314.9 191.8 L1312.9 190.0 L1310.8 188.2 L1308.7 186.5 L1306.6 184.7 L1304.5 183.0 L1302.3 181.2 L1300.1 179.5 L1298.0 177.8 L1295.7 176.1 L1293.5 174.4 L1291.3 172.7 L1289.0 171.0 L1286.8 169.3 L1284.5 167.7 L1282.2 166.0 L1279.9 164.4 L1277.6 162.7 L1275.3 161.1 L1273.1 159.5 L1270.8 157.9 L1268.5 156.3 L1266.2 154.8 L1263.9 153.2 L1261.7 151.7 L1259.4 150.1 L1257.2 148.6M552.3 147.1 L557.6 145.6 L562.8 144.2 L568.0 142.7 L573.1 141.3 L578.3 139.9 L583.4 138.5 L588.4 137.2 L593.4 135.8 L598.4 134.5 L603.4 133.2 L608.3 132.0 L613.1 130.7 L617.9 129.5 L622.6 128.3 L627.3 127.2 L631.9 126.0 L636.4 124.9 L640.9 123.9 L645.3 122.8 L649.7 121.8 L653.9 120.9 L658.1 119.9 L662.2 119.0 L666.2 118.2 L670.1 117.3 L673.9 116.6 L677.6 115.8 L681.3 115.1 L684.8 114.5 L688.3 113.9 L691.6 113.3 L694.8 112.8 L698.0 112.3 L701.0 111.9 L703.9 111.5 L706.7 111.2 L709.4 110.9 L712.0 110.7 L714.5 110.5 L716.9 110.4 L719.2 110.4 L721.4 110.3 L723.4 110.4 L725.4 110.4 L727.3 110.6 L729.1 110.8 L730.7 111.0 L732.3 111.3 L733.8 111.6 L735.2 112.0 L736.5 112.4 L737.7 112.9 L738.9 113.4 L739.9 114.0 L740.9 114.6 L741.8 115.3 L742.7 116.0 L743.5 116.7 L744.2 117.5 L744.8 118.3 L745.4 119.2 L746.0 120.1 L746.4 121.1 L746.9 122.0 L747.3 123.0 L747.6 124.1 L747.9 125.2 L748.2 126.3 L748.4 127.4 L748.6 128.6 L748.8 129.8 L748.9 131.0 L749.0 132.2 L749.1 133.5 L749.1 134.8 L749.1 136.1 L749.2 137.5 L749.2 138.8 L749.1 140.2 L749.1 141.6 L749.0 143.0 L749.0 144.5 L748.9 146.0 L748.8 147.4 L748.7 148.9 L748.6 150.4 L748.5 152.0 L748.4 153.5 L748.2 155.1 L748.1 156.7 L748.0 158.2 L747.9 159.8 L747.7 161.4 L747.6 163.1 L747.5 164.7 L747.4 166.4 L747.2 168.0 L747.1 169.7 L747.0 171.4 L746.9 173.0 L746.8 174.7 L746.7 176.4 L746.6 178.2 L746.5 179.9 L746.4 181.6 L746.3 183.3 L746.3 185.1 L746.2 186.8 L746.2 188.6 L746.1 190.4 L746.1 192.1 L746.1 193.9 L746.1 195.7 L746.1 197.5 L746.1 199.3 L746.1 201.1 L746.2 202.9 L746.2 204.7 L746.3 206.5 L746.3 208.3 L746.4 210.2 L746.5 212.0" fill="none" stroke="#808080" stroke-opacity="0.45" stroke-width="1.39" stroke-dasharray="1.39 2.29"/>
<path d="M429.5 243.3 L430.8 242.3 L432.2 241.2 L433.5 240.2 L434.9 239.1 L436.3 238.1 L437.8 237.1 L439.2 236.0 L440.6 235.0 L442.1 233.9 L443.6 232.9 L445.0 231.8 L446.5 230.8 L448.1 229.8 L449.6 228.7 L451.1 227.7 L452.7 226.6 L454.3 225.6 L455.8 224.6 L457.4 223.5 L459.1 222.5 L460.7 221.4 L462.3 220.4 L464.0 219.4 L465.6 218.3 L467.3 217.3 L469.0 216.2 L470.7 215.2 L472.4 214.2 L474.2 213.1 L475.9 212.1 L477.7 211.0 L479.4 210.0 L481.2 209.0 L483.0 207.9 L484.8 206.9 L486.7 205.8 L488.5 204.8 L490.3 203.8 L492.2 202.7 L494.1 201.7 L496.0 200.7 L497.9 199.6 L499.8 198.6 L501.7 197.5 L503.6 196.5 L505.6 195.5 L507.5 194.4 L509.5 193.4 L511.5 192.4 L513.5 191.3 L515.5 190.3 L517.5 189.2 L519.5 188.2 L521.5 187.2 L523.6 186.1 L525.7 185.1 L527.7 184.1 L529.8 183.0 L531.9 182.0 L534.0 181.0 L536.1 179.9 L538.3 178.9 L540.4 177.9 L542.5 176.8 L544.7 175.8 L546.9 174.8 L549.0 173.7 L551.2 172.7 L553.4 171.7 L555.6 170.6 L557.9 169.6 L560.1 168.6 L562.3 167.6 L564.6 166.5 L566.8 165.5 L569.1 164.5 L571.4 163.4 L573.7 162.4 L576.0 161.4 L578.3 160.4 L580.6 159.3 L582.9 158.3 L585.2 157.3 L587.6 156.2 L589.9 155.2 L592.3 154.2 L594.7 153.2 L597.0 152.1 L599.4 151.1 L601.8 150.1 L604.2 149.1 L606.6 148.1 L609.0 147.0 L611.4 146.0 L613.9 145.0 L616.3 144.0 L618.8 142.9 L621.2 141.9 L623.7 140.9 L626.1 139.9 L628.6 138.9 L631.1 137.9 L633.6 136.8 L636.1 135.8 L638.6 134.8 L641.1 133.8 L643.6 132.8 L646.1 131.8 L648.6 130.8 L651.1 129.8 L653.7 128.8 L656.2 127.7 L658.7 126.7 L661.3 125.7 L663.8 124.7 L666.4 123.7 L669.0 122.7 L671.5 121.7 L674.1 120.7 L676.7 119.7 L679.2 118.7 L681.8 117.7 L684.4 116.7 L687.0 115.7 L689.6 114.7 L692.2 113.7 L694.8 112.7 L697.4 111.8 L700.0 110.8 L702.6 109.8 L705.2 108.8 L707.8 107.8 L710.4 106.8 L713.0 105.9 L715.6 104.9 L718.2 103.9 L720.8 102.9 L723.5 102.0 L726.1 101.0 L728.7 100.0 L731.3 99.1 L733.9 98.1 L736.5 97.2 L739.1 96.2 L741.7 95.2 L744.3 94.3 L746.9 93.3 L749.5 92.4 L752.1 91.5 L754.7 90.5 L757.2 89.6 L759.8 88.7 L762.4 87.7 L764.9 86.8 L767.5 85.9 L770.0 85.0 L772.6 84.1 L775.1 83.2 L777.6 82.3 L780.2 81.4 L782.7 80.5 L785.2 79.6 L787.6 78.8 L790.1 77.9 L792.6 77.1 L795.0 76.2 L797.4 75.4 L799.8 74.5 L802.2 73.7 L804.6 72.9 L807.0 72.1 L809.3 71.3 L811.6 70.5 L813.9 69.7 L816.2 69.0 L818.4 68.2 L820.7 67.5 L822.9 66.8 L825.0 66.1 L827.2 65.4 L829.3 64.7 L831.3 64.1 L833.4 63.4 L835.4 62.8 L837.3 62.2 L839.2 61.7 L841.1 61.1 L843.0 60.6 L844.8 60.1 L846.5 59.6 L848.2 59.2 L849.9 58.8 L851.5 58.4 L853.0 58.0 L854.5 57.7 L856.0 57.4 L857.4 57.2 L858.8 56.9 L860.1 56.8 L861.3 56.6 L862.5 56.5 L863.7 56.4 L864.8 56.4 L865.8 56.4 L866.8 56.4 L867.8 56.5 L868.7 56.6 L869.6 56.8 L870.4 57.0 L871.2 57.2 L872.0 57.4 L872.7 57.7 L873.4 58.1 L874.1 58.4 L874.7 58.8 L875.4 59.2 L876.0 59.7 L876.5 60.1 L877.1 60.6 L877.6 61.2 L878.1 61.7 L878.6 62.3 L879.1 62.9 L879.6 63.5 L880.1 64.1 L880.5 64.8 L881.0 65.5 L881.4 66.2 L881.8 66.9 L882.2 67.6 L882.7 68.3 L883.1 69.1 L883.5 69.8 L883.9 70.6 L884.2 71.4 L884.6 72.2 L885.0 73.0 L885.4 73.8 L885.8 74.6 L886.1 75.4 L886.5 76.3 L886.9 77.1 L887.3 78.0 L887.6 78.9 L888.0 79.7 L888.4 80.6 L888.7 81.5 L889.1 82.4 L889.4 83.3 L889.8 84.2 L890.2 85.1 L890.5 86.0 L890.9 86.9 L891.2 87.8 L891.6 88.8 L891.9 89.7 L892.3 90.6 L892.6 91.6 L893.0 92.5M431.6 245.6 L433.0 244.4 L434.4 243.1 L435.8 241.9 L437.3 240.6 L438.8 239.4 L440.3 238.1 L441.8 236.9 L443.4 235.6 L444.9 234.4 L446.5 233.1 L448.1 231.9 L449.8 230.6 L451.4 229.4 L453.1 228.2 L454.8 226.9 L456.5 225.7 L458.2 224.4 L459.9 223.2 L461.7 221.9 L463.5 220.7 L465.3 219.4 L467.1 218.2 L469.0 216.9 L470.9 215.7 L472.7 214.4 L474.6 213.2 L476.6 211.9 L478.5 210.7 L480.5 209.4 L482.5 208.2 L484.4 206.9 L486.5 205.7 L488.5 204.4 L490.6 203.2 L492.6 201.9 L494.7 200.7 L496.8 199.4 L499.0 198.2 L501.1 196.9 L503.3 195.7 L505.5 194.4 L507.6 193.2 L509.9 192.0 L512.1 190.7 L514.4 189.5 L516.6 188.2 L518.9 187.0 L521.2 185.7 L523.5 184.5 L525.9 183.2 L528.2 182.0 L530.6 180.7 L533.0 179.5 L535.4 178.2 L537.8 177.0 L540.2 175.7 L542.7 174.5 L545.2 173.2 L547.6 172.0 L550.1 170.7 L552.7 169.5 L555.2 168.2 L557.7 167.0 L560.3 165.8 L562.9 164.5 L565.5 163.3 L568.1 162.0 L570.7 160.8 L573.3 159.5 L576.0 158.3 L578.6 157.0 L581.3 155.8 L584.0 154.5 L586.7 153.3 L589.4 152.0 L592.2 150.8 L594.9 149.5 L597.7 148.3 L600.5 147.0 L603.3 145.8 L606.1 144.6 L608.9 143.3 L611.7 142.1 L614.5 140.8 L617.4 139.6 L620.3 138.3 L623.1 137.1 L626.0 135.8 L628.9 134.6 L631.8 133.3 L634.8 132.1 L637.7 130.8 L640.7 129.6 L643.6 128.4 L646.6 127.1 L649.6 125.9 L652.6 124.6 L655.6 123.4 L658.6 122.1 L661.6 120.9 L664.7 119.6 L667.7 118.4 L670.8 117.2 L673.8 115.9 L676.9 114.7 L680.0 113.4 L683.1 112.2 L686.2 110.9 L689.3 109.7 L692.4 108.4 L695.6 107.2 L698.7 106.0 L701.9 104.7 L705.0 103.5 L708.2 102.2 L711.4 101.0 L714.5 99.8 L717.7 98.5 L720.9 97.3 L724.1 96.0 L727.4 94.8 L730.6 93.5 L733.8 92.3 L737.0 91.1 L740.3 89.8 L743.5 88.6 L746.8 87.4 L750.0 86.1 L753.3 84.9 L756.5 83.6 L759.8 82.4 L763.1 81.2 L766.4 79.9 L769.6 78.7 L772.9 77.5 L776.2 76.2 L779.5 75.0 L782.8 73.8 L786.1 72.6 L789.4 71.3 L792.7 70.1 L796.0 68.9 L799.3 67.6 L802.6 66.4 L805.9 65.2 L809.2 64.0 L812.5 62.8 L815.8 61.6 L819.1 60.3 L822.4 59.1 L825.7 57.9 L829.0 56.7 L832.3 55.5 L835.6 54.3 L838.8 53.2 L842.1 52.0 L845.3 50.8 L848.5 49.6 L851.7 48.5 L854.9 47.3 L858.0 46.2 L861.1 45.1 L864.2 44.0 L867.2 42.9 L870.2 41.9 L873.1 40.8 L875.9 39.9 L878.6 38.9 L881.1 38.1 L883.6 37.3 L885.8 36.6 L887.8 36.1 L889.6 35.7 L891.2 35.4 L892.5 35.4 L893.6 35.5 L894.6 35.8 L895.4 36.2 L896.0 36.8 L896.7 37.6 L897.2 38.4 L897.7 39.2 L898.3 40.2 L898.7 41.2 L899.2 42.2 L899.7 43.3 L900.2 44.3 L900.7 45.4 L901.1 46.6 L901.6 47.7 L902.1 48.9 L902.5 50.0 L903.0 51.2 L903.5 52.4 L903.9 53.5 L904.4 54.7 L904.9 55.9 L905.3 57.1 L905.8 58.3 L906.3 59.5 L906.7 60.7 L907.2 62.0 L907.7 63.2 L908.2 64.4 L908.6 65.6 L909.1 66.8 L909.6 68.0 L910.0 69.3 L910.5 70.5 L911.0 71.7 L911.5 73.0 L911.9 74.2 L912.4 75.4 L912.9 76.6 L913.3 77.9 L913.8 79.1 L914.3 80.3 L914.7 81.6 L915.2 82.8 L915.7 84.0 L916.1 85.3 L916.6 86.5 L917.1 87.8 L917.5 89.0 L918.0 90.2 L918.5 91.5 L918.9 92.7 L919.4 94.0 L919.9 95.2 L920.3 96.4 L920.8 97.7 L921.2 98.9 L921.7 100.2 L922.2 101.4 L922.6 102.6 L923.1 103.9 L923.5 105.1 L924.0 106.4 L924.4 107.6 L924.9 108.9 L925.3 110.1 L925.8 111.3 L926.2 112.6 L926.7 113.8 L927.1 115.1 L927.6 116.3 L928.0 117.6 L928.5 118.8 L928.9 120.0 L929.4 121.3 L929.8 122.5 L930.3 123.8 L930.7 125.0 L931.1 126.3 L931.6 127.5 L932.0 128.8 L932.4 130.0 L932.9 131.3 L933.3 132.5M437.2 246.0 L438.6 244.8 L440.0 243.5 L441.5 242.3 L442.9 241.0 L444.4 239.7 L445.9 238.5 L447.4 237.2 L449.0 235.9 L450.5 234.7 L452.1 233.4 L453.7 232.2 L455.3 230.9 L457.0 229.6 L458.6 228.4 L460.3 227.1 L462.0 225.8 L463.7 224.6 L465.5 223.3 L467.2 222.0 L469.0 220.8 L470.8 219.5 L472.7 218.3 L474.5 217.0 L476.4 215.7 L478.2 214.5 L480.1 213.2 L482.1 211.9 L484.0 210.7 L486.0 209.4 L487.9 208.2 L489.9 206.9 L491.9 205.6 L494.0 204.4 L496.0 203.1 L498.1 201.8 L500.2 200.6 L502.3 199.3 L504.4 198.1 L506.6 196.8 L508.7 195.5 L510.9 194.3 L513.1 193.0 L515.3 191.7 L517.6 190.5 L519.8 189.2 L522.1 188.0 L524.4 186.7 L526.7 185.4 L529.0 184.2 L531.3 182.9 L533.7 181.6 L536.0 180.4 L538.4 179.1 L540.8 177.9 L543.3 176.6 L545.7 175.3 L548.1 174.1 L550.6 172.8 L553.1 171.5 L555.6 170.3 L558.1 169.0 L560.6 167.8 L563.2 166.5 L565.8 165.2 L568.3 164.0 L570.9 162.7 L573.5 161.5 L576.2 160.2 L578.8 158.9 L581.4 157.7 L584.1 156.4 L586.8 155.1 L589.5 153.9 L592.2 152.6 L594.9 151.4 L597.7 150.1 L600.4 148.8 L603.2 147.6 L606.0 146.3 L608.8 145.1 L611.6 143.8 L614.4 142.5 L617.2 141.3 L620.1 140.0 L622.9 138.7 L625.8 137.5 L628.7 136.2 L631.6 135.0 L634.5 133.7 L637.4 132.4 L640.3 131.2 L643.3 129.9 L646.2 128.7 L649.2 127.4 L652.2 126.1 L655.1 124.9 L658.1 123.6 L661.2 122.4 L664.2 121.1 L667.2 119.8 L670.2 118.6 L673.3 117.3 L676.4 116.1 L679.4 114.8 L682.5 113.6 L685.6 112.3 L688.7 111.0 L691.8 109.8 L694.9 108.5 L698.1 107.3 L701.2 106.0 L704.3 104.7 L707.5 103.5 L710.7 102.2 L713.8 101.0 L717.0 99.7 L720.2 98.5 L723.4 97.2 L726.6 96.0 L729.8 94.7 L733.0 93.4 L736.2 92.2 L739.4 90.9 L742.7 89.7 L745.9 88.4 L749.2 87.2 L752.4 85.9 L755.7 84.7 L758.9 83.4 L762.2 82.2 L765.5 80.9 L768.8 79.7 L772.0 78.4 L775.3 77.2 L778.6 75.9 L781.9 74.7 L785.2 73.4 L788.5 72.2 L791.8 71.0 L795.1 69.7 L798.4 68.5 L801.7 67.2 L805.0 66.0 L808.3 64.8 L811.6 63.5 L814.9 62.3 L818.2 61.1 L821.5 59.8 L824.8 58.6 L828.1 57.4 L831.4 56.2 L834.6 55.0 L837.9 53.8 L841.2 52.6 L844.4 51.4 L847.6 50.2 L850.8 49.0 L854.0 47.8 L857.2 46.7 L860.3 45.5 L863.4 44.4 L866.5 43.3 L869.5 42.2 L872.4 41.2 L875.3 40.2 L878.0 39.2 L880.7 38.3 L883.2 37.5 L885.5 36.7 L887.6 36.1 L889.6 35.6 L891.2 35.3 L892.6 35.2 L893.8 35.2 L894.8 35.5 L895.7 35.9 L896.4 36.5 L897.1 37.2 L897.7 38.0 L898.2 38.9 L898.8 39.8 L899.3 40.8 L899.8 41.9 L900.4 42.9 L900.9 44.0 L901.4 45.2 L901.9 46.3 L902.4 47.4 L902.9 48.6 L903.5 49.8 L904.0 51.0 L904.5 52.2 L905.0 53.4 L905.5 54.6 L906.0 55.8 L906.6 57.0 L907.1 58.2 L907.6 59.4 L908.1 60.7 L908.6 61.9 L909.2 63.1 L909.7 64.3 L910.2 65.6 L910.7 66.8 L911.2 68.1 L911.7 69.3 L912.3 70.5 L912.8 71.8 L913.3 73.0 L913.8 74.3 L914.3 75.5 L914.9 76.8 L915.4 78.0 L915.9 79.3 L916.4 80.5 L916.9 81.7 L917.4 83.0 L918.0 84.3 L918.5 85.5 L919.0 86.8 L919.5 88.0 L920.0 89.3 L920.5 90.5 L921.0 91.8 L921.6 93.0 L922.1 94.3 L922.6 95.5 L923.1 96.8 L923.6 98.0 L924.1 99.3 L924.6 100.6 L925.1 101.8 L925.6 103.1 L926.1 104.3 L926.6 105.6 L927.1 106.8 L927.6 108.1 L928.1 109.4 L928.6 110.6 L929.1 111.9 L929.6 113.1 L930.1 114.4 L930.6 115.6 L931.1 116.9 L931.6 118.2 L932.1 119.4 L932.6 120.7 L933.0 121.9 L933.5 123.2 L934.0 124.5 L934.5 125.7 L935.0 127.0 L935.5 128.2 L935.9 129.5 L936.4 130.8 L936.9 132.0 L937.4 133.3 L937.8 134.5 L938.3 135.8M429.5 247.1 L430.7 245.9 L432.0 244.6 L433.2 243.4 L434.5 242.1 L435.8 240.9 L437.1 239.6 L438.4 238.4 L439.8 237.1 L441.2 235.9 L442.6 234.6 L444.0 233.4 L445.4 232.1 L446.9 230.9 L448.4 229.6 L449.9 228.4 L451.4 227.1 L452.9 225.9 L454.5 224.6 L456.1 223.4 L457.7 222.1 L459.3 220.9 L460.9 219.6 L462.6 218.4 L464.3 217.1 L466.0 215.9 L467.7 214.6 L469.4 213.4 L471.2 212.1 L473.0 210.9 L474.8 209.7 L476.6 208.4 L478.4 207.2 L480.3 205.9 L482.2 204.7 L484.0 203.4 L485.9 202.2 L487.9 200.9 L489.8 199.7 L491.8 198.4 L493.8 197.2 L495.8 195.9 L497.8 194.7 L499.8 193.4 L501.9 192.2 L504.0 190.9 L506.0 189.7 L508.2 188.4 L510.3 187.2 L512.4 185.9 L514.6 184.7 L516.8 183.4 L518.9 182.2 L521.2 180.9 L523.4 179.7 L525.6 178.4 L527.9 177.2 L530.2 176.0 L532.5 174.7 L534.8 173.5 L537.1 172.2 L539.4 171.0 L541.8 169.7 L544.2 168.5 L546.6 167.2 L549.0 166.0 L551.4 164.7 L553.8 163.5 L556.3 162.2 L558.7 161.0 L561.2 159.8 L563.7 158.5 L566.2 157.3 L568.8 156.0 L571.3 154.8 L573.9 153.5 L576.4 152.3 L579.0 151.0 L581.6 149.8 L584.2 148.5 L586.8 147.3 L589.5 146.1 L592.1 144.8 L594.8 143.6 L597.5 142.3 L600.2 141.1 L602.9 139.8 L605.6 138.6 L608.3 137.4 L611.0 136.1 L613.8 134.9 L616.6 133.6 L619.3 132.4 L622.1 131.2 L624.9 129.9 L627.7 128.7 L630.6 127.4 L633.4 126.2 L636.3 125.0 L639.1 123.7 L642.0 122.5 L644.9 121.2 L647.7 120.0 L650.6 118.8 L653.5 117.5 L656.5 116.3 L659.4 115.1 L662.3 113.8 L665.3 112.6 L668.2 111.4 L671.2 110.1 L674.2 108.9 L677.1 107.7 L680.1 106.4 L683.1 105.2 L686.1 104.0 L689.1 102.7 L692.2 101.5 L695.2 100.3 L698.2 99.1 L701.3 97.8 L704.3 96.6 L707.3 95.4 L710.4 94.2 L713.5 92.9 L716.5 91.7 L719.6 90.5 L722.7 89.3 L725.7 88.1 L728.8 86.8 L731.9 85.6 L735.0 84.4 L738.1 83.2 L741.2 82.0 L744.3 80.8 L747.4 79.6 L750.4 78.4 L753.5 77.2 L756.6 76.0 L759.7 74.8 L762.8 73.6 L765.9 72.4 L768.9 71.2 L772.0 70.1 L775.1 68.9 L778.1 67.7 L781.1 66.6 L784.2 65.4 L787.2 64.2 L790.2 63.1M1011.2 62.0 L1007.2 60.8 L1003.2 59.7 L999.2 58.6 L995.3 57.5 L991.3 56.4 L987.5 55.3 L983.7 54.3 L979.9 53.2 L976.2 52.2 L972.5 51.2 L968.9 50.2 L965.4 49.3 L962.0 48.4 L958.6 47.5 L955.4 46.6 L952.3 45.8 L949.4 45.1 L946.5 44.4 L943.9 43.8 L941.4 43.2 L939.2 42.8 L937.1 42.4 L935.2 42.1 L933.6 41.9 L932.2 41.8 L931.0 41.9 L930.0 42.0 L929.2 42.2 L928.5 42.6 L928.1 43.0 L927.7 43.5 L927.5 44.1 L927.4 44.7 L927.3 45.4 L927.4 46.2 L927.5 47.0 L927.6 47.9 L927.8 48.8 L928.0 49.7 L928.3 50.7 L928.6 51.7 L928.9 52.7 L929.3 53.7 L929.6 54.8 L930.0 55.8 L930.4 56.9 L930.8 58.0 L931.2 59.1 L931.6 60.2 L932.0 61.4 L932.5 62.5 L932.9 63.7 L933.3 64.8 L933.8 66.0 L934.2 67.1 L934.7 68.3 L935.1 69.5 L935.6 70.6 L936.0 71.8 L936.5 73.0 L936.9 74.2 L937.4 75.4 L937.9 76.6 L938.3 77.8 L938.8 79.0 L939.2 80.2 L939.7 81.4 L940.2 82.6 L940.6 83.8 L941.1 85.0 L941.6 86.2 L942.0 87.4 L942.5 88.6 L942.9 89.9 L943.4 91.1 L943.8 92.3 L944.3 93.5 L944.7 94.7 L945.2 96.0 L945.7 97.2 L946.1 98.4 L946.5 99.6 L947.0 100.9 L947.4 102.1 L947.9 103.3 L948.3 104.6 L948.8 105.8 L949.2 107.0 L949.6 108.3 L950.1 109.5 L950.5 110.7 L951.0 112.0 L951.4 113.2 L951.8 114.4 L952.2 115.7 L952.7 116.9 L953.1 118.1 L953.5 119.4 L953.9 120.6 L954.3 121.8 L954.8 123.1 L955.2 124.3 L955.6 125.6 L956.0 126.8 L956.4 128.0 L956.8 129.3 L957.2 130.5 L957.6 131.8 L958.0 133.0M465.4 243.1 L466.5 241.9 L467.6 240.6 L468.8 239.4 L470.0 238.2 L471.2 236.9 L472.4 235.7 L473.6 234.4 L474.8 233.2 L476.1 232.0 L477.4 230.7 L478.7 229.5 L480.0 228.3 L481.3 227.0 L482.7 225.8 L484.1 224.6 L485.5 223.3 L486.9 222.1 L488.3 220.9 L489.7 219.6 L491.2 218.4 L492.7 217.2 L494.2 215.9 L495.7 214.7 L497.2 213.5 L498.8 212.2 L500.4 211.0 L502.0 209.8 L503.6 208.5 L505.2 207.3 L506.8 206.1 L508.5 204.8 L510.2 203.6 L511.8 202.4 L513.5 201.1 L515.3 199.9 L517.0 198.7 L518.8 197.4 L520.5 196.2 L522.3 195.0 L524.1 193.7 L526.0 192.5 L527.8 191.3 L529.7 190.0 L531.5 188.8 L533.4 187.6 L535.3 186.4 L537.2 185.1 L539.2 183.9 L541.1 182.7 L543.1 181.4 L545.0 180.2 L547.0 179.0 L549.0 177.7 L551.1 176.5 L553.1 175.3 L555.2 174.1 L557.2 172.8 L559.3 171.6 L561.4 170.4 L563.5 169.1 L565.6 167.9 L567.8 166.7 L569.9 165.5 L572.1 164.2 L574.3 163.0 L576.5 161.8 L578.7 160.6 L580.9 159.3 L583.1 158.1 L585.4 156.9 L587.6 155.7 L589.9 154.4 L592.2 153.2 L594.5 152.0 L596.8 150.8 L599.1 149.6 L601.5 148.3 L603.8 147.1 L606.2 145.9 L608.5 144.7 L610.9 143.5 L613.3 142.2 L615.7 141.0 L618.1 139.8 L620.5 138.6 L623.0 137.4 L625.4 136.1 L627.9 134.9 L630.3 133.7 L632.8 132.5 L635.3 131.3 L637.8 130.1 L640.3 128.9 L642.8 127.6 L645.4 126.4 L647.9 125.2 L650.4 124.0 L653.0 122.8 L655.5 121.6 L658.1 120.4 L660.7 119.2 L663.3 118.0 L665.8 116.8 L668.4 115.6 L671.0 114.4 L673.7 113.2 L676.3 112.0 L678.9 110.8 L681.5 109.6 L684.2 108.4 L686.8 107.2 L689.4 106.0 L692.1 104.8 L694.7 103.6 L697.4 102.4 L700.1 101.3 L702.7 100.1 L705.4 98.9 L708.1 97.7 L710.7 96.5 L713.4 95.4 L716.1 94.2 L718.7 93.0 L721.4 91.9 L724.1 90.7 L726.8 89.5 L729.4 88.4 L732.1 87.2 L734.8 86.1 L737.4 84.9 L740.1 83.8 L742.7 82.6 L745.4 81.5 L748.0 80.4 L750.6 79.3 L753.2 78.1 L755.8 77.0 L758.4 75.9 L761.0 74.8 L763.5 73.7 L766.1 72.7 L768.6 71.6 L771.1 70.5 L773.6 69.5 L776.0 68.4 L778.4 67.4 L780.8 66.4 L783.2 65.3M1018.3 64.4 L1014.5 63.4 L1010.8 62.4 L1007.1 61.5 L1003.5 60.5 L1000.0 59.6 L996.5 58.8 L993.1 57.9 L989.7 57.1 L986.5 56.3 L983.3 55.5 L980.3 54.8 L977.3 54.1 L974.4 53.4 L971.7 52.8 L969.1 52.2 L966.6 51.7 L964.3 51.3 L962.1 50.8 L960.0 50.5 L958.1 50.2 L956.3 50.0 L954.7 49.8 L953.3 49.7 L952.0 49.7 L950.8 49.8 L949.8 49.9 L949.0 50.0 L948.2 50.3 L947.6 50.6 L947.1 51.0 L946.7 51.4 L946.4 51.9 L946.2 52.4 L946.1 53.0 L946.1 53.6 L946.1 54.3 L946.2 55.0 L946.4 55.7 L946.6 56.5 L946.8 57.3 L947.1 58.1 L947.4 59.0 L947.8 59.9 L948.2 60.8 L948.6 61.7 L949.0 62.7 L949.5 63.7 L949.9 64.6 L950.4 65.6 L950.9 66.7 L951.5 67.7 L952.0 68.7 L952.6 69.8 L953.1 70.8 L953.7 71.9 L954.2 73.0 L954.8 74.1 L955.4 75.2 L956.0 76.3 L956.6 77.4 L957.2 78.5 L957.8 79.6 L958.4 80.7 L959.1 81.8 L959.7 83.0 L960.3 84.1 L960.9 85.3 L961.5 86.4 L962.2 87.6 L962.8 88.7 L963.4 89.9 L964.0 91.0 L964.7 92.2 L965.3 93.4 L965.9 94.5 L966.6 95.7 L967.2 96.9 L967.8 98.1 L968.4 99.2 L969.1 100.4 L969.7 101.6 L970.3 102.8 L970.9 104.0 L971.6 105.2 L972.2 106.4 L972.8 107.5 L973.4 108.7 L974.0 109.9 L974.7 111.1 L975.3 112.3 L975.9 113.5 L976.5 114.7 L977.1 115.9 L977.7 117.1 L978.3 118.3 L978.9 119.5 L979.5 120.7 L980.1 122.0 L980.7 123.2 L981.3 124.4 L981.9 125.6 L982.4 126.8 L983.0 128.0 L983.6 129.2 L984.2 130.4 L984.7 131.6 L985.3 132.9 L985.9 134.1 L986.4 135.3 L987.0 136.5M453.8 257.0 L455.3 255.9 L456.9 254.8 L458.4 253.7 L460.0 252.6 L461.6 251.5 L463.2 250.4 L464.8 249.3 L466.4 248.1 L468.0 247.0 L469.7 245.9 L471.4 244.8 L473.1 243.7 L474.8 242.6 L476.5 241.5 L478.2 240.4 L479.9 239.3 L481.7 238.2 L483.5 237.1 L485.2 236.0 L487.0 234.9 L488.9 233.8 L490.7 232.7 L492.5 231.6 L494.4 230.5 L496.2 229.4 L498.1 228.3 L500.0 227.2 L501.9 226.1 L503.8 225.1 L505.7 224.0 L507.6 222.9 L509.6 221.8 L511.6 220.7 L513.5 219.6 L515.5 218.5 L517.5 217.5 L519.5 216.4 L521.5 215.3 L523.5 214.2 L525.6 213.1 L527.6 212.1 L529.7 211.0 L531.8 209.9 L533.8 208.9 L535.9 207.8 L538.0 206.7 L540.1 205.7 L542.3 204.6 L544.4 203.5 L546.5 202.5 L548.7 201.4 L550.8 200.4 L553.0 199.3 L555.2 198.2 L557.3 197.2 L559.5 196.1 L561.7 195.1 L563.9 194.1 L566.1 193.0 L568.4 192.0 L570.6 190.9 L572.8 189.9 L575.1 188.9 L577.3 187.8 L579.6 186.8 L581.8 185.8 L584.1 184.7 L586.3 183.7 L588.6 182.7 L590.9 181.7 L593.2 180.7 L595.5 179.7 L597.8 178.7 L600.1 177.6 L602.4 176.6 L604.7 175.6 L607.0 174.6 L609.3 173.6 L611.7 172.7 L614.0 171.7 L616.3 170.7 L618.6 169.7 L621.0 168.7 L623.3 167.7 L625.6 166.8 L628.0 165.8 L630.3 164.8 L632.7 163.9 L635.0 162.9 L637.3 162.0 L639.7 161.0 L642.0 160.1 L644.4 159.1 L646.7 158.2 L649.1 157.3 L651.4 156.3 L653.7 155.4 L656.1 154.5 L658.4 153.6 L660.7 152.7 L663.1 151.8 L665.4 150.9 L667.7 150.0 L670.0 149.1 L672.4 148.2 L674.7 147.3 L677.0 146.5 L679.3 145.6 L681.6 144.8 L683.9 143.9 L686.2 143.1 L688.5 142.2 L690.7 141.4 L693.0 140.6 L695.3 139.7 L697.5 138.9 L699.8 138.1 L702.0 137.3 L704.2 136.5 L706.5 135.7 L708.7 135.0 L710.9 134.2 L713.1 133.4 L715.3 132.7 L717.4 131.9 L719.6 131.2 L721.8 130.5 L723.9 129.8 L726.0 129.1 L728.1 128.4 L730.3 127.7 L732.3 127.0 L734.4 126.3 L736.5 125.7 L738.5 125.0 L740.6 124.4 L742.6 123.8 L744.6 123.2 L746.6 122.6 L748.6 122.0 L750.5 121.4 L752.5 120.8 L754.4 120.3 L756.3 119.7 L758.2 119.2 L760.1 118.7 L762.0 118.2 L763.8 117.7 L765.6 117.2 L767.4 116.7 L769.2 116.3 L771.0 115.9 L772.7 115.4 L774.5 115.0 L776.2 114.6 L777.9 114.3 L779.5 113.9 L781.2 113.6 L782.8 113.2 L784.4 112.9 L786.0 112.6 L787.6 112.3 L789.1 112.1 L790.7 111.8 L792.2 111.6 L793.7 111.4 L795.2 111.2 L796.6 111.0 L798.0 110.8 L799.5 110.7 L800.8 110.5 L802.2 110.4 L803.6 110.3 L804.9 110.2 L806.2 110.2 L807.5 110.1 L808.8 110.1 L810.1 110.1 L811.3 110.1 L812.5 110.1 L813.7 110.2 L814.9 110.2 L816.1 110.3 L817.2 110.4 L818.4 110.5 L819.5 110.7 L820.6 110.8 L821.7 111.0 L822.8 111.2 L823.8 111.4 L824.9 111.6 L825.9 111.8 L826.9 112.1 L827.9 112.3 L828.9 112.6 L829.9 112.9 L830.9 113.2 L831.8 113.5 L832.8 113.9 L833.7 114.3 L834.6 114.6 L835.5 115.0 L836.4 115.4 L837.3 115.8 L838.2 116.3 L839.1 116.7 L839.9 117.2 L840.8 117.7 L841.6 118.2 L842.5 118.7 L843.3 119.2 L844.1 119.7 L845.0 120.3 L845.8 120.8 L846.6 121.4 L847.4 122.0 L848.2 122.5 L849.0 123.1 L849.7 123.8 L850.5 124.4 L851.3 125.0 L852.1 125.7 L852.8 126.3 L853.6 127.0 L854.3 127.7 L855.1 128.4 L855.8 129.1 L856.6 129.8 L857.3 130.5 L858.1 131.2 L858.8 131.9 L859.6 132.7 L860.3 133.4 L861.0 134.2 L861.8 134.9 L862.5 135.7 L863.2 136.5 L863.9 137.3 L864.7 138.1 L865.4 138.9 L866.1 139.7 L866.8 140.5 L867.5 141.4 L868.2 142.2 L869.0 143.0 L869.7 143.9 L870.4 144.7 L871.1 145.6 L871.8 146.5 L872.5 147.3 L873.2 148.2 L873.9 149.1 L874.6 150.0 L875.4 150.9 L876.1 151.8 L876.8 152.7 L877.5 153.6 L878.2 154.5 L878.9 155.4M447.3 254.7 L448.9 253.7 L450.6 252.6 L452.3 251.5 L454.0 250.4 L455.7 249.4 L457.4 248.3 L459.1 247.2 L460.9 246.2 L462.7 245.1 L464.4 244.0 L466.2 243.0 L468.0 241.9 L469.8 240.9 L471.7 239.8 L473.5 238.7 L475.3 237.7 L477.2 236.6 L479.1 235.6 L481.0 234.5 L482.9 233.5 L484.8 232.4 L486.7 231.4 L488.6 230.3 L490.6 229.3 L492.5 228.2 L494.5 227.2 L496.5 226.1 L498.5 225.1 L500.5 224.1 L502.5 223.0 L504.5 222.0 L506.5 221.0 L508.6 219.9 L510.6 218.9 L512.7 217.9 L514.7 216.8 L516.8 215.8 L518.9 214.8 L521.0 213.8 L523.1 212.8 L525.2 211.7 L527.3 210.7 L529.5 209.7 L531.6 208.7 L533.7 207.7 L535.9 206.7 L538.1 205.7 L540.2 204.7 L542.4 203.7 L544.6 202.7 L546.8 201.7 L549.0 200.7 L551.2 199.7 L553.4 198.7 L555.6 197.7 L557.8 196.8 L560.0 195.8 L562.3 194.8 L564.5 193.8 L566.7 192.9 L569.0 191.9 L571.2 190.9 L573.5 190.0 L575.7 189.0 L578.0 188.1 L580.3 187.1 L582.5 186.2 L584.8 185.2 L587.1 184.3 L589.3 183.4 L591.6 182.4 L593.9 181.5 L596.2 180.6 L598.5 179.6 L600.7 178.7 L603.0 177.8 L605.3 176.9 L607.6 176.0 L609.9 175.1 L612.2 174.2 L614.5 173.3 L616.8 172.4 L619.0 171.5 L621.3 170.7 L623.6 169.8 L625.9 168.9 L628.2 168.1 L630.5 167.2 L632.7 166.3 L635.0 165.5 L637.3 164.6 L639.6 163.8 L641.8 163.0 L644.1 162.2 L646.3 161.3 L648.6 160.5 L650.8 159.7 L653.1 158.9 L655.3 158.1 L657.6 157.3 L659.8 156.5 L662.0 155.7 L664.2 155.0 L666.4 154.2 L668.6 153.5 L670.8 152.7 L673.0 152.0 L675.2 151.2 L677.4 150.5 L679.5 149.8 L681.7 149.1 L683.8 148.4 L686.0 147.7 L688.1 147.0 L690.2 146.3 L692.3 145.6 L694.4 145.0 L696.5 144.3 L698.6 143.6 L700.7 143.0 L702.7 142.4 L704.8 141.8 L706.8 141.2 L708.8 140.6 L710.8 140.0 L712.8 139.4 L714.8 138.8 L716.7 138.3 L718.7 137.7 L720.6 137.2 L722.6 136.6 L724.5 136.1 L726.4 135.6 L728.2 135.1 L730.1 134.6 L732.0 134.2 L733.8 133.7 L735.6 133.2 L737.4 132.8 L739.2 132.4 L741.0 132.0 L742.7 131.6 L744.5 131.2 L746.2 130.8 L747.9 130.4 L749.6 130.1 L751.3 129.8 L752.9 129.4 L754.6 129.1 L756.2 128.8 L757.8 128.5 L759.4 128.3 L760.9 128.0 L762.5 127.8 L764.0 127.6 L765.5 127.3 L767.0 127.1 L768.5 127.0 L770.0 126.8 L771.4 126.6 L772.9 126.5 L774.3 126.4 L775.7 126.3 L777.1 126.2 L778.4 126.1 L779.8 126.0 L781.1 126.0 L782.4 125.9 L783.7 125.9 L785.0 125.9 L786.3 125.9 L787.5 125.9 L788.7 125.9 L790.0 126.0 L791.2 126.1 L792.4 126.1 L793.5 126.2 L794.7 126.4 L795.8 126.5 L797.0 126.6 L798.1 126.8 L799.2 126.9 L800.3 127.1 L801.4 127.3 L802.4 127.5 L803.5 127.8 L804.5 128.0 L805.5 128.2 L806.6 128.5 L807.6 128.8 L808.6 129.1 L809.5 129.4 L810.5 129.7 L811.5 130.1 L812.4 130.4 L813.4 130.8 L814.3 131.1 L815.2 131.5 L816.1 131.9 L817.0 132.3 L817.9 132.8 L818.8 133.2 L819.7 133.6 L820.6 134.1 L821.4 134.6 L822.3 135.1 L823.2 135.5 L824.0 136.1 L824.8 136.6 L825.7 137.1 L826.5 137.6 L827.3 138.2 L828.1 138.7 L828.9 139.3 L829.7 139.9 L830.5 140.5 L831.3 141.1 L832.1 141.7 L832.9 142.3 L833.7 142.9 L834.5 143.6 L835.3 144.2 L836.0 144.9 L836.8 145.5 L837.6 146.2 L838.3 146.9 L839.1 147.6 L839.8 148.3 L840.6 149.0 L841.3 149.7 L842.1 150.4 L842.8 151.1 L843.6 151.9 L844.3 152.6 L845.1 153.4 L845.8 154.1 L846.5 154.9 L847.3 155.7 L848.0 156.4 L848.7 157.2 L849.5 158.0 L850.2 158.8 L850.9 159.6 L851.7 160.4 L852.4 161.2 L853.1 162.0 L853.8 162.9 L854.6 163.7 L855.3 164.5 L856.0 165.4 L856.7 166.2 L857.4 167.1 L858.2 167.9 L858.9 168.8 L859.6 169.7 L860.3 170.6 L861.1 171.4 L861.8 172.3 L862.5 173.2M436.4 237.0 L438.5 235.8 L440.7 234.6 L442.9 233.4 L445.1 232.2 L447.3 230.9 L449.5 229.7 L451.8 228.5 L454.1 227.3 L456.3 226.1 L458.7 224.9 L461.0 223.7 L463.3 222.5 L465.7 221.3 L468.0 220.1 L470.4 218.9 L472.8 217.7 L475.2 216.5 L477.6 215.3 L480.1 214.1 L482.5 213.0 L485.0 211.8 L487.5 210.6 L490.0 209.4 L492.5 208.2 L495.0 207.0 L497.6 205.9 L500.1 204.7 L502.7 203.5 L505.3 202.4 L507.9 201.2 L510.5 200.0 L513.1 198.9 L515.7 197.7 L518.3 196.6 L521.0 195.4 L523.6 194.2 L526.3 193.1 L529.0 192.0 L531.6 190.8 L534.3 189.7 L537.0 188.5 L539.7 187.4 L542.5 186.3 L545.2 185.1 L547.9 184.0 L550.7 182.9 L553.4 181.8 L556.2 180.7 L558.9 179.5 L561.7 178.4 L564.4 177.3 L567.2 176.2 L570.0 175.1 L572.8 174.0 L575.6 173.0 L578.4 171.9 L581.2 170.8 L584.0 169.7 L586.8 168.6 L589.6 167.6 L592.4 166.5 L595.2 165.5 L598.0 164.4 L600.8 163.4 L603.6 162.3 L606.4 161.3 L609.2 160.3 L612.0 159.2 L614.8 158.2 L617.6 157.2 L620.4 156.2 L623.2 155.2 L626.0 154.2 L628.8 153.2 L631.6 152.2 L634.4 151.2 L637.2 150.3 L639.9 149.3 L642.7 148.4 L645.5 147.4 L648.2 146.5 L651.0 145.5 L653.7 144.6 L656.4 143.7 L659.1 142.8 L661.8 141.9 L664.5 141.0 L667.2 140.1 L669.9 139.2 L672.6 138.4 L675.2 137.5 L677.8 136.7 L680.5 135.8 L683.1 135.0 L685.7 134.2 L688.3 133.4 L690.8 132.6 L693.4 131.8 L695.9 131.1 L698.4 130.3 L700.9 129.6 L703.4 128.8 L705.8 128.1 L708.3 127.4 L710.7 126.7 L713.1 126.0 L715.5 125.4 L717.8 124.7 L720.1 124.1 L722.5 123.4 L724.7 122.8 L727.0 122.2 L729.2 121.6 L731.5 121.1 L733.6 120.5 L735.8 120.0 L737.9 119.5 L740.1 119.0 L742.1 118.5 L744.2 118.0 L746.2 117.6 L748.2 117.2 L750.2 116.8 L752.2 116.4 L754.1 116.0 L756.0 115.6 L757.8 115.3 L759.7 115.0 L761.5 114.7 L763.2 114.4 L765.0 114.2 L766.7 113.9 L768.4 113.7 L770.1 113.5 L771.7 113.3 L773.3 113.2 L774.9 113.0 L776.4 112.9 L777.9 112.8 L779.4 112.8 L780.9 112.7 L782.3 112.7 L783.7 112.7 L785.1 112.7 L786.4 112.7 L787.8 112.8 L789.1 112.9 L790.3 113.0 L791.6 113.1 L792.8 113.2 L794.0 113.4 L795.2 113.6 L796.3 113.8 L797.5 114.0 L798.6 114.2 L799.6 114.5 L800.7 114.8 L801.7 115.1 L802.8 115.4 L803.8 115.7 L804.8 116.1 L805.7 116.5 L806.7 116.9 L807.6 117.3 L808.5 117.7 L809.4 118.2 L810.3 118.6 L811.1 119.1 L812.0 119.6 L812.8 120.1 L813.6 120.7 L814.4 121.2 L815.2 121.8 L816.0 122.4 L816.8 123.0 L817.6 123.6 L818.3 124.2 L819.0 124.9 L819.8 125.5 L820.5 126.2 L821.2 126.9 L821.9 127.6 L822.6 128.3 L823.3 129.0 L824.0 129.7 L824.6 130.5 L825.3 131.3 L825.9 132.0 L826.6 132.8 L827.2 133.6 L827.9 134.4 L828.5 135.2 L829.1 136.1 L829.8 136.9 L830.4 137.7 L831.0 138.6 L831.6 139.5 L832.2 140.3 L832.8 141.2 L833.4 142.1 L834.0 143.0 L834.6 143.9 L835.2 144.8 L835.8 145.8 L836.4 146.7 L837.0 147.6 L837.6 148.6 L838.2 149.6 L838.8 150.5 L839.3 151.5 L839.9 152.5 L840.5 153.5 L841.1 154.4 L841.7 155.4 L842.2 156.4 L842.8 157.5 L843.4 158.5 L844.0 159.5 L844.5 160.5 L845.1 161.6 L845.7 162.6 L846.3 163.6 L846.8 164.7 L847.4 165.7 L848.0 166.8 L848.6 167.9 L849.2 168.9 L849.7 170.0 L850.3 171.1 L850.9 172.2 L851.5 173.2 L852.0 174.3 L852.6 175.4 L853.2 176.5 L853.8 177.6 L854.4 178.7 L854.9 179.8 L855.5 180.9 L856.1 182.1 L856.7 183.2 L857.3 184.3 L857.9 185.4 L858.5 186.6 L859.0 187.7 L859.6 188.8 L860.2 190.0 L860.8 191.1 L861.4 192.2 L862.0 193.4 L862.6 194.5 L863.2 195.7 L863.8 196.8 L864.4 198.0 L865.0 199.2 L865.6 200.3 L866.2 201.5 L866.8 202.7 L867.4 203.8 L868.0 205.0M445.0 232.9 L446.6 232.3 L448.1 231.6 L449.7 230.9 L451.2 230.3 L452.8 229.6 L454.4 229.0 L455.9 228.3 L457.5 227.6 L459.1 227.0 L460.7 226.3 L462.2 225.7 L463.8 225.0 L465.4 224.4 L467.0 223.7 L468.6 223.1 L470.2 222.4 L471.8 221.8 L473.4 221.2 L475.0 220.5 L476.6 219.9 L478.3 219.3 L479.9 218.6 L481.5 218.0 L483.1 217.4 L484.7 216.7 L486.4 216.1 L488.0 215.5 L489.6 214.9 L491.3 214.2 L492.9 213.6 L494.5 213.0 L496.2 212.4 L497.8 211.8 L499.4 211.2 L501.1 210.6 L502.7 210.0 L504.3 209.4 L506.0 208.8 L507.6 208.2 L509.3 207.6 L510.9 207.0 L512.6 206.4 L514.2 205.8 L515.9 205.2 L517.5 204.6 L519.2 204.0 L520.8 203.5 L522.5 202.9 L524.1 202.3 L525.7 201.7 L527.4 201.2 L529.0 200.6 L530.7 200.0 L532.3 199.5 L534.0 198.9 L535.6 198.4 L537.3 197.8 L538.9 197.3 L540.5 196.7 L542.2 196.2 L543.8 195.6 L545.5 195.1 L547.1 194.5 L548.7 194.0 L550.4 193.5 L552.0 192.9 L553.6 192.4 L555.3 191.9 L556.9 191.4 L558.5 190.9 L560.1 190.4 L561.8 189.8 L563.4 189.3 L565.0 188.8 L566.6 188.3 L568.2 187.8 L569.8 187.3 L571.4 186.8 L573.0 186.4 L574.6 185.9 L576.2 185.4 L577.8 184.9 L579.4 184.4 L581.0 184.0 L582.6 183.5 L584.1 183.1 L585.7 182.6 L587.3 182.1 L588.9 181.7 L590.4 181.2 L592.0 180.8 L593.5 180.4 L595.1 179.9 L596.6 179.5 L598.2 179.1 L599.7 178.6 L601.2 178.2 L602.8 177.8 L604.3 177.4 L605.8 177.0 L607.3 176.6 L608.8 176.2 L610.3 175.8 L611.8 175.4 L613.3 175.0 L614.8 174.6 L616.3 174.2 L617.8 173.9 L619.2 173.5 L620.7 173.1 L622.2 172.8 L623.6 172.4 L625.1 172.1 L626.5 171.7 L627.9 171.4 L629.4 171.0 L630.8 170.7 L632.2 170.4 L633.6 170.0 L635.0 169.7 L636.4 169.4 L637.8 169.1 L639.2 168.8 L640.6 168.5 L642.0 168.2 L643.3 167.9 L644.7 167.6 L646.0 167.4 L647.4 167.1 L648.7 166.8 L650.0 166.6 L651.4 166.3 L652.7 166.0 L654.0 165.8 L655.3 165.6 L656.6 165.3 L657.9 165.1 L659.1 164.9 L660.4 164.6 L661.7 164.4 L662.9 164.2 L664.2 164.0 L665.4 163.8 L666.7 163.6 L667.9 163.4 L669.1 163.2 L670.3 163.1 L671.5 162.9 L672.7 162.7 L673.9 162.6 L675.1 162.4 L676.3 162.3 L677.4 162.1 L678.6 162.0 L679.7 161.8 L680.9 161.7 L682.0 161.6 L683.2 161.5 L684.3 161.4 L685.4 161.3 L686.5 161.2 L687.6 161.1 L688.7 161.0 L689.8 160.9 L690.8 160.9 L691.9 160.8 L693.0 160.7 L694.0 160.7 L695.1 160.6 L696.1 160.6 L697.1 160.5 L698.1 160.5 L699.2 160.5 L700.2 160.5 L701.2 160.4 L702.1 160.4 L703.1 160.4 L704.1 160.4 L705.1 160.4 L706.0 160.5 L707.0 160.5 L707.9 160.5 L708.9 160.5 L709.8 160.6 L710.7 160.6 L711.7 160.7 L712.6 160.7 L713.5 160.8 L714.4 160.9 L715.3 160.9 L716.2 161.0 L717.0 161.1 L717.9 161.2 L718.8 161.3 L719.6 161.4 L720.5 161.5 L721.3 161.6 L722.2 161.8 L723.0 161.9 L723.8 162.0 L724.6 162.2 L725.5 162.3 L726.3 162.5 L727.1 162.6 L727.9 162.8 L728.7 162.9 L729.5 163.1 L730.2 163.3 L731.0 163.5 L731.8 163.7 L732.5 163.9 L733.3 164.1 L734.0 164.3 L734.8 164.5 L735.5 164.7 L736.3 164.9 L737.0 165.2 L737.7 165.4 L738.5 165.6 L739.2 165.9 L739.9 166.1 L740.6 166.4 L741.3 166.6 L742.0 166.9 L742.7 167.2 L743.4 167.5 L744.1 167.7 L744.8 168.0 L745.4 168.3 L746.1 168.6 L746.8 168.9 L747.4 169.2 L748.1 169.5 L748.8 169.8 L749.4 170.2 L750.1 170.5 L750.7 170.8 L751.4 171.1 L752.0 171.5 L752.6 171.8 L753.3 172.2 L753.9 172.5 L754.5 172.9 L755.2 173.3 L755.8 173.6 L756.4 174.0 L757.0 174.4 L757.6 174.7 L758.2 175.1 L758.8 175.5 L759.4 175.9 L760.0 176.3 L760.6 176.7 L761.2 177.1 L761.8 177.5 L762.4 177.9 L763.0 178.4 L763.6 178.8 L764.2 179.2" fill="none" stroke="#59d200" stroke-width="1.39" stroke-dasharray="1.39 2.29"/>
<path d="M718.5 238.6 L719.1 237.8 L719.6 237.0 L720.2 236.3 L720.7 235.5 L721.3 234.7 L721.8 233.9 L722.4 233.2 L722.9 232.4 L723.5 231.6 L724.1 230.9 L724.6 230.1 L725.2 229.3 L725.8 228.5 L726.4 227.8 L727.0 227.0 L727.5 226.2 L728.1 225.5 L728.7 224.7 L729.3 223.9 L729.9 223.1 L730.5 222.4 L731.1 221.6 L731.7 220.8 L732.3 220.1 L732.9 219.3 L733.6 218.5 L734.2 217.8 L734.8 217.0 L735.4 216.2 L736.0 215.4 L736.7 214.7 L737.3 213.9 L737.9 213.1 L738.6 212.4 L739.2 211.6 L739.9 210.8 L740.5 210.1 L741.1 209.3 L741.8 208.5 L742.5 207.8 L743.1 207.0 L743.8 206.2 L744.4 205.5 L745.1 204.7 L745.8 203.9 L746.4 203.2 L747.1 202.4 L747.8 201.6 L748.4 200.9 L749.1 200.1 L749.8 199.3 L750.5 198.6 L751.2 197.8 L751.9 197.0 L752.5 196.3 L753.2 195.5 L753.9 194.7 L754.6 194.0 L755.3 193.2 L756.0 192.4 L756.7 191.7 L757.4 190.9 L758.2 190.1 L758.9 189.4 L759.6 188.6 L760.3 187.9 L761.0 187.1 L761.7 186.3 L762.5 185.6 L763.2 184.8 L763.9 184.0 L764.6 183.3 L765.4 182.5 L766.1 181.8 L766.8 181.0 L767.6 180.2 L768.3 179.5 L769.1 178.7 L769.8 178.0 L770.5 177.2 L771.3 176.4 L772.0 175.7 L772.8 174.9 L773.5 174.2 L774.3 173.4 L775.1 172.6 L775.8 171.9 L776.6 171.1 L777.3 170.4 L778.1 169.6 L778.9 168.9 L779.6 168.1 L780.4 167.3 L781.2 166.6 L782.0 165.8 L782.7 165.1 L783.5 164.3 L784.3 163.6 L785.1 162.8 L785.8 162.1 L786.6 161.3 L787.4 160.6 L788.2 159.8 L789.0 159.1 L789.8 158.3 L790.6 157.5 L791.4 156.8 L792.2 156.0 L793.0 155.3 L793.7 154.5 L794.5 153.8 L795.3 153.1 L796.1 152.3 L797.0 151.6 L797.8 150.8 L798.6 150.1 L799.4 149.3 L800.2 148.6 L801.0 147.8 L801.8 147.1 L802.6 146.3 L803.4 145.6 L804.2 144.9 L805.0 144.1 L805.9 143.4 L806.7 142.6 L807.5 141.9 L808.3 141.2 L809.1 140.4 L810.0 139.7 L810.8 138.9 L811.6 138.2 L812.4 137.5 L813.3 136.7 L814.1 136.0 L814.9 135.3 L815.7 134.5 L816.6 133.8 L817.4 133.1 L818.2 132.3 L819.1 131.6 L819.9 130.9 L820.7 130.1 L821.5 129.4 L822.4 128.7 L823.2 128.0 L824.0 127.2 L824.9 126.5 L825.7 125.8 L826.6 125.1 L827.4 124.3 L828.2 123.6 L829.1 122.9 L829.9 122.2 L830.7 121.5 L831.6 120.8 L832.4 120.0 L833.3 119.3 L834.1 118.6 L834.9 117.9 L835.8 117.2 L836.6 116.5 L837.4 115.8 L838.3 115.1 L839.1 114.4 L840.0 113.7 L840.8 113.0 L841.6 112.3 L842.5 111.6 L843.3 110.9 L844.1 110.2 L845.0 109.5 L845.8 108.8 L846.7 108.1 L847.5 107.4 L848.3 106.7 L849.2 106.1 L850.0 105.4 L850.8 104.7 L851.7 104.0 L852.5 103.3 L853.3 102.7 L854.2 102.0 L855.0 101.3 L855.8 100.7 L856.7 100.0 L857.5 99.3 L858.3 98.7 L859.1 98.0 L860.0 97.4 L860.8 96.7 L861.6 96.1 L862.4 95.4 L863.3 94.8 L864.1 94.1 L864.9 93.5 L865.7 92.9 L866.5 92.2 L867.3 91.6 L868.1 91.0 L869.0 90.4 L869.8 89.8 L870.6 89.1 L871.4 88.5 L872.2 87.9 L873.0 87.3 L873.8 86.7 L874.6 86.1 L875.4 85.6 L876.2 85.0 L877.0 84.4 L877.8 83.8 L878.6 83.3 L879.4 82.7 L880.1 82.2 L880.9 81.6 L881.7 81.1 L882.5 80.5 L883.3 80.0 L884.0 79.5 L884.8 79.0 L885.6 78.4 L886.3 77.9 L887.1 77.5 L887.9 77.0 L888.6 76.5 L889.4 76.0 L890.2 75.5 L890.9 75.1 L891.7 74.6 L892.4 74.2 L893.2 73.8 L893.9 73.4 L894.7 72.9 L895.4 72.5 L896.2 72.2 L896.9 71.8 L897.7 71.4 L898.4 71.0 L899.1 70.7 L899.9 70.4 L900.6 70.0 L901.4 69.7 L902.1 69.4 L902.8 69.1 L903.6 68.9 L904.3 68.6 L905.0 68.4 L905.8 68.1 L906.5 67.9 L907.3 67.7 L908.0 67.5 L908.8 67.3 L909.5 67.2 L910.3 67.0 L911.0 66.9 L911.8 66.8 L912.5 66.7 L913.3 66.6M720.2 239.0 L720.8 238.2 L721.3 237.4 L721.9 236.6 L722.5 235.8 L723.1 235.0 L723.6 234.1 L724.2 233.3 L724.8 232.5 L725.4 231.7 L726.0 230.9 L726.6 230.1 L727.2 229.3 L727.8 228.5 L728.4 227.6 L729.1 226.8 L729.7 226.0 L730.3 225.2 L730.9 224.4 L731.6 223.6 L732.2 222.8 L732.8 222.0 L733.5 221.2 L734.1 220.3 L734.7 219.5 L735.4 218.7 L736.0 217.9 L736.7 217.1 L737.3 216.3 L738.0 215.5 L738.7 214.7 L739.3 213.9 L740.0 213.1 L740.7 212.3 L741.3 211.4 L742.0 210.6 L742.7 209.8 L743.4 209.0 L744.1 208.2 L744.7 207.4 L745.4 206.6 L746.1 205.8 L746.8 205.0 L747.5 204.2 L748.2 203.4 L748.9 202.6 L749.6 201.7 L750.4 200.9 L751.1 200.1 L751.8 199.3 L752.5 198.5 L753.2 197.7 L753.9 196.9 L754.7 196.1 L755.4 195.3 L756.1 194.5 L756.9 193.7 L757.6 192.9 L758.3 192.1 L759.1 191.3 L759.8 190.5 L760.6 189.7 L761.3 188.9 L762.1 188.1 L762.8 187.3 L763.6 186.5 L764.3 185.7 L765.1 184.9 L765.9 184.1 L766.6 183.3 L767.4 182.5 L768.2 181.7 L768.9 180.9 L769.7 180.1 L770.5 179.3 L771.3 178.5 L772.1 177.7 L772.8 176.9 L773.6 176.1 L774.4 175.3 L775.2 174.5 L776.0 173.7 L776.8 172.9 L777.6 172.1 L778.4 171.3 L779.2 170.5 L780.0 169.7 L780.8 168.9 L781.6 168.1 L782.4 167.3 L783.2 166.5 L784.0 165.7 L784.8 164.9 L785.7 164.1 L786.5 163.3 L787.3 162.5 L788.1 161.7 L788.9 161.0 L789.8 160.2 L790.6 159.4 L791.4 158.6 L792.2 157.8 L793.1 157.0 L793.9 156.2 L794.7 155.4 L795.6 154.6 L796.4 153.9 L797.2 153.1 L798.1 152.3 L798.9 151.5 L799.8 150.7 L800.6 149.9 L801.5 149.1 L802.3 148.4 L803.2 147.6 L804.0 146.8 L804.9 146.0 L805.7 145.2 L806.6 144.5 L807.4 143.7 L808.3 142.9 L809.1 142.1 L810.0 141.3 L810.8 140.6 L811.7 139.8 L812.6 139.0 L813.4 138.2 L814.3 137.5 L815.2 136.7 L816.0 135.9 L816.9 135.2 L817.8 134.4 L818.6 133.6 L819.5 132.9 L820.4 132.1 L821.2 131.3 L822.1 130.6 L823.0 129.8 L823.8 129.0 L824.7 128.3 L825.6 127.5 L826.5 126.8 L827.3 126.0 L828.2 125.2 L829.1 124.5 L830.0 123.7 L830.8 123.0 L831.7 122.2 L832.6 121.5 L833.5 120.7 L834.3 120.0 L835.2 119.2 L836.1 118.5 L837.0 117.7 L837.8 117.0 L838.7 116.3 L839.6 115.5 L840.5 114.8 L841.3 114.0 L842.2 113.3 L843.1 112.6 L844.0 111.8 L844.8 111.1 L845.7 110.4 L846.6 109.7 L847.5 108.9 L848.3 108.2 L849.2 107.5 L850.1 106.8 L851.0 106.1 L851.8 105.4 L852.7 104.6 L853.6 103.9 L854.4 103.2 L855.3 102.5 L856.2 101.8 L857.0 101.1 L857.9 100.4 L858.8 99.7 L859.6 99.1 L860.5 98.4 L861.4 97.7 L862.2 97.0 L863.1 96.3 L863.9 95.7 L864.8 95.0 L865.6 94.3 L866.5 93.7 L867.4 93.0 L868.2 92.3 L869.1 91.7 L869.9 91.1 L870.7 90.4 L871.6 89.8 L872.4 89.1 L873.3 88.5 L874.1 87.9 L874.9 87.3 L875.8 86.7 L876.6 86.1 L877.4 85.4 L878.3 84.9 L879.1 84.3 L879.9 83.7 L880.7 83.1 L881.6 82.5 L882.4 82.0 L883.2 81.4 L884.0 80.8 L884.8 80.3 L885.6 79.8 L886.4 79.2 L887.2 78.7 L888.0 78.2 L888.8 77.7 L889.6 77.2 L890.4 76.7 L891.2 76.2 L892.0 75.8 L892.8 75.3 L893.6 74.9 L894.4 74.4 L895.2 74.0 L895.9 73.6 L896.7 73.2 L897.5 72.8 L898.3 72.4 L899.1 72.0 L899.8 71.7 L900.6 71.3 L901.4 71.0 L902.2 70.7 L902.9 70.4 L903.7 70.1 L904.5 69.8 L905.3 69.5 L906.1 69.3 L906.8 69.0 L907.6 68.8 L908.4 68.6 L909.2 68.4 L910.0 68.2 L910.8 68.1 L911.6 68.0 L912.4 67.8 L913.2 67.7 L914.0 67.6 L914.8 67.6 L915.6 67.5 L916.4 67.5 L917.2 67.4 L918.1 67.4 L918.9 67.4 L919.8 67.5 L920.6 67.5 L921.5 67.6 L922.3 67.7 L923.2 67.8 L924.1 67.9 L925.0 68.0M727.2 241.9 L727.7 241.3 L728.2 240.6 L728.7 240.0 L729.2 239.3 L729.8 238.6 L730.3 238.0 L730.8 237.3 L731.3 236.7 L731.8 236.0 L732.4 235.3 L732.9 234.7 L733.4 234.0 L734.0 233.4 L734.5 232.7 L735.0 232.0 L735.6 231.4 L736.1 230.7 L736.7 230.1 L737.2 229.4 L737.8 228.7 L738.3 228.1 L738.9 227.4 L739.4 226.8 L740.0 226.1 L740.5 225.5 L741.1 224.8 L741.7 224.1 L742.2 223.5 L742.8 222.8 L743.3 222.2 L743.9 221.5 L744.5 220.9 L745.1 220.2 L745.6 219.5 L746.2 218.9 L746.8 218.2 L747.4 217.6 L748.0 216.9 L748.5 216.3 L749.1 215.6 L749.7 215.0 L750.3 214.3 L750.9 213.6 L751.5 213.0 L752.1 212.3 L752.7 211.7 L753.3 211.0 L753.9 210.4 L754.5 209.7 L755.1 209.1 L755.7 208.4 L756.3 207.8 L756.9 207.1 L757.5 206.5 L758.1 205.8 L758.7 205.2 L759.3 204.5 L759.9 203.9 L760.6 203.2 L761.2 202.6 L761.8 201.9 L762.4 201.3 L763.1 200.6 L763.7 200.0 L764.3 199.3 L764.9 198.7 L765.6 198.0 L766.2 197.4 L766.8 196.7 L767.5 196.1 L768.1 195.4 L768.7 194.8 L769.4 194.1 L770.0 193.5 L770.6 192.8 L771.3 192.2 L771.9 191.6 L772.6 190.9 L773.2 190.3 L773.9 189.6 L774.5 189.0 L775.2 188.3 L775.8 187.7 L776.5 187.1 L777.1 186.4 L777.8 185.8 L778.4 185.1 L779.1 184.5 L779.8 183.8 L780.4 183.2 L781.1 182.6 L781.7 181.9 L782.4 181.3 L783.1 180.6 L783.7 180.0 L784.4 179.4 L785.1 178.7 L785.8 178.1 L786.4 177.5 L787.1 176.8 L787.8 176.2 L788.4 175.6 L789.1 174.9 L789.8 174.3 L790.5 173.6 L791.1 173.0 L791.8 172.4 L792.5 171.7 L793.2 171.1 L793.9 170.5 L794.6 169.9 L795.2 169.2 L795.9 168.6 L796.6 168.0 L797.3 167.3 L798.0 166.7 L798.7 166.1 L799.4 165.5 L800.0 164.8 L800.7 164.2 L801.4 163.6 L802.1 163.0 L802.8 162.3 L803.5 161.7 L804.2 161.1 L804.9 160.5 L805.6 159.8 L806.3 159.2 L807.0 158.6 L807.7 158.0 L808.4 157.4 L809.1 156.7 L809.8 156.1 L810.5 155.5 L811.2 154.9 L811.9 154.3 L812.6 153.7 L813.3 153.0 L814.0 152.4 L814.7 151.8 L815.4 151.2 L816.1 150.6 L816.8 150.0 L817.5 149.4 L818.2 148.8 L818.9 148.2 L819.6 147.6 L820.3 146.9 L821.0 146.3 L821.8 145.7 L822.5 145.1 L823.2 144.5 L823.9 143.9 L824.6 143.3 L825.3 142.7 L826.0 142.1 L826.7 141.5 L827.4 140.9 L828.1 140.3 L828.8 139.7 L829.6 139.2 L830.3 138.6 L831.0 138.0 L831.7 137.4 L832.4 136.8 L833.1 136.2 L833.8 135.6 L834.5 135.0 L835.2 134.5 L835.9 133.9 L836.7 133.3 L837.4 132.7 L838.1 132.1 L838.8 131.6 L839.5 131.0 L840.2 130.4 L840.9 129.8 L841.6 129.3 L842.3 128.7 L843.0 128.1 L843.8 127.6 L844.5 127.0 L845.2 126.4 L845.9 125.9 L846.6 125.3 L847.3 124.7 L848.0 124.2 L848.7 123.6 L849.4 123.1 L850.1 122.5 L850.8 122.0 L851.5 121.4 L852.2 120.9 L852.9 120.3 L853.6 119.8 L854.3 119.2 L855.0 118.7 L855.7 118.2 L856.4 117.6 L857.1 117.1 L857.8 116.6 L858.5 116.0 L859.2 115.5 L859.9 115.0 L860.6 114.5 L861.3 113.9 L862.0 113.4 L862.7 112.9 L863.4 112.4 L864.1 111.9 L864.8 111.4 L865.5 110.9 L866.2 110.4 L866.9 109.9 L867.6 109.4 L868.3 108.9 L868.9 108.4 L869.6 107.9 L870.3 107.4 L871.0 106.9 L871.7 106.4 L872.4 106.0 L873.1 105.5 L873.7 105.0 L874.4 104.6 L875.1 104.1 L875.8 103.6 L876.5 103.2 L877.1 102.7 L877.8 102.3 L878.5 101.8 L879.2 101.4 L879.8 100.9 L880.5 100.5 L881.2 100.1 L881.8 99.6 L882.5 99.2 L883.2 98.8 L883.8 98.4 L884.5 98.0 L885.2 97.6 L885.8 97.2 L886.5 96.8 L887.2 96.4 L887.8 96.0 L888.5 95.6 L889.1 95.2 L889.8 94.9 L890.5 94.5 L891.1 94.1 L891.8 93.8 L892.4 93.4 L893.1 93.1 L893.7 92.7 L894.4 92.4 L895.0 92.1 L895.7 91.7 L896.3 91.4 L897.0 91.1M714.3 236.7 L714.7 236.3 L715.0 235.8 L715.4 235.4 L715.8 235.0 L716.1 234.5 L716.5 234.1 L716.9 233.7 L717.2 233.2 L717.6 232.8 L718.0 232.3 L718.3 231.9 L718.7 231.5 L719.1 231.0 L719.5 230.6 L719.8 230.1 L720.2 229.7 L720.6 229.3 L721.0 228.8 L721.4 228.4 L721.7 227.9 L722.1 227.5 L722.5 227.1 L722.9 226.6 L723.3 226.2 L723.7 225.8 L724.1 225.3 L724.4 224.9 L724.8 224.4 L725.2 224.0 L725.6 223.6 L726.0 223.1 L726.4 222.7 L726.8 222.2 L727.2 221.8 L727.6 221.4 L728.0 220.9 L728.4 220.5 L728.8 220.1 L729.2 219.6 L729.6 219.2 L730.0 218.7 L730.4 218.3 L730.8 217.9 L731.2 217.4 L731.6 217.0 L732.0 216.6 L732.4 216.1 L732.8 215.7 L733.2 215.3 L733.6 214.8 L734.0 214.4 L734.5 213.9 L734.9 213.5 L735.3 213.1 L735.7 212.6 L736.1 212.2 L736.5 211.8 L736.9 211.3 L737.4 210.9 L737.8 210.5 L738.2 210.0 L738.6 209.6 L739.0 209.2 L739.5 208.7 L739.9 208.3 L740.3 207.9 L740.7 207.4 L741.1 207.0 L741.6 206.5 L742.0 206.1 L742.4 205.7 L742.9 205.2 L743.3 204.8 L743.7 204.4 L744.1 203.9 L744.6 203.5 L745.0 203.1 L745.4 202.6 L745.9 202.2 L746.3 201.8 L746.7 201.3 L747.2 200.9 L747.6 200.5 L748.0 200.0 L748.5 199.6 L748.9 199.2 L749.4 198.7 L749.8 198.3 L750.2 197.9 L750.7 197.4 L751.1 197.0 L751.6 196.6 L752.0 196.2 L752.5 195.7 L752.9 195.3 L753.4 194.9 L753.8 194.4 L754.2 194.0 L754.7 193.6 L755.1 193.1 L755.6 192.7 L756.0 192.3 L756.5 191.8 L756.9 191.4 L757.4 191.0 L757.8 190.5 L758.3 190.1 L758.8 189.7 L759.2 189.3 L759.7 188.8 L760.1 188.4 L760.6 188.0 L761.0 187.5 L761.5 187.1 L762.0 186.7 L762.4 186.3 L762.9 185.8 L763.3 185.4 L763.8 185.0 L764.3 184.5 L764.7 184.1 L765.2 183.7 L765.6 183.3 L766.1 182.8 L766.6 182.4 L767.0 182.0 L767.5 181.6 L768.0 181.1 L768.4 180.7 L768.9 180.3 L769.4 179.8 L769.8 179.4 L770.3 179.0 L770.8 178.6 L771.3 178.1 L771.7 177.7 L772.2 177.3 L772.7 176.9 L773.1 176.4 L773.6 176.0 L774.1 175.6 L774.6 175.2 L775.0 174.7 L775.5 174.3 L776.0 173.9 L776.5 173.5 L777.0 173.0 L777.4 172.6 L777.9 172.2 L778.4 171.8 L778.9 171.4 L779.3 170.9 L779.8 170.5 L780.3 170.1 L780.8 169.7 L781.3 169.2 L781.8 168.8 L782.2 168.4 L782.7 168.0 L783.2 167.6 L783.7 167.1 L784.2 166.7 L784.7 166.3 L785.1 165.9 L785.6 165.5 L786.1 165.0 L786.6 164.6 L787.1 164.2 L787.6 163.8 L788.1 163.4 L788.6 163.0 L789.0 162.5 L789.5 162.1 L790.0 161.7 L790.5 161.3 L791.0 160.9 L791.5 160.4 L792.0 160.0 L792.5 159.6 L793.0 159.2 L793.5 158.8 L794.0 158.4 L794.4 158.0 L794.9 157.5 L795.4 157.1 L795.9 156.7 L796.4 156.3 L796.9 155.9 L797.4 155.5 L797.9 155.1 L798.4 154.6 L798.9 154.2 L799.4 153.8 L799.9 153.4 L800.4 153.0 L800.9 152.6 L801.4 152.2 L801.9 151.8 L802.4 151.4 L802.9 150.9 L803.4 150.5 L803.9 150.1 L804.4 149.7 L804.9 149.3 L805.4 148.9 L805.9 148.5 L806.4 148.1 L806.9 147.7 L807.4 147.3 L807.9 146.9 L808.4 146.5 L808.9 146.1 L809.4 145.7 L809.9 145.2 L810.4 144.8 L810.9 144.4 L811.4 144.0 L811.9 143.6 L812.4 143.2 L812.9 142.8 L813.4 142.4 L813.9 142.0 L814.4 141.6 L814.9 141.2 L815.4 140.8 L815.9 140.4 L816.4 140.0 L816.9 139.6 L817.4 139.2 L817.9 138.8 L818.4 138.4 L818.9 138.0 L819.4 137.6 L819.9 137.2 L820.4 136.8 L820.9 136.4 L821.4 136.1 L821.9 135.7 L822.4 135.3 L822.9 134.9 L823.4 134.5 L823.9 134.1 L824.4 133.7 L824.9 133.3 L825.5 132.9 L826.0 132.5 L826.5 132.1 L827.0 131.7 L827.5 131.4 L828.0 131.0 L828.5 130.6 L829.0 130.2 L829.5 129.8 L830.0 129.4 L830.5 129.0 L831.0 128.7 L831.5 128.3 L832.0 127.9 L832.5 127.5M728.0 244.6 L728.5 244.0 L729.0 243.5 L729.5 242.9 L730.1 242.3 L730.6 241.8 L731.1 241.2 L731.7 240.6 L732.2 240.1 L732.7 239.5 L733.3 239.0 L733.8 238.4 L734.4 237.8 L734.9 237.3 L735.4 236.7 L736.0 236.1 L736.5 235.6 L737.1 235.0 L737.6 234.5 L738.2 233.9 L738.7 233.4 L739.3 232.8 L739.8 232.2 L740.4 231.7 L740.9 231.1 L741.5 230.6 L742.1 230.0 L742.6 229.4 L743.2 228.9 L743.7 228.3 L744.3 227.8 L744.9 227.2 L745.4 226.7 L746.0 226.1 L746.6 225.5 L747.1 225.0 L747.7 224.4 L748.3 223.9 L748.9 223.3 L749.4 222.8 L750.0 222.2 L750.6 221.7 L751.2 221.1 L751.8 220.6 L752.3 220.0 L752.9 219.5 L753.5 218.9 L754.1 218.4 L754.7 217.8 L755.3 217.3 L755.9 216.7 L756.4 216.2 L757.0 215.6 L757.6 215.1 L758.2 214.5 L758.8 214.0 L759.4 213.4 L760.0 212.9 L760.6 212.3 L761.2 211.8 L761.8 211.2 L762.4 210.7 L763.0 210.1 L763.6 209.6 L764.2 209.0 L764.8 208.5 L765.4 207.9 L766.0 207.4 L766.6 206.9 L767.2 206.3 L767.8 205.8 L768.4 205.2 L769.1 204.7 L769.7 204.1 L770.3 203.6 L770.9 203.1 L771.5 202.5 L772.1 202.0 L772.7 201.4 L773.4 200.9 L774.0 200.4 L774.6 199.8 L775.2 199.3 L775.8 198.8 L776.4 198.2 L777.1 197.7 L777.7 197.1 L778.3 196.6 L778.9 196.1 L779.6 195.5 L780.2 195.0 L780.8 194.5 L781.4 193.9 L782.1 193.4 L782.7 192.9 L783.3 192.3 L784.0 191.8 L784.6 191.3 L785.2 190.8 L785.8 190.2 L786.5 189.7 L787.1 189.2 L787.7 188.6 L788.4 188.1 L789.0 187.6 L789.6 187.1 L790.3 186.5 L790.9 186.0 L791.6 185.5 L792.2 185.0 L792.8 184.5 L793.5 183.9 L794.1 183.4 L794.7 182.9 L795.4 182.4 L796.0 181.9 L796.7 181.3 L797.3 180.8 L798.0 180.3 L798.6 179.8 L799.2 179.3 L799.9 178.8 L800.5 178.2 L801.2 177.7 L801.8 177.2 L802.5 176.7 L803.1 176.2 L803.7 175.7 L804.4 175.2 L805.0 174.7 L805.7 174.2 L806.3 173.6 L807.0 173.1 L807.6 172.6 L808.3 172.1 L808.9 171.6 L809.6 171.1 L810.2 170.6 L810.9 170.1 L811.5 169.6 L812.2 169.1 L812.8 168.6 L813.5 168.1 L814.1 167.6 L814.8 167.1 L815.4 166.6 L816.1 166.1 L816.7 165.7 L817.4 165.2 L818.0 164.7 L818.7 164.2 L819.3 163.7 L820.0 163.2 L820.6 162.7 L821.3 162.2 L821.9 161.7 L822.6 161.3 L823.2 160.8 L823.9 160.3 L824.5 159.8 L825.2 159.3 L825.8 158.9 L826.5 158.4 L827.1 157.9 L827.8 157.4 L828.4 157.0 L829.1 156.5 L829.7 156.0 L830.4 155.5 L831.0 155.1 L831.7 154.6 L832.3 154.1 L833.0 153.7 L833.6 153.2 L834.3 152.7 L834.9 152.3 L835.6 151.8 L836.2 151.4 L836.9 150.9 L837.5 150.4 L838.1 150.0 L838.8 149.5 L839.4 149.1 L840.1 148.6 L840.7 148.2 L841.4 147.7 L842.0 147.3 L842.7 146.8 L843.3 146.4 L844.0 146.0 L844.6 145.5 L845.3 145.1 L845.9 144.6 L846.5 144.2 L847.2 143.8 L847.8 143.3 L848.5 142.9 L849.1 142.5 L849.8 142.0 L850.4 141.6 L851.0 141.2 L851.7 140.8 L852.3 140.3 L853.0 139.9 L853.6 139.5 L854.2 139.1 L854.9 138.7 L855.5 138.3 L856.2 137.9 L856.8 137.5 L857.4 137.0 L858.1 136.6 L858.7 136.2 L859.3 135.8 L860.0 135.4 L860.6 135.0 L861.2 134.7 L861.9 134.3 L862.5 133.9 L863.1 133.5 L863.8 133.1 L864.4 132.7 L865.0 132.3 L865.7 132.0 L866.3 131.6 L866.9 131.2 L867.6 130.8 L868.2 130.5 L868.8 130.1 L869.4 129.7 L870.1 129.4 L870.7 129.0 L871.3 128.6 L871.9 128.3 L872.6 127.9 L873.2 127.6 L873.8 127.2 L874.4 126.9 L875.1 126.5 L875.7 126.2 L876.3 125.9 L876.9 125.5 L877.5 125.2 L878.2 124.9 L878.8 124.5 L879.4 124.2 L880.0 123.9 L880.6 123.6 L881.3 123.3 L881.9 123.0 L882.5 122.6 L883.1 122.3 L883.7 122.0 L884.3 121.7 L884.9 121.4 L885.6 121.1 L886.2 120.9 L886.8 120.6 L887.4 120.3 L888.0 120.0M715.2 235.5 L715.9 234.9 L716.5 234.4 L717.1 233.8 L717.7 233.2 L718.3 232.7 L719.0 232.1 L719.6 231.5 L720.2 231.0 L720.9 230.4 L721.5 229.8 L722.1 229.3 L722.8 228.7 L723.4 228.1 L724.0 227.6 L724.7 227.0 L725.3 226.4 L725.9 225.9 L726.6 225.3 L727.2 224.7 L727.9 224.2 L728.5 223.6 L729.2 223.1 L729.8 222.5 L730.5 221.9 L731.1 221.4 L731.8 220.8 L732.4 220.2 L733.1 219.7 L733.8 219.1 L734.4 218.6 L735.1 218.0 L735.7 217.4 L736.4 216.9 L737.1 216.3 L737.7 215.8 L738.4 215.2 L739.1 214.7 L739.7 214.1 L740.4 213.5 L741.1 213.0 L741.8 212.4 L742.4 211.9 L743.1 211.3 L743.8 210.8 L744.5 210.2 L745.1 209.7 L745.8 209.1 L746.5 208.6 L747.2 208.0 L747.9 207.5 L748.5 206.9 L749.2 206.4 L749.9 205.8 L750.6 205.3 L751.3 204.7 L752.0 204.2 L752.7 203.6 L753.4 203.1 L754.1 202.5 L754.7 202.0 L755.4 201.4 L756.1 200.9 L756.8 200.4 L757.5 199.8 L758.2 199.3 L758.9 198.7 L759.6 198.2 L760.3 197.7 L761.0 197.1 L761.7 196.6 L762.4 196.0 L763.1 195.5 L763.8 195.0 L764.5 194.4 L765.2 193.9 L765.9 193.3 L766.7 192.8 L767.4 192.3 L768.1 191.7 L768.8 191.2 L769.5 190.7 L770.2 190.2 L770.9 189.6 L771.6 189.1 L772.3 188.6 L773.0 188.0 L773.8 187.5 L774.5 187.0 L775.2 186.5 L775.9 185.9 L776.6 185.4 L777.3 184.9 L778.1 184.4 L778.8 183.8 L779.5 183.3 L780.2 182.8 L780.9 182.3 L781.6 181.8 L782.4 181.2 L783.1 180.7 L783.8 180.2 L784.5 179.7 L785.3 179.2 L786.0 178.7 L786.7 178.1 L787.4 177.6 L788.1 177.1 L788.9 176.6 L789.6 176.1 L790.3 175.6 L791.0 175.1 L791.8 174.6 L792.5 174.1 L793.2 173.6 L793.9 173.1 L794.7 172.6 L795.4 172.1 L796.1 171.6 L796.8 171.1 L797.6 170.6 L798.3 170.1 L799.0 169.6 L799.7 169.1 L800.5 168.6 L801.2 168.1 L801.9 167.6 L802.6 167.1 L803.4 166.6 L804.1 166.1 L804.8 165.6 L805.5 165.2 L806.3 164.7 L807.0 164.2 L807.7 163.7 L808.4 163.2 L809.2 162.7 L809.9 162.3 L810.6 161.8 L811.4 161.3 L812.1 160.8 L812.8 160.4 L813.5 159.9 L814.3 159.4 L815.0 158.9 L815.7 158.5 L816.4 158.0 L817.2 157.5 L817.9 157.1 L818.6 156.6 L819.3 156.2 L820.0 155.7 L820.8 155.2 L821.5 154.8 L822.2 154.3 L822.9 153.9 L823.7 153.4 L824.4 153.0 L825.1 152.5 L825.8 152.1 L826.5 151.6 L827.3 151.2 L828.0 150.7 L828.7 150.3 L829.4 149.9 L830.1 149.4 L830.8 149.0 L831.6 148.6 L832.3 148.1 L833.0 147.7 L833.7 147.3 L834.4 146.8 L835.1 146.4 L835.9 146.0 L836.6 145.6 L837.3 145.2 L838.0 144.7 L838.7 144.3 L839.4 143.9 L840.1 143.5 L840.8 143.1 L841.5 142.7 L842.2 142.3 L843.0 141.9 L843.7 141.5 L844.4 141.1 L845.1 140.7 L845.8 140.3 L846.5 139.9 L847.2 139.5 L847.9 139.1 L848.6 138.7 L849.3 138.4 L850.0 138.0 L850.7 137.6 L851.4 137.2 L852.1 136.8 L852.8 136.5 L853.5 136.1 L854.2 135.7 L854.9 135.4 L855.6 135.0 L856.3 134.7 L857.0 134.3 L857.6 133.9 L858.3 133.6 L859.0 133.2 L859.7 132.9 L860.4 132.6 L861.1 132.2 L861.8 131.9 L862.5 131.5 L863.1 131.2 L863.8 130.9 L864.5 130.6 L865.2 130.2 L865.9 129.9 L866.6 129.6 L867.2 129.3 L867.9 129.0 L868.6 128.7 L869.3 128.4 L870.0 128.1 L870.6 127.8 L871.3 127.5 L872.0 127.2 L872.7 126.9 L873.3 126.6 L874.0 126.3 L874.7 126.0 L875.3 125.8 L876.0 125.5 L876.7 125.2 L877.3 124.9 L878.0 124.7 L878.7 124.4 L879.3 124.2 L880.0 123.9 L880.7 123.7 L881.3 123.4 L882.0 123.2 L882.7 122.9 L883.3 122.7 L884.0 122.5 L884.7 122.2 L885.3 122.0 L886.0 121.8 L886.6 121.6 L887.3 121.4 L887.9 121.2 L888.6 121.0 L889.3 120.8 L889.9 120.6 L890.6 120.4 L891.2 120.2 L891.9 120.0 L892.5 119.8 L893.2 119.6 L893.8 119.5 L894.5 119.3M726.5 249.3 L727.5 248.6 L728.4 247.9 L729.3 247.2 L730.2 246.5 L731.1 245.8 L732.0 245.1 L733.0 244.4 L733.9 243.7 L734.8 243.0 L735.7 242.3 L736.7 241.6 L737.6 240.9 L738.5 240.2 L739.5 239.5 L740.4 238.8 L741.3 238.1 L742.3 237.4 L743.2 236.7 L744.2 236.0 L745.1 235.4 L746.0 234.7 L747.0 234.0 L747.9 233.3 L748.9 232.6 L749.8 231.9 L750.8 231.3 L751.8 230.6 L752.7 229.9 L753.7 229.2 L754.6 228.6 L755.6 227.9 L756.6 227.2 L757.5 226.5 L758.5 225.9 L759.5 225.2 L760.4 224.5 L761.4 223.9 L762.4 223.2 L763.3 222.5 L764.3 221.9 L765.3 221.2 L766.3 220.6 L767.2 219.9 L768.2 219.2 L769.2 218.6 L770.2 217.9 L771.1 217.3 L772.1 216.6 L773.1 216.0 L774.1 215.4 L775.1 214.7 L776.0 214.1 L777.0 213.4 L778.0 212.8 L779.0 212.1 L780.0 211.5 L781.0 210.9 L782.0 210.2 L783.0 209.6 L783.9 209.0 L784.9 208.4 L785.9 207.7 L786.9 207.1 L787.9 206.5 L788.9 205.9 L789.9 205.3 L790.9 204.7 L791.9 204.0 L792.9 203.4 L793.9 202.8 L794.8 202.2 L795.8 201.6 L796.8 201.0 L797.8 200.4 L798.8 199.8 L799.8 199.2 L800.8 198.6 L801.8 198.0 L802.8 197.5 L803.8 196.9 L804.8 196.3 L805.8 195.7 L806.8 195.1 L807.8 194.6 L808.8 194.0 L809.8 193.4 L810.7 192.8 L811.7 192.3 L812.7 191.7 L813.7 191.1 L814.7 190.6 L815.7 190.0 L816.7 189.5 L817.7 188.9 L818.7 188.4 L819.7 187.8 L820.7 187.3 L821.7 186.8 L822.7 186.2 L823.6 185.7 L824.6 185.2 L825.6 184.6 L826.6 184.1 L827.6 183.6 L828.6 183.1 L829.6 182.6 L830.6 182.1 L831.5 181.5 L832.5 181.0 L833.5 180.5 L834.5 180.0 L835.5 179.5 L836.5 179.1 L837.4 178.6 L838.4 178.1 L839.4 177.6 L840.4 177.1 L841.4 176.7 L842.3 176.2 L843.3 175.7 L844.3 175.3 L845.3 174.8 L846.2 174.3 L847.2 173.9 L848.2 173.4 L849.2 173.0 L850.1 172.6 L851.1 172.1 L852.1 171.7 L853.0 171.3 L854.0 170.8 L855.0 170.4 L855.9 170.0 L856.9 169.6 L857.9 169.2 L858.8 168.8 L859.8 168.4 L860.8 168.0 L861.7 167.6 L862.7 167.2 L863.6 166.8 L864.6 166.4 L865.6 166.1 L866.5 165.7 L867.5 165.3 L868.4 165.0 L869.4 164.6 L870.3 164.3 L871.3 163.9 L872.2 163.6 L873.2 163.2 L874.1 162.9 L875.1 162.6 L876.0 162.3 L877.0 161.9 L877.9 161.6 L878.9 161.3 L879.8 161.0 L880.8 160.7 L881.7 160.4 L882.7 160.1 L883.6 159.9 L884.6 159.6 L885.5 159.3 L886.4 159.1 L887.4 158.8 L888.3 158.5 L889.3 158.3 L890.2 158.0 L891.2 157.8 L892.1 157.6 L893.0 157.3 L894.0 157.1 L894.9 156.9 L895.9 156.7 L896.8 156.5 L897.7 156.3 L898.7 156.1 L899.6 155.9 L900.5 155.7 L901.5 155.5 L902.4 155.4 L903.4 155.2 L904.3 155.0 L905.2 154.9 L906.2 154.7 L907.1 154.6 L908.1 154.4 L909.0 154.3 L909.9 154.2 L910.9 154.1 L911.8 154.0 L912.8 153.9 L913.7 153.7 L914.6 153.7 L915.6 153.6 L916.5 153.5 L917.5 153.4 L918.4 153.3 L919.3 153.3 L920.3 153.2 L921.2 153.2 L922.2 153.1 L923.1 153.1 L924.1 153.0 L925.0 153.0 L926.0 153.0 L926.9 153.0 L927.9 152.9 L928.8 152.9 L929.8 152.9 L930.7 153.0 L931.7 153.0 L932.7 153.0 L933.6 153.0 L934.6 153.0 L935.5 153.1 L936.5 153.1 L937.5 153.2 L938.4 153.2 L939.4 153.3 L940.4 153.4 L941.3 153.4 L942.3 153.5 L943.3 153.6 L944.3 153.7 L945.2 153.8 L946.2 153.9 L947.2 154.0 L948.2 154.1 L949.2 154.3 L950.1 154.4 L951.1 154.5 L952.1 154.7 L953.1 154.8 L954.1 155.0 L955.1 155.1 L956.1 155.3 L957.1 155.4 L958.1 155.6 L959.1 155.8 L960.1 156.0 L961.1 156.2 L962.1 156.4 L963.1 156.6 L964.1 156.8 L965.1 157.0 L966.2 157.2 L967.2 157.4 L968.2 157.7 L969.2 157.9 L970.3 158.2 L971.3 158.4 L972.3 158.7 L973.3 158.9 L974.4 159.2 L975.4 159.4 L976.5 159.7 L977.5 160.0M734.4 230.9 L734.3 230.2 L734.2 229.4 L734.1 228.7 L733.9 227.9 L733.8 227.1 L733.7 226.4 L733.6 225.7 L733.5 224.9 L733.4 224.2 L733.3 223.4 L733.2 222.7 L733.1 221.9 L733.0 221.2 L732.9 220.4 L732.8 219.7 L732.7 218.9 L732.6 218.2 L732.5 217.5 L732.5 216.7 L732.4 216.0 L732.3 215.2 L732.2 214.5 L732.1 213.8 L732.1 213.0 L732.0 212.3 L731.9 211.6 L731.9 210.8 L731.8 210.1 L731.7 209.4 L731.7 208.6 L731.6 207.9 L731.6 207.2 L731.5 206.5 L731.5 205.7 L731.4 205.0 L731.4 204.3 L731.3 203.6 L731.3 202.8 L731.2 202.1 L731.2 201.4 L731.2 200.7 L731.1 200.0 L731.1 199.3 L731.0 198.5 L731.0 197.8 L731.0 197.1 L731.0 196.4 L730.9 195.7 L730.9 195.0 L730.9 194.3 L730.9 193.6 L730.8 192.9 L730.8 192.2 L730.8 191.5 L730.8 190.8 L730.8 190.1 L730.7 189.4 L730.7 188.7 L730.7 188.0 L730.7 187.3 L730.7 186.6 L730.7 185.9 L730.7 185.2 L730.7 184.5 L730.7 183.8 L730.7 183.1 L730.7 182.4 L730.7 181.8 L730.7 181.1 L730.7 180.4 L730.7 179.7 L730.7 179.1 L730.7 178.4 L730.7 177.7 L730.7 177.0 L730.7 176.4 L730.7 175.7 L730.7 175.0 L730.7 174.4 L730.7 173.7 L730.7 173.1 L730.7 172.4 L730.7 171.7 L730.7 171.1 L730.7 170.4 L730.7 169.8 L730.8 169.1 L730.8 168.5 L730.8 167.9 L730.8 167.2 L730.8 166.6 L730.8 165.9 L730.8 165.3 L730.8 164.7 L730.8 164.0 L730.8 163.4 L730.8 162.8 L730.8 162.2 L730.8 161.6 L730.8 160.9 L730.8 160.3 L730.8 159.7 L730.8 159.1 L730.8 158.5 L730.8 157.9 L730.8 157.3 L730.8 156.7 L730.8 156.1 L730.8 155.5 L730.8 154.9 L730.8 154.3 L730.8 153.8 L730.8 153.2 L730.8 152.6 L730.7 152.0 L730.7 151.5 L730.7 150.9 L730.7 150.3 L730.6 149.8 L730.6 149.2 L730.6 148.6 L730.5 148.1 L730.5 147.5 L730.5 147.0 L730.4 146.5 L730.4 145.9 L730.3 145.4 L730.3 144.9 L730.2 144.3 L730.2 143.8 L730.1 143.3 L730.0 142.8 L730.0 142.3 L729.9 141.8 L729.8 141.3 L729.7 140.8 L729.6 140.3 L729.6 139.8 L729.5 139.3 L729.4 138.8 L729.2 138.3 L729.1 137.9 L729.0 137.4 L728.9 136.9 L728.8 136.5 L728.6 136.0 L728.5 135.6 L728.4 135.1 L728.2 134.7 L728.0 134.3 L727.9 133.8 L727.7 133.4 L727.5 133.0 L727.4 132.6 L727.2 132.2 L727.0 131.8 L726.8 131.4 L726.6 131.0 L726.3 130.6 L726.1 130.2 L725.9 129.9 L725.6 129.5 L725.4 129.1 L725.1 128.8 L724.8 128.4 L724.6 128.1 L724.3 127.7 L724.0 127.4 L723.7 127.1 L723.4 126.8 L723.0 126.4 L722.7 126.1 L722.4 125.8 L722.0 125.5 L721.6 125.3 L721.3 125.0 L720.9 124.7 L720.5 124.4 L720.1 124.2 L719.7 123.9 L719.2 123.7 L718.8 123.4 L718.3 123.2 L717.9 123.0 L717.4 122.7 L716.9 122.5 L716.4 122.3 L715.9 122.1 L715.3 121.9 L714.8 121.8 L714.3 121.6 L713.7 121.4 L713.1 121.3 L712.5 121.1 L711.9 121.0 L711.3 120.8 L710.6 120.7 L710.0 120.6 L709.3 120.4 L708.6 120.3 L708.0 120.2 L707.2 120.1 L706.5 120.1 L705.8 120.0 L705.0 119.9 L704.3 119.8 L703.5 119.8 L702.7 119.7 L701.9 119.7 L701.0 119.7 L700.2 119.7 L699.3 119.6 L698.5 119.6 L697.6 119.6 L696.7 119.6 L695.7 119.7 L694.8 119.7 L693.8 119.7 L692.9 119.8 L691.9 119.8 L690.9 119.9 L689.8 119.9 L688.8 120.0 L687.7 120.1 L686.7 120.2 L685.6 120.3 L684.5 120.4 L683.4 120.5 L682.2 120.6 L681.1 120.7 L679.9 120.9 L678.7 121.0 L677.5 121.1 L676.3 121.3 L675.1 121.5 L673.8 121.6 L672.6 121.8 L671.3 122.0 L670.0 122.2 L668.7 122.4 L667.3 122.6 L666.0 122.8 L664.6 123.0 L663.2 123.3 L661.9 123.5 L660.4 123.7 L659.0 124.0 L657.6 124.2 L656.1 124.5 L654.7 124.8 L653.2 125.1 L651.7 125.3 L650.2 125.6 L648.6 125.9 L647.1 126.2 L645.5 126.5 L644.0 126.9 L642.4 127.2 L640.8 127.5M734.6 235.7 L734.9 234.7 L735.1 233.8 L735.4 232.8 L735.6 231.8 L735.9 230.8 L736.2 229.8 L736.4 228.9 L736.7 227.9 L737.0 226.9 L737.3 225.9 L737.6 225.0 L737.9 224.0 L738.2 223.0 L738.5 222.0 L738.8 221.0 L739.1 220.1 L739.4 219.1 L739.7 218.1 L740.0 217.1 L740.4 216.2 L740.7 215.2 L741.0 214.2 L741.4 213.2 L741.7 212.3 L742.1 211.3 L742.4 210.3 L742.8 209.3 L743.2 208.4 L743.5 207.4 L743.9 206.4 L744.3 205.4 L744.7 204.5 L745.1 203.5 L745.4 202.5 L745.8 201.5 L746.2 200.6 L746.6 199.6 L747.0 198.6 L747.5 197.6 L747.9 196.7 L748.3 195.7 L748.7 194.7 L749.1 193.7 L749.6 192.8 L750.0 191.8 L750.4 190.8 L750.9 189.9 L751.3 188.9 L751.8 187.9 L752.2 186.9 L752.7 186.0 L753.2 185.0 L753.6 184.0 L754.1 183.1 L754.6 182.1 L755.0 181.1 L755.5 180.1 L756.0 179.2 L756.5 178.2 L757.0 177.2 L757.5 176.3 L758.0 175.3 L758.5 174.3 L759.0 173.4 L759.5 172.4 L760.0 171.4 L760.5 170.5 L761.1 169.5 L761.6 168.5 L762.1 167.6 L762.7 166.6 L763.2 165.6 L763.7 164.7 L764.3 163.7 L764.8 162.7 L765.4 161.8 L765.9 160.8 L766.5 159.8 L767.0 158.9 L767.6 157.9 L768.2 157.0 L768.7 156.0 L769.3 155.0 L769.9 154.1 L770.5 153.1 L771.0 152.2 L771.6 151.2 L772.2 150.2 L772.8 149.3 L773.4 148.3 L774.0 147.4 L774.6 146.4 L775.2 145.5 L775.8 144.5 L776.4 143.5 L777.0 142.6 L777.6 141.6 L778.2 140.7 L778.9 139.7 L779.5 138.8 L780.1 137.8 L780.7 136.9 L781.4 135.9 L782.0 135.0 L782.6 134.0 L783.3 133.1 L783.9 132.1 L784.5 131.2 L785.2 130.2 L785.8 129.3 L786.5 128.4 L787.1 127.4 L787.8 126.5 L788.4 125.5 L789.1 124.6 L789.7 123.7 L790.4 122.7 L791.0 121.8 L791.7 120.9 L792.4 119.9 L793.0 119.0 L793.7 118.1 L794.4 117.1 L795.0 116.2 L795.7 115.3 L796.4 114.3 L797.0 113.4 L797.7 112.5 L798.4 111.6 L799.0 110.7 L799.7 109.7 L800.4 108.8 L801.1 107.9 L801.7 107.0 L802.4 106.1 L803.1 105.2 L803.8 104.3 L804.4 103.4 L805.1 102.5 L805.8 101.6 L806.5 100.7 L807.1 99.8 L807.8 98.9 L808.5 98.0 L809.1 97.1 L809.8 96.2 L810.5 95.3 L811.1 94.4 L811.8 93.6 L812.5 92.7 L813.1 91.8 L813.8 91.0 L814.4 90.1 L815.1 89.2 L815.7 88.4 L816.4 87.5 L817.0 86.7 L817.6 85.9 L818.2 85.0 L818.9 84.2 L819.5 83.4 L820.1 82.5 L820.7 81.7 L821.3 80.9 L821.9 80.1 L822.5 79.3 L823.0 78.5 L823.6 77.7 L824.2 77.0 L824.7 76.2 L825.2 75.4 L825.8 74.7 L826.3 73.9 L826.8 73.2 L827.2 72.5 L827.7 71.8 L828.1 71.1 L828.6 70.4 L829.0 69.7 L829.4 69.0 L829.7 68.4 L830.1 67.7 L830.4 67.1 L830.7 66.5 L831.0 65.9 L831.2 65.3 L831.4 64.8 L831.6 64.2 L831.7 63.7 L831.9 63.2 L831.9 62.7 L831.9 62.3 L831.9 61.8 L831.9 61.4 L831.8 61.0 L831.6 60.6 L831.4 60.3 L831.1 60.0 L830.8 59.7 L830.4 59.4 L830.0 59.2 L829.5 59.0 L828.9 58.8 L828.2 58.6 L827.5 58.5 L826.7 58.4 L825.9 58.4 L824.9 58.4 L823.9 58.4 L822.8 58.4 L821.6 58.5 L820.4 58.6 L819.1 58.7 L817.7 58.9 L816.2 59.1 L814.6 59.3 L813.0 59.5 L811.3 59.8 L809.5 60.1 L807.6 60.5 L805.7 60.8 L803.7 61.2 L801.6 61.6 L799.5 62.0 L797.2 62.5 L795.0 63.0 L792.7 63.5 L790.3 64.0 L787.8 64.5 L785.3 65.1 L782.8 65.6 L780.2 66.2M1025.5 66.8 L1026.6 67.4 L1027.8 68.1 L1029.0 68.7 L1030.2 69.4 L1031.4 70.1 L1032.7 70.7 L1034.0 71.4 L1035.4 72.2 L1036.8 72.9 L1038.2 73.6 L1039.6 74.3 L1041.1 75.1 L1042.6 75.8 L1044.1 76.6 L1045.6 77.4 L1047.1 78.2 L1048.7 78.9 L1050.2 79.7 L1051.8 80.5 L1053.4 81.3 L1055.1 82.2 L1056.7 83.0 L1058.3 83.8 L1060.0 84.6 L1061.6 85.5 L1063.3 86.3" fill="none" stroke="#dd16ff" stroke-width="1.39" stroke-dasharray="1.39 2.29"/>
<path d="M650.0 265.9 L650.6 264.8 L651.3 263.6 L651.9 262.5 L652.6 261.4 L653.2 260.3 L653.9 259.2 L654.6 258.0 L655.3 256.9 L656.0 255.8 L656.7 254.7 L657.5 253.5 L658.2 252.4 L659.0 251.3 L659.7 250.2 L660.5 249.1 L661.2 247.9 L662.0 246.8 L662.8 245.7 L663.6 244.6 L664.4 243.5 L665.2 242.3 L666.0 241.2 L666.9 240.1 L667.7 239.0 L668.6 237.9 L669.4 236.8 L670.3 235.6 L671.1 234.5 L672.0 233.4 L672.9 232.3 L673.8 231.2 L674.7 230.0 L675.6 228.9 L676.5 227.8 L677.5 226.7 L678.4 225.6 L679.4 224.4 L680.3 223.3 L681.3 222.2 L682.2 221.1 L683.2 220.0 L684.2 218.9 L685.2 217.7 L686.2 216.6 L687.2 215.5 L688.2 214.4 L689.2 213.3 L690.3 212.2 L691.3 211.0 L692.3 209.9 L693.4 208.8 L694.5 207.7 L695.5 206.6 L696.6 205.5 L697.7 204.3 L698.8 203.2 L699.9 202.1 L701.0 201.0 L702.1 199.9 L703.2 198.8 L704.3 197.7 L705.4 196.5 L706.6 195.4 L707.7 194.3 L708.9 193.2 L710.0 192.1 L711.2 191.0 L712.4 189.9 L713.5 188.8 L714.7 187.6 L715.9 186.5 L717.1 185.4 L718.3 184.3 L719.5 183.2 L720.7 182.1 L722.0 181.0 L723.2 179.9 L724.4 178.7 L725.7 177.6 L726.9 176.5 L728.2 175.4 L729.4 174.3 L730.7 173.2 L731.9 172.1 L733.2 171.0 L734.5 169.9 L735.8 168.8 L737.1 167.7 L738.4 166.6 L739.7 165.4 L741.0 164.3 L742.3 163.2 L743.6 162.1 L744.9 161.0 L746.3 159.9 L747.6 158.8 L748.9 157.7 L750.3 156.6 L751.6 155.5 L753.0 154.4 L754.3 153.3 L755.7 152.2 L757.1 151.1 L758.4 150.0 L759.8 148.9 L761.2 147.8 L762.6 146.7 L764.0 145.6 L765.4 144.5 L766.8 143.4 L768.2 142.3 L769.6 141.2 L771.0 140.1 L772.4 139.0 L773.8 137.9 L775.2 136.8 L776.6 135.7 L778.1 134.7 L779.5 133.6 L780.9 132.5 L782.4 131.4 L783.8 130.3 L785.3 129.2 L786.7 128.1 L788.2 127.0 L789.6 126.0 L791.1 124.9 L792.5 123.8 L794.0 122.7 L795.4 121.6 L796.9 120.6 L798.4 119.5 L799.8 118.4 L801.3 117.3 L802.8 116.3 L804.3 115.2 L805.7 114.1 L807.2 113.0 L808.7 112.0 L810.2 110.9 L811.7 109.8 L813.1 108.8 L814.6 107.7 L816.1 106.7 L817.6 105.6 L819.1 104.6 L820.6 103.5 L822.1 102.5 L823.5 101.4 L825.0 100.4 L826.5 99.3 L828.0 98.3 L829.5 97.2 L831.0 96.2 L832.5 95.2 L833.9 94.2 L835.4 93.1 L836.9 92.1 L838.4 91.1 L839.9 90.1 L841.3 89.1 L842.8 88.1 L844.3 87.1 L845.8 86.1 L847.2 85.1 L848.7 84.1 L850.1 83.1 L851.6 82.1 L853.0 81.2 L854.5 80.2 L855.9 79.3 L857.4 78.3 L858.8 77.4 L860.2 76.4 L861.6 75.5 L863.1 74.6 L864.5 73.7 L865.9 72.8 L867.3 71.9 L868.6 71.0 L870.0 70.2 L871.4 69.3 L872.7 68.5 L874.1 67.7 L875.4 66.9 L876.8 66.1 L878.1 65.3 L879.4 64.6 L880.7 63.8 L882.0 63.1 L883.2 62.4 L884.5 61.7 L885.8 61.1 L887.0 60.5 L888.2 59.9 L889.4 59.3 L890.6 58.8 L891.8 58.3 L893.0 57.8 L894.2 57.4 L895.3 57.0 L896.5 56.6 L897.6 56.3 L898.8 56.0 L899.9 55.8 L901.0 55.6 L902.1 55.4 L903.3 55.3 L904.4 55.3 L905.5 55.3 L906.7 55.3 L907.8 55.4 L909.0 55.5 L910.1 55.6 L911.3 55.8 L912.5 56.1 L913.7 56.4 L914.9 56.7 L916.1 57.1 L917.4 57.5 L918.7 57.9 L920.0 58.4 L921.3 58.9 L922.6 59.4 L923.9 60.0 L925.3 60.6 L926.7 61.2 L928.1 61.9 L929.5 62.6 L930.9 63.3 L932.3 64.0 L933.8 64.7 L935.3 65.5 L936.8 66.3 L938.3 67.1 L939.8 67.9 L941.3 68.7 L942.9 69.5 L944.4 70.4 L946.0 71.2 L947.6 72.1 L949.2 73.0 L950.8 73.9 L952.4 74.8 L954.0 75.7 L955.6 76.6 L957.2 77.6 L958.9 78.5 L960.5 79.5 L962.2 80.4 L963.8 81.4 L965.5 82.4 L967.1 83.3 L968.8 84.3 L970.5 85.3 L972.1 86.3 L973.8 87.3 L975.5 88.3 L977.2 89.3M642.3 258.5 L643.2 257.7 L644.1 256.9 L645.0 256.1 L645.9 255.3 L646.8 254.5 L647.7 253.7 L648.7 252.9 L649.6 252.1 L650.5 251.3 L651.4 250.5 L652.4 249.7 L653.3 248.9 L654.2 248.1 L655.2 247.3 L656.1 246.5 L657.1 245.7 L658.0 244.9 L659.0 244.1 L660.0 243.4 L660.9 242.6 L661.9 241.8 L662.9 241.0 L663.9 240.2 L664.9 239.4 L665.9 238.6 L666.9 237.8 L667.9 237.0 L668.9 236.2 L669.9 235.4 L670.9 234.7 L671.9 233.9 L672.9 233.1 L673.9 232.3 L674.9 231.5 L676.0 230.7 L677.0 230.0 L678.0 229.2 L679.1 228.4 L680.1 227.6 L681.2 226.8 L682.2 226.1 L683.2 225.3 L684.3 224.5 L685.4 223.7 L686.4 223.0 L687.5 222.2 L688.5 221.4 L689.6 220.6 L690.7 219.9 L691.8 219.1 L692.8 218.3 L693.9 217.6 L695.0 216.8 L696.1 216.0 L697.2 215.3 L698.3 214.5 L699.4 213.7 L700.5 213.0 L701.6 212.2 L702.7 211.5 L703.8 210.7 L704.9 209.9 L706.0 209.2 L707.1 208.4 L708.2 207.7 L709.3 206.9 L710.4 206.2 L711.6 205.4 L712.7 204.7 L713.8 203.9 L714.9 203.2 L716.1 202.4 L717.2 201.7 L718.3 201.0 L719.5 200.2 L720.6 199.5 L721.7 198.7 L722.9 198.0 L724.0 197.3 L725.2 196.5 L726.3 195.8 L727.5 195.1 L728.6 194.3 L729.8 193.6 L730.9 192.9 L732.1 192.2 L733.2 191.4 L734.4 190.7 L735.5 190.0 L736.7 189.3 L737.8 188.6 L739.0 187.9 L740.2 187.2 L741.3 186.4 L742.5 185.7 L743.6 185.0 L744.8 184.3 L746.0 183.6 L747.1 182.9 L748.3 182.2 L749.5 181.5 L750.6 180.8 L751.8 180.1 L753.0 179.5 L754.1 178.8 L755.3 178.1 L756.5 177.4 L757.7 176.7 L758.8 176.0 L760.0 175.4 L761.2 174.7 L762.3 174.0 L763.5 173.4 L764.7 172.7 L765.8 172.0 L767.0 171.4 L768.2 170.7 L769.4 170.0 L770.5 169.4 L771.7 168.7 L772.9 168.1 L774.0 167.4 L775.2 166.8 L776.4 166.2 L777.5 165.5 L778.7 164.9 L779.9 164.3 L781.0 163.6 L782.2 163.0 L783.4 162.4 L784.5 161.8 L785.7 161.1 L786.8 160.5 L788.0 159.9 L789.2 159.3 L790.3 158.7 L791.5 158.1 L792.6 157.5 L793.8 156.9 L794.9 156.3 L796.1 155.7 L797.2 155.2 L798.4 154.6 L799.5 154.0 L800.7 153.4 L801.8 152.9 L802.9 152.3 L804.1 151.7 L805.2 151.2 L806.3 150.6 L807.5 150.1 L808.6 149.5 L809.7 149.0 L810.9 148.5 L812.0 147.9 L813.1 147.4 L814.2 146.9 L815.4 146.4 L816.5 145.9 L817.6 145.4 L818.7 144.9 L819.8 144.4 L820.9 143.9 L822.0 143.4 L823.1 142.9 L824.2 142.4 L825.3 141.9 L826.4 141.5 L827.5 141.0 L828.6 140.6 L829.7 140.1 L830.8 139.7 L831.9 139.2 L832.9 138.8 L834.0 138.3 L835.1 137.9 L836.2 137.5 L837.2 137.1 L838.3 136.7 L839.4 136.3 L840.4 135.9 L841.5 135.5 L842.5 135.1 L843.6 134.7 L844.6 134.4 L845.7 134.0 L846.7 133.6 L847.8 133.3 L848.8 132.9 L849.8 132.6 L850.9 132.3 L851.9 131.9 L852.9 131.6 L853.9 131.3 L855.0 131.0 L856.0 130.7 L857.0 130.4 L858.0 130.1 L859.0 129.9 L860.0 129.6 L861.0 129.3 L862.0 129.1 L863.0 128.8 L864.0 128.6 L865.0 128.3 L866.0 128.1 L867.0 127.9 L868.0 127.7 L869.0 127.5 L870.0 127.3 L871.0 127.1 L871.9 126.9 L872.9 126.8 L873.9 126.6 L874.9 126.4 L875.8 126.3 L876.8 126.2 L877.8 126.0 L878.7 125.9 L879.7 125.8 L880.7 125.7 L881.6 125.6 L882.6 125.5 L883.6 125.4 L884.5 125.3 L885.5 125.3 L886.4 125.2 L887.4 125.2 L888.3 125.1 L889.3 125.1 L890.2 125.1 L891.2 125.0 L892.1 125.0 L893.1 125.0 L894.0 125.0 L895.0 125.1 L895.9 125.1 L896.9 125.1 L897.8 125.2 L898.7 125.2 L899.7 125.3 L900.6 125.3 L901.6 125.4 L902.5 125.5 L903.5 125.6 L904.4 125.7 L905.3 125.8 L906.3 125.9 L907.2 126.0 L908.2 126.2 L909.1 126.3 L910.1 126.4 L911.0 126.6 L912.0 126.8 L912.9 126.9 L913.9 127.1 L914.8 127.3 L915.7 127.5 L916.7 127.7M640.4 258.4 L641.5 257.3 L642.6 256.2 L643.7 255.2 L644.8 254.1 L646.0 253.0 L647.1 252.0 L648.2 250.9 L649.4 249.9 L650.6 248.8 L651.7 247.7 L652.9 246.7 L654.1 245.6 L655.3 244.6 L656.5 243.5 L657.7 242.4 L658.9 241.4 L660.1 240.3 L661.3 239.3 L662.6 238.2 L663.8 237.2 L665.1 236.1 L666.3 235.1 L667.6 234.0 L668.8 233.0 L670.1 231.9 L671.4 230.9 L672.7 229.8 L674.0 228.8 L675.3 227.8 L676.6 226.7 L677.9 225.7 L679.2 224.6 L680.5 223.6 L681.9 222.6 L683.2 221.5 L684.6 220.5 L685.9 219.5 L687.3 218.4 L688.6 217.4 L690.0 216.4 L691.4 215.3 L692.7 214.3 L694.1 213.3 L695.5 212.3 L696.9 211.2 L698.3 210.2 L699.7 209.2 L701.1 208.2 L702.5 207.2 L704.0 206.1 L705.4 205.1 L706.8 204.1 L708.2 203.1 L709.7 202.1 L711.1 201.1 L712.6 200.1 L714.0 199.1 L715.5 198.1 L716.9 197.1 L718.4 196.1 L719.8 195.1 L721.3 194.1 L722.8 193.1 L724.2 192.1 L725.7 191.2 L727.2 190.2 L728.7 189.2 L730.2 188.2 L731.7 187.2 L733.1 186.3 L734.6 185.3 L736.1 184.3 L737.6 183.4 L739.1 182.4 L740.6 181.4 L742.1 180.5 L743.7 179.5 L745.2 178.6 L746.7 177.6 L748.2 176.7 L749.7 175.7 L751.2 174.8 L752.7 173.8 L754.3 172.9 L755.8 172.0 L757.3 171.0 L758.8 170.1 L760.3 169.2 L761.9 168.3 L763.4 167.4 L764.9 166.5 L766.4 165.5 L768.0 164.6 L769.5 163.7 L771.0 162.9 L772.5 162.0 L774.1 161.1 L775.6 160.2 L777.1 159.3 L778.6 158.4 L780.1 157.6 L781.7 156.7 L783.2 155.8 L784.7 155.0 L786.2 154.1 L787.7 153.3 L789.2 152.4 L790.8 151.6 L792.3 150.8 L793.8 150.0 L795.3 149.1 L796.8 148.3 L798.3 147.5 L799.8 146.7 L801.3 145.9 L802.8 145.1 L804.3 144.3 L805.8 143.6 L807.3 142.8 L808.7 142.0 L810.2 141.3 L811.7 140.5 L813.2 139.8 L814.6 139.0 L816.1 138.3 L817.6 137.6 L819.0 136.9 L820.5 136.2 L821.9 135.5 L823.4 134.8 L824.8 134.1 L826.2 133.4 L827.7 132.8 L829.1 132.1 L830.5 131.5 L832.0 130.8 L833.4 130.2 L834.8 129.6 L836.2 129.0 L837.6 128.4 L839.0 127.8 L840.4 127.2 L841.7 126.6 L843.1 126.1 L844.5 125.5 L845.9 125.0 L847.2 124.4 L848.6 123.9 L849.9 123.4 L851.3 122.9 L852.6 122.4 L854.0 122.0 L855.3 121.5 L856.6 121.1 L857.9 120.6 L859.3 120.2 L860.6 119.8 L861.9 119.4 L863.2 119.0 L864.5 118.7 L865.8 118.3 L867.1 118.0 L868.3 117.6 L869.6 117.3 L870.9 117.0 L872.1 116.7 L873.4 116.5 L874.7 116.2 L875.9 116.0 L877.2 115.7 L878.4 115.5 L879.7 115.3 L880.9 115.1 L882.1 115.0 L883.4 114.8 L884.6 114.7 L885.8 114.6 L887.0 114.5 L888.3 114.4 L889.5 114.3 L890.7 114.2 L891.9 114.2 L893.1 114.2 L894.3 114.1 L895.6 114.1 L896.8 114.2 L898.0 114.2 L899.2 114.2 L900.4 114.3 L901.6 114.4 L902.8 114.5 L904.0 114.6 L905.2 114.7 L906.4 114.9 L907.6 115.0 L908.9 115.2 L910.1 115.4 L911.3 115.6 L912.5 115.8 L913.7 116.0 L914.9 116.3 L916.1 116.5 L917.4 116.8 L918.6 117.1 L919.8 117.4 L921.0 117.7 L922.3 118.1 L923.5 118.4 L924.7 118.8 L926.0 119.1 L927.2 119.5 L928.5 119.9 L929.7 120.3 L931.0 120.8 L932.2 121.2 L933.5 121.6 L934.7 122.1 L936.0 122.6 L937.3 123.1 L938.5 123.6 L939.8 124.1 L941.1 124.6 L942.4 125.1 L943.7 125.7 L944.9 126.2 L946.2 126.8 L947.5 127.4 L948.8 127.9 L950.1 128.5 L951.5 129.1 L952.8 129.7 L954.1 130.4 L955.4 131.0 L956.7 131.6 L958.1 132.3 L959.4 133.0 L960.7 133.6 L962.1 134.3 L963.4 135.0 L964.7 135.7 L966.1 136.4 L967.4 137.1 L968.8 137.8 L970.1 138.5 L971.5 139.3 L972.9 140.0 L974.2 140.7 L975.6 141.5 L977.0 142.3 L978.3 143.0 L979.7 143.8 L981.1 144.6 L982.5 145.4 L983.9 146.2 L985.2 146.9 L986.6 147.8 L988.0 148.6 L989.4 149.4 L990.8 150.2" fill="none" stroke="#ff1300" stroke-width="1.39" stroke-dasharray="1.39 2.29"/>
<path d="M517.5 320.4 L517.1 319.0 L516.7 317.6 L516.4 316.1 L516.1 314.7 L515.7 313.3 L515.4 311.9 L515.2 310.5 L514.9 309.1 L514.7 307.7 L514.5 306.3 L514.3 304.9 L514.2 303.5 L514.0 302.1 L513.9 300.7 L513.8 299.3 L513.8 297.9 L513.7 296.4 L513.7 295.0 L513.7 293.6 L513.7 292.2 L513.7 290.8 L513.8 289.4 L513.9 288.0 L514.0 286.6 L514.1 285.2 L514.3 283.8 L514.4 282.4 L514.6 281.0 L514.8 279.6 L515.1 278.2 L515.3 276.8 L515.6 275.4 L515.9 274.0 L516.2 272.6 L516.6 271.1 L516.9 269.7 L517.3 268.3 L517.7 266.9 L518.2 265.5 L518.6 264.1 L519.1 262.7 L519.6 261.3 L520.1 259.9 L520.7 258.5 L521.2 257.1 L521.8 255.7 L522.4 254.3 L523.0 252.9 L523.7 251.5 L524.3 250.1 L525.0 248.7 L525.7 247.3 L526.4 245.9 L527.2 244.5 L528.0 243.1 L528.8 241.7 L529.6 240.4 L530.4 239.0 L531.2 237.6 L532.1 236.2 L533.0 234.8 L533.9 233.4 L534.8 232.0 L535.8 230.6 L536.8 229.2 L537.8 227.8 L538.8 226.4 L539.8 225.0 L540.8 223.7 L541.9 222.3 L543.0 220.9 L544.1 219.5 L545.2 218.1 L546.4 216.7 L547.5 215.3 L548.7 214.0 L549.9 212.6 L551.1 211.2 L552.4 209.8 L553.6 208.4 L554.9 207.0 L556.2 205.7 L557.5 204.3 L558.8 202.9 L560.1 201.5 L561.5 200.2 L562.9 198.8 L564.3 197.4 L565.7 196.1 L567.1 194.7 L568.5 193.3 L570.0 191.9 L571.5 190.6 L573.0 189.2 L574.5 187.9 L576.0 186.5 L577.5 185.1 L579.1 183.8 L580.6 182.4 L582.2 181.1 L583.8 179.7 L585.4 178.3 L587.0 177.0 L588.7 175.6 L590.3 174.3 L592.0 173.0 L593.7 171.6 L595.3 170.3 L597.0 168.9 L598.8 167.6 L600.5 166.2 L602.2 164.9 L604.0 163.6 L605.7 162.3 L607.5 160.9 L609.3 159.6 L611.1 158.3 L612.9 157.0 L614.7 155.6 L616.5 154.3 L618.3 153.0 L620.2 151.7 L622.0 150.4 L623.9 149.1 L625.7 147.8 L627.6 146.5 L629.5 145.2 L631.3 143.9 L633.2 142.6 L635.1 141.3 L637.0 140.1 L638.9 138.8 L640.8 137.5 L642.7 136.3 L644.6 135.0 L646.5 133.7 L648.4 132.5 L650.3 131.2 L652.3 130.0 L654.2 128.8 L656.1 127.5 L658.0 126.3 L659.9 125.1 L661.8 123.9 L663.7 122.7 L665.6 121.5 L667.5 120.3 L669.3 119.1 L671.2 117.9 L673.1 116.8 L674.9 115.6 L676.8 114.4 L678.6 113.3 L680.4 112.2 L682.2 111.0 L684.0 109.9 L685.7 108.8 L687.5 107.7 L689.2 106.6 L690.9 105.6 L692.6 104.5 L694.2 103.5 L695.9 102.4 L697.4 101.4 L699.0 100.4 L700.5 99.4 L702.0 98.4 L703.5 97.5 L704.9 96.5 L706.3 95.6 L707.6 94.7 L708.9 93.8 L710.1 92.9 L711.3 92.1 L712.4 91.3 L713.5 90.5 L714.5 89.7 L715.4 88.9 L716.3 88.2 L717.1 87.5M1086.7 86.8 L1083.4 86.2 L1080.3 85.5 L1077.2 84.9 L1074.2 84.4 L1071.3 83.9 L1068.5 83.4 L1065.8 82.9 L1063.1 82.5 L1060.6 82.1 L1058.2 81.7 L1055.8 81.4 L1053.6 81.1 L1051.5 80.8 L1049.5 80.6 L1047.5 80.4 L1045.7 80.3 L1044.0 80.2 L1042.4 80.1 L1040.9 80.1 L1039.5 80.1 L1038.1 80.2 L1036.9 80.3 L1035.8 80.4 L1034.8 80.6 L1033.8 80.8 L1033.0 81.1 L1032.2 81.4 L1031.5 81.7 L1030.9 82.0 L1030.4 82.4 L1030.0 82.9 L1029.6 83.3 L1029.3 83.8 L1029.1 84.4 L1029.0 84.9 L1028.9 85.5 L1028.8 86.1 L1028.9 86.8 L1028.9 87.5 L1029.1 88.2 L1029.3 88.9 L1029.5 89.7 L1029.8 90.4 L1030.1 91.2 L1030.4 92.1 L1030.8 92.9 L1031.3 93.8 L1031.7 94.7 L1032.2 95.6 L1032.7 96.5 L1033.3 97.4 L1033.9 98.4 L1034.5 99.4 L1035.1 100.4 L1035.8 101.4 L1036.4 102.4 L1037.1 103.4 L1037.8 104.5 L1038.6 105.5 L1039.3 106.6 L1040.0 107.7 L1040.8 108.8 L1041.6 109.9 L1042.4 111.0 L1043.2 112.1 L1044.0 113.3 L1044.8 114.4 L1045.6 115.6 L1046.5 116.7 L1047.3 117.9 L1048.2 119.1 L1049.0 120.2 L1049.9 121.4 L1050.7 122.6 L1051.6 123.8 L1052.5 125.1 L1053.3 126.3 L1054.2 127.5" fill="none" stroke="#ffb20d" stroke-width="1.39" stroke-dasharray="1.39 2.29"/>
<path d="M861.3 200.2 L861.5 199.4 L861.7 198.6 L861.9 197.8 L862.1 197.0 L862.2 196.2 L862.4 195.4 L862.6 194.6 L862.8 193.8 L863.0 193.0 L863.2 192.2 L863.4 191.4 L863.6 190.6 L863.8 189.8 L864.0 189.0 L864.2 188.2 L864.4 187.4 L864.6 186.6 L864.8 185.8 L865.0 185.0 L865.2 184.2 L865.4 183.4 L865.6 182.6 L865.8 181.8 L866.0 181.0 L866.2 180.2 L866.4 179.4 L866.6 178.6 L866.8 177.8 L867.0 177.0 L867.2 176.2 L867.4 175.4 L867.6 174.6 L867.8 173.8 L868.0 173.0 L868.2 172.2 L868.4 171.4 L868.6 170.6 L868.9 169.8 L869.1 169.0 L869.3 168.2 L869.5 167.4 L869.7 166.6 L869.9 165.8 L870.1 165.0 L870.3 164.2 L870.6 163.4 L870.8 162.6 L871.0 161.8 L871.2 161.0 L871.4 160.2 L871.6 159.4 L871.9 158.6 L872.1 157.8 L872.3 157.0 L872.5 156.2 L872.7 155.4 L873.0 154.6 L873.2 153.8 L873.4 153.0 L873.6 152.2 L873.9 151.4 L874.1 150.6 L874.3 149.8 L874.5 149.0 L874.8 148.2 L875.0 147.4 L875.2 146.6 L875.4 145.8 L875.7 145.0 L875.9 144.2 L876.1 143.4 L876.3 142.6 L876.6 141.8 L876.8 141.0 L877.0 140.2 L877.3 139.4 L877.5 138.6 L877.7 137.8 L878.0 137.0 L878.2 136.2 L878.4 135.4 L878.7 134.6 L878.9 133.8 L879.1 133.0 L879.4 132.2 L879.6 131.4 L879.8 130.6 L880.1 129.8 L880.3 129.0 L880.5 128.2 L880.8 127.4 L881.0 126.6 L881.3 125.8 L881.5 125.0 L881.7 124.2 L882.0 123.4 L882.2 122.6 L882.5 121.8 L882.7 121.0 L882.9 120.2 L883.2 119.4 L883.4 118.6 L883.7 117.8 L883.9 117.0 L884.1 116.2 L884.4 115.4 L884.6 114.7 L884.9 113.9 L885.1 113.1 L885.4 112.3 L885.6 111.5 L885.8 110.7 L886.1 109.9 L886.3 109.1 L886.6 108.3 L886.8 107.5 L887.1 106.7 L887.3 105.9 L887.6 105.1 L887.8 104.3 L888.1 103.5 L888.3 102.7 L888.5 101.9 L888.8 101.1 L889.0 100.3 L889.3 99.5 L889.5 98.7 L889.8 97.9 L890.0 97.1 L890.3 96.3 L890.5 95.5 L890.8 94.8 L891.0 94.0 L891.3 93.2 L891.5 92.4 L891.8 91.6 L892.0 90.8 L892.3 90.0 L892.5 89.2 L892.8 88.4 L893.0 87.6 L893.3 86.8 L893.5 86.0 L893.8 85.2 L894.0 84.5 L894.3 83.7 L894.5 82.9 L894.8 82.1 L895.0 81.3 L895.3 80.5 L895.5 79.7 L895.8 78.9 L896.0 78.1 L896.3 77.4 L896.5 76.6 L896.8 75.8 L897.0 75.0 L897.3 74.2 L897.5 73.4 L897.8 72.6 L898.0 71.9 L898.3 71.1 L898.5 70.3 L898.8 69.5 L899.0 68.7 L899.3 68.0 L899.6 67.2 L899.8 66.4 L900.1 65.6 L900.3 64.8 L900.6 64.1 L900.8 63.3 L901.1 62.5 L901.3 61.8 L901.6 61.0 L901.8 60.2 L902.1 59.5 L902.3 58.7 L902.6 57.9 L902.8 57.2 L903.1 56.4 L903.3 55.7 L903.6 54.9 L903.8 54.2 L904.1 53.4 L904.3 52.7 L904.6 51.9 L904.8 51.2 L905.1 50.5 L905.3 49.8 L905.6 49.0 L905.8 48.3 L906.1 47.6 L906.4 46.9 L906.6 46.2 L906.9 45.5 L907.1 44.9 L907.4 44.2 L907.7 43.6 L908.0 42.9 L908.2 42.3 L908.5 41.7 L908.8 41.1 L909.1 40.6 L909.4 40.0 L909.8 39.5 L910.1 39.1 L910.5 38.6 L910.9 38.2 L911.4 37.9 L911.8 37.6 L912.4 37.3 L913.0 37.1 L913.6 37.0 L914.3 37.0 L915.1 37.0 L916.0 37.0 L917.0 37.1 L918.1 37.3 L919.2 37.6 L920.4 37.9 L921.8 38.2 L923.1 38.6 L924.6 39.1 L926.1 39.5 L927.7 40.0 L929.4 40.6 L931.1 41.1 L932.8 41.7 L934.6 42.3 L936.5 42.9 L938.3 43.6 L940.2 44.2 L942.1 44.9 L944.1 45.5 L946.0 46.2 L948.0 46.9 L950.0 47.6 L952.0 48.3 L954.1 49.0 L956.1 49.8 L958.2 50.5 L960.2 51.2 L962.3 51.9 L964.4 52.7 L966.5 53.4 L968.6 54.2 L970.7 54.9 L972.8 55.7 L974.9 56.4 L977.1 57.2 L979.2 57.9 L981.3 58.7 L983.5 59.5 L985.6 60.2 L987.8 61.0 L989.9 61.8 L992.0 62.5 L994.2 63.3" fill="none" stroke="#00fa88" stroke-width="1.39" stroke-dasharray="1.39 2.29"/>
<path d="M866.7 110.0 L857.5 116.7M891.3 131.7 L885.8 141.3M861.7 144.2 L871.5 155.0M849.2 156.7 L851.5 170.5M786.7 181.3 L809.7 181.7M864.5 190.8 L880.7 198.2M820.5 159.2 L825.8 160.8M1013.0 88.3 L1028.8 87.7M1032.2 116.0 L1029.0 123.0M1014.8 135.0 L1017.5 142.3M1083.3 108.7 L1096.7 115.3M1088.2 134.0 L1095.5 160.3M1059.8 164.0 L1062.2 171.5M1203.3 133.3 L1226.7 142.0M1213.3 146.7 L1226.3 152.5M908.8 138.5 L908.0 145.0M935.0 132.8 L942.3 139.2M938.0 156.3 L936.6 167.7M965.2 161.0 L970.3 168.5M980.5 140.0 L977.8 144.5M947.5 188.0 L954.7 194.2M863.3 220.8 L866.3 228.3M899.2 71.2 L913.3 82.4M953.0 75.9 L941.1 88.9M949.8 78.8 L948.7 84.6M945.1 83.5 L949.1 84.6M940.8 67.6 L946.5 69.1M867.5 130.0 L872.0 128.3M746.5 212.0 L747.0 219.3" fill="none" stroke="#747474" stroke-width="1.39"/>
<path d="M893.0 92.5 L893.3 93.3 L893.5 94.0 L893.8 94.8 L894.1 95.6 L894.4 96.3 L894.6 97.1 L894.9 97.9 L895.2 98.7 L895.5 99.4 L895.7 100.2 L896.0 101.0M933.3 132.5 L933.6 133.3 L934.0 134.0 L934.3 134.8 L934.7 135.5 L935.0 136.3 L935.3 137.0 L935.7 137.8 L936.0 138.5 L936.3 139.3 L936.7 140.0 L937.0 140.8M938.3 135.8 L938.7 136.8 L939.2 137.8 L939.6 138.8 L940.0 139.8 L940.5 140.8 L940.9 141.7 L941.3 142.7 L941.7 143.7 L942.2 144.7 L942.6 145.7 L943.0 146.7M958.0 133.0 L958.2 133.6 L958.4 134.3 L958.6 134.9 L958.7 135.5 L958.9 136.2 L959.1 136.8 L959.3 137.5 L959.5 138.1 L959.6 138.7 L959.8 139.4 L960.0 140.0M987.0 136.5 L987.4 137.2 L987.8 137.9 L988.2 138.6 L988.6 139.3 L989.0 140.0 L989.4 140.7 L989.8 141.4 L990.1 142.1 L990.5 142.8 L990.9 143.5 L991.3 144.2M878.9 155.4 L879.3 156.0 L879.6 156.6 L880.0 157.2 L880.4 157.8 L880.8 158.4 L881.1 159.0 L881.5 159.6 L881.9 160.2 L882.3 160.8 L882.6 161.4 L883.0 162.0M862.5 173.2 L862.8 173.7 L863.2 174.2 L863.5 174.8 L863.8 175.3 L864.2 175.8 L864.5 176.3 L864.9 176.9 L865.2 177.4 L865.5 177.9 L865.9 178.5 L866.2 179.0M868.0 205.0 L868.5 205.5 L868.9 206.0 L869.4 206.6 L869.8 207.1 L870.3 207.6 L870.7 208.1 L871.2 208.7 L871.6 209.2 L872.1 209.7 L872.5 210.3 L873.0 210.8M764.2 179.2 L764.7 179.6 L765.1 180.1 L765.6 180.5 L766.0 181.0 L766.5 181.4 L766.9 181.9 L767.4 182.3 L767.8 182.8 L768.3 183.3 L768.8 183.7 L769.2 184.2" fill="none" stroke="#59d200" stroke-width="1.6"/>
<path d="M913.3 66.6 L915.4 66.4 L917.5 66.4 L919.6 66.5 L921.9 66.7 L924.1 67.0 L926.4 67.4 L928.8 67.9 L931.3 68.5 L933.8 69.2 L936.4 70.0 L939.0 70.9M925.0 68.0 L926.9 68.3 L928.8 68.7 L930.8 69.2 L932.8 69.7 L934.8 70.3 L936.9 70.9 L939.0 71.6 L941.2 72.3 L943.4 73.1 L945.7 74.0 L948.0 74.9M897.0 91.1 L902.2 88.9 L907.3 87.1 L912.5 85.8 L917.8 85.0 L923.3 84.7 L928.9 84.8 L934.7 85.5 L940.8 86.7 L947.2 88.4 L953.8 90.4 L960.8 92.9M832.5 127.5 L835.8 125.0 L839.1 122.5 L842.4 120.1 L845.7 117.7 L849.0 115.3 L852.3 112.9 L855.5 110.7 L858.7 108.4 L861.9 106.2 L865.1 104.1 L868.3 102.0M888.0 120.0 L892.3 118.1 L896.6 116.4 L900.9 114.8 L905.1 113.5 L909.4 112.3 L913.7 111.4 L918.0 110.7 L922.4 110.2 L926.8 109.9 L931.3 109.8 L935.8 110.0M894.5 119.3 L895.6 119.0 L896.6 118.8 L897.7 118.5 L898.7 118.3 L899.8 118.1 L900.8 117.9 L901.9 117.7 L902.9 117.5 L904.0 117.3 L905.0 117.2 L906.1 117.0M977.5 160.0 L981.2 161.0 L985.0 162.1 L988.8 163.3 L992.6 164.5 L996.4 165.8 L1000.3 167.2 L1004.2 168.6 L1008.1 170.0 L1012.0 171.5 L1016.0 173.1 L1020.0 174.7M640.8 127.5 L638.7 127.9 L636.6 128.4 L634.5 128.8 L632.3 129.3 L630.2 129.8 L628.0 130.2 L625.8 130.7 L623.5 131.2 L621.3 131.8 L619.0 132.3 L616.7 132.8M1063.3 86.3 L1068.6 88.9 L1073.9 91.6 L1079.3 94.4 L1084.7 97.1 L1090.2 99.9 L1095.7 102.7 L1101.1 105.5 L1106.6 108.4 L1112.1 111.2 L1117.6 114.1 L1123.0 117.0" fill="none" stroke="#dd16ff" stroke-width="1.6"/>
<path d="M977.2 89.3 L978.6 90.2 L980.1 91.0 L981.5 91.9 L983.0 92.8 L984.4 93.6 L985.9 94.5 L987.3 95.4 L988.8 96.3 L990.2 97.1 L991.7 98.0 L993.1 98.9M916.7 127.7 L917.2 127.8 L917.7 128.0 L918.1 128.1 L918.6 128.2 L919.1 128.4 L919.6 128.5 L920.1 128.6 L920.6 128.8 L921.0 128.9 L921.5 129.1 L922.0 129.2M990.8 150.2 L991.2 150.4 L991.6 150.5 L992.0 150.7 L992.4 150.8 L992.8 151.0 L993.2 151.2 L993.7 151.3 L994.1 151.5 L994.5 151.7 L994.9 151.8 L995.3 152.0" fill="none" stroke="#ff1300" stroke-width="1.6"/>
<path d="M1054.2 127.5 L1055.1 128.7 L1056.0 129.9 L1056.9 131.1 L1057.9 132.3 L1058.8 133.5 L1059.7 134.7 L1060.6 135.9 L1061.5 137.1 L1062.4 138.3 L1063.3 139.6 L1064.2 140.8" fill="none" stroke="#ffb20d" stroke-width="1.6"/>
<path d="M994.2 63.3 L996.6 64.2 L999.0 65.1 L1001.5 65.9 L1003.9 66.8 L1006.3 67.7 L1008.7 68.6 L1011.1 69.5 L1013.5 70.3 L1016.0 71.2 L1018.4 72.1 L1020.8 73.0" fill="none" stroke="#00fa88" stroke-width="1.6"/>
<g fill="#707070"><rect x="856.5" y="115.7" width="2" height="2"/><rect x="884.8" y="140.3" width="2" height="2"/><rect x="870.5" y="154.0" width="2" height="2"/><rect x="850.5" y="169.5" width="2" height="2"/><rect x="808.7" y="180.7" width="2" height="2"/><rect x="879.7" y="197.2" width="2" height="2"/><rect x="824.8" y="159.8" width="2" height="2"/><rect x="1027.8" y="86.7" width="2" height="2"/><rect x="1028.0" y="122.0" width="2" height="2"/><rect x="1016.5" y="141.3" width="2" height="2"/><rect x="1095.7" y="114.3" width="2" height="2"/><rect x="1094.5" y="159.3" width="2" height="2"/><rect x="1061.2" y="170.5" width="2" height="2"/><rect x="1225.7" y="141.0" width="2" height="2"/><rect x="1225.3" y="151.5" width="2" height="2"/><rect x="907.0" y="144.0" width="2" height="2"/><rect x="941.3" y="138.2" width="2" height="2"/><rect x="935.6" y="166.7" width="2" height="2"/><rect x="969.3" y="167.5" width="2" height="2"/><rect x="976.8" y="143.5" width="2" height="2"/><rect x="953.7" y="193.2" width="2" height="2"/><rect x="865.3" y="227.3" width="2" height="2"/><rect x="912.3" y="81.4" width="2" height="2"/><rect x="940.1" y="87.9" width="2" height="2"/><rect x="947.7" y="83.6" width="2" height="2"/><rect x="948.1" y="83.6" width="2" height="2"/><rect x="945.5" y="68.1" width="2" height="2"/><rect x="871.0" y="127.3" width="2" height="2"/><rect x="746.0" y="218.3" width="2" height="2"/></g>
<g fill="#ff7055"><rect x="894.9" y="99.9" width="2.2" height="2.2"/><rect x="935.9" y="139.7" width="2.2" height="2.2"/><rect x="941.9" y="145.6" width="2.2" height="2.2"/><rect x="958.9" y="138.9" width="2.2" height="2.2"/><rect x="990.2" y="143.1" width="2.2" height="2.2"/><rect x="881.9" y="160.9" width="2.2" height="2.2"/><rect x="865.1" y="177.9" width="2.2" height="2.2"/><rect x="871.9" y="209.7" width="2.2" height="2.2"/><rect x="768.1" y="183.1" width="2.2" height="2.2"/><rect x="937.9" y="69.8" width="2.2" height="2.2"/><rect x="946.9" y="73.8" width="2.2" height="2.2"/><rect x="959.7" y="91.8" width="2.2" height="2.2"/><rect x="867.2" y="100.9" width="2.2" height="2.2"/><rect x="934.7" y="108.9" width="2.2" height="2.2"/><rect x="905.0" y="115.9" width="2.2" height="2.2"/><rect x="1018.9" y="173.6" width="2.2" height="2.2"/><rect x="615.6" y="131.7" width="2.2" height="2.2"/><rect x="1121.9" y="115.9" width="2.2" height="2.2"/><rect x="992.0" y="97.8" width="2.2" height="2.2"/><rect x="920.9" y="128.1" width="2.2" height="2.2"/><rect x="994.2" y="150.9" width="2.2" height="2.2"/><rect x="1063.1" y="139.7" width="2.2" height="2.2"/><rect x="1019.7" y="71.9" width="2.2" height="2.2"/></g>
<path d="M465.5 247.0 L463.7 248.7 L461.9 250.4 L459.9 252.1 L458.0 253.7 L455.9 255.3 L453.9 256.9 L451.8 258.4 L449.7 259.8 L447.5 261.2 L445.4 262.5 L443.2 263.7 L441.1 264.9 L438.9 265.9 L436.8 266.9 L434.7 267.8 L432.6 268.5 L430.5 269.2 L428.5 269.7 L426.5 270.1 L424.6 270.5 L422.8 270.7 L421.0 270.7 L419.3 270.7 L417.7 270.6 L416.2 270.3 L414.8 269.9 L413.5 269.4 L412.3 268.8 L411.3 268.1 L410.4 267.3 L409.6 266.4 L409.0 265.4 L408.6 264.3 L408.3 263.1 L408.2 261.9 L408.3 260.5 L408.6 259.1 L409.1 257.6 L409.7 256.1 L410.6 254.5 L411.6 252.9 L412.8 251.2 L414.3 249.5 L415.8 247.8 L417.6 246.1 L419.5 244.4 L421.6 242.7 L423.8 241.0 L426.2 239.3 L428.6 237.7 L431.2 236.0 L433.8 234.5 L436.6 233.0 L439.3 231.6 L442.1 230.2 L444.9 228.9 L447.7 227.7 L450.5 226.6 L453.2 225.6 L455.9 224.7 L458.5 224.0 L461.0 223.3 L463.3 222.8 L465.6 222.3 L467.6 222.1 L469.6 221.9 L471.3 221.9 L472.9 222.0 L474.3 222.2 L475.5 222.5 L476.5 223.0 L477.4 223.6 L478.0 224.3 L478.4 225.2 L478.7 226.1 L478.7 227.2 L478.6 228.3 L478.3 229.5 L477.8 230.9 L477.2 232.3 L476.4 233.7 L475.5 235.3 L474.4 236.8 L473.2 238.5 L471.9 240.1 L470.4 241.8 L468.9 243.5 L467.3 245.2 L465.5 247.0Z" fill="none" stroke="#59d200" stroke-width="2.083"/>
<path d="M743.1 239.4 L742.2 241.2 L741.3 242.9 L740.3 244.5 L739.2 246.2 L738.0 247.8 L736.7 249.3 L735.3 250.8 L733.9 252.3 L732.4 253.7 L730.8 255.0 L729.2 256.2 L727.5 257.3 L725.8 258.4 L724.1 259.3 L722.3 260.2 L720.5 260.9 L718.7 261.6 L716.9 262.1 L715.1 262.5 L713.3 262.9 L711.6 263.1 L709.8 263.1 L708.1 263.1 L706.4 263.0 L704.8 262.7 L703.3 262.3 L701.8 261.9 L700.4 261.3 L699.1 260.6 L697.9 259.8 L696.7 258.8 L695.7 257.8 L694.8 256.8 L694.0 255.6 L693.4 254.3 L692.9 253.0 L692.5 251.6 L692.2 250.1 L692.1 248.6 L692.2 247.0 L692.4 245.4 L692.7 243.7 L693.2 242.0 L693.9 240.3 L694.6 238.6 L695.6 236.9 L696.6 235.2 L697.8 233.4 L699.1 231.8 L700.5 230.1 L702.1 228.5 L703.7 227.0 L705.4 225.5 L707.2 224.0 L709.0 222.6 L711.0 221.4 L712.9 220.2 L714.9 219.1 L716.9 218.1 L718.9 217.2 L720.9 216.4 L722.9 215.7 L724.8 215.2 L726.8 214.7 L728.6 214.5 L730.4 214.3 L732.2 214.3 L733.8 214.4 L735.4 214.6 L736.9 214.9 L738.3 215.4 L739.5 216.0 L740.7 216.8 L741.8 217.6 L742.7 218.5 L743.5 219.6 L744.2 220.7 L744.8 222.0 L745.2 223.3 L745.6 224.7 L745.8 226.2 L745.8 227.7 L745.8 229.3 L745.6 230.9 L745.3 232.6 L744.9 234.3 L744.4 236.0 L743.8 237.7 L743.1 239.4Z" fill="none" stroke="#dd16ff" stroke-width="2.083"/>
<path d="M674.9 266.5 L674.2 268.2 L673.4 269.9 L672.4 271.6 L671.4 273.2 L670.3 274.8 L669.1 276.4 L667.9 277.9 L666.5 279.4 L665.2 280.8 L663.7 282.1 L662.2 283.3 L660.6 284.5 L659.0 285.6 L657.3 286.5 L655.7 287.4 L653.9 288.2 L652.2 288.8 L650.5 289.4 L648.7 289.8 L646.9 290.1 L645.2 290.4 L643.4 290.4 L641.7 290.4 L640.1 290.3 L638.4 290.0 L636.8 289.6 L635.3 289.1 L633.8 288.5 L632.5 287.8 L631.2 287.0 L630.0 286.1 L628.9 285.0 L627.9 283.9 L627.0 282.7 L626.2 281.5 L625.6 280.1 L625.1 278.7 L624.8 277.2 L624.6 275.6 L624.5 274.0 L624.6 272.4 L624.8 270.7 L625.2 269.0 L625.8 267.3 L626.5 265.6 L627.3 263.9 L628.3 262.2 L629.4 260.5 L630.6 258.8 L631.9 257.2 L633.4 255.6 L635.0 254.0 L636.6 252.6 L638.4 251.1 L640.2 249.8 L642.1 248.5 L644.0 247.3 L645.9 246.3 L647.9 245.3 L649.9 244.4 L651.9 243.6 L653.9 243.0 L655.8 242.4 L657.7 242.0 L659.6 241.7 L661.4 241.6 L663.1 241.6 L664.8 241.7 L666.4 241.9 L667.8 242.2 L669.2 242.7 L670.5 243.3 L671.7 244.0 L672.8 244.8 L673.7 245.8 L674.6 246.8 L675.3 247.9 L675.9 249.1 L676.4 250.5 L676.8 251.8 L677.0 253.3 L677.1 254.8 L677.2 256.4 L677.1 258.0 L676.8 259.7 L676.5 261.3 L676.1 263.0 L675.6 264.8 L674.9 266.5Z" fill="none" stroke="#ff1300" stroke-width="2.083"/>
<path d="M562.2 314.6 L562.1 316.3 L561.8 318.0 L561.5 319.7 L561.1 321.3 L560.6 323.0 L560.0 324.6 L559.3 326.1 L558.5 327.6 L557.6 329.0 L556.7 330.4 L555.7 331.6 L554.6 332.8 L553.4 333.9 L552.1 334.9 L550.8 335.8 L549.4 336.6 L547.9 337.3 L546.4 337.9 L544.8 338.3 L543.2 338.6 L541.6 338.9 L539.9 338.9 L538.1 338.9 L536.4 338.8 L534.6 338.5 L532.9 338.1 L531.2 337.6 L529.4 337.0 L527.8 336.2 L526.1 335.4 L524.5 334.4 L523.0 333.4 L521.6 332.2 L520.2 331.0 L519.0 329.7 L517.8 328.3 L516.8 326.9 L515.9 325.3 L515.1 323.8 L514.5 322.2 L514.0 320.5 L513.6 318.8 L513.4 317.1 L513.4 315.4 L513.5 313.7 L513.7 312.0 L514.1 310.3 L514.7 308.6 L515.4 306.9 L516.2 305.3 L517.2 303.7 L518.3 302.2 L519.5 300.8 L520.8 299.4 L522.2 298.0 L523.7 296.8 L525.3 295.7 L527.0 294.6 L528.7 293.7 L530.4 292.8 L532.2 292.1 L534.0 291.4 L535.8 290.9 L537.6 290.5 L539.4 290.2 L541.1 290.1 L542.8 290.1 L544.5 290.1 L546.2 290.4 L547.7 290.7 L549.3 291.2 L550.7 291.7 L552.1 292.4 L553.4 293.2 L554.6 294.1 L555.7 295.1 L556.8 296.2 L557.8 297.4 L558.6 298.7 L559.4 300.1 L560.1 301.5 L560.7 303.0 L561.2 304.5 L561.6 306.1 L561.9 307.8 L562.1 309.4 L562.2 311.1 L562.3 312.8 L562.2 314.6Z" fill="none" stroke="#ffb20d" stroke-width="2.083"/>
<path d="M870.2 200.9 L869.7 202.6 L869.2 204.3 L868.5 206.0 L867.7 207.6 L866.8 209.2 L865.9 210.7 L864.8 212.2 L863.6 213.6 L862.4 214.9 L861.0 216.2 L859.6 217.4 L858.2 218.5 L856.6 219.5 L855.0 220.4 L853.4 221.3 L851.7 222.0 L850.0 222.6 L848.3 223.1 L846.6 223.6 L844.8 223.9 L843.1 224.1 L841.4 224.1 L839.7 224.1 L838.0 224.0 L836.3 223.7 L834.7 223.4 L833.2 222.9 L831.7 222.3 L830.2 221.6 L828.9 220.9 L827.6 220.0 L826.4 219.0 L825.4 217.9 L824.4 216.8 L823.5 215.6 L822.7 214.3 L822.1 212.9 L821.6 211.4 L821.2 209.9 L820.9 208.4 L820.7 206.8 L820.7 205.1 L820.9 203.5 L821.1 201.8 L821.5 200.0 L822.0 198.3 L822.6 196.6 L823.4 194.9 L824.3 193.2 L825.3 191.5 L826.4 189.9 L827.6 188.3 L828.9 186.8 L830.3 185.3 L831.8 183.9 L833.3 182.6 L834.9 181.4 L836.6 180.2 L838.3 179.2 L840.0 178.3 L841.8 177.5 L843.6 176.8 L845.4 176.2 L847.2 175.8 L849.0 175.5 L850.7 175.3 L852.4 175.3 L854.1 175.4 L855.8 175.6 L857.4 176.0 L858.9 176.5 L860.4 177.1 L861.7 177.9 L863.0 178.7 L864.3 179.7 L865.4 180.8 L866.4 182.0 L867.4 183.3 L868.2 184.6 L868.9 186.0 L869.5 187.6 L870.0 189.1 L870.4 190.7 L870.6 192.4 L870.8 194.0 L870.8 195.7 L870.7 197.5 L870.5 199.2 L870.2 200.9Z" fill="none" stroke="#00fa88" stroke-width="2.083"/>
<g font-family="'DejaVu Sans', 'Liberation Sans', sans-serif" font-size="10.42" fill="#ffffff" text-anchor="middle">
<text x="441.3" y="248.9">LEO</text>
<text x="718.5" y="241.3">NTA</text>
<text x="650.2" y="268.6">NOO</text>
<text x="537.3" y="317.1">AMO</text>
<text x="845.5" y="202.3">AND</text>
</g>
<path d="M426.7 243.3h5.6M429.5 240.5v5.6M428.8 245.6h5.6M431.6 242.8v5.6M434.4 246.0h5.6M437.2 243.2v5.6M426.7 247.1h5.6M429.5 244.3v5.6M462.6 243.1h5.6M465.4 240.3v5.6M451.0 257.0h5.6M453.8 254.2v5.6M444.5 254.7h5.6M447.3 251.9v5.6M433.6 237.0h5.6M436.4 234.2v5.6M442.2 232.9h5.6M445.0 230.1v5.6M715.7 238.6h5.6M718.5 235.8v5.6M717.4 239.0h5.6M720.2 236.2v5.6M724.4 241.9h5.6M727.2 239.1v5.6M711.5 236.7h5.6M714.3 233.9v5.6M725.2 244.6h5.6M728.0 241.8v5.6M712.4 235.5h5.6M715.2 232.7v5.6M723.7 249.3h5.6M726.5 246.5v5.6M731.6 230.9h5.6M734.4 228.1v5.6M731.8 235.7h5.6M734.6 232.9v5.6M647.2 265.9h5.6M650.0 263.1v5.6M639.5 258.5h5.6M642.3 255.7v5.6M637.6 258.4h5.6M640.4 255.6v5.6M514.7 320.4h5.6M517.5 317.6v5.6M858.5 200.2h5.6M861.3 197.4v5.6M441.5 250.7h5.6M444.3 247.9v5.6M445.7 251.4h5.6M448.5 248.6v5.6" stroke="#ff0000" stroke-width="1.39" fill="none"/>
<g font-family="'DejaVu Sans Mono', 'Liberation Mono', monospace" font-size="13.889" fill="#ffffff" xml:space="preserve">
<text x="314.9" y="29.8">DK0005</text>
<text x="314.9" y="43.0">Beg: 20251115 17:05:18 (sol = 233.23°)</text>
<text x="314.9" y="56.5">End: 20251116 05:24:01 (sol = 233.75°)</text>
<text x="314.9" y="69.4">--------------------------------------</text>
<text x="314.9" y="82.0">...: 31</text>
<text x="314.9" y="95.0">LEO: 9</text>
<text x="314.9" y="108.0">NTA: 9</text>
<text x="314.9" y="121.6">NOO: 3</text>
<text x="314.9" y="134.8">AMO: 1</text>
<text x="314.9" y="147.9">AND: 1</text>
</g>
<g fill="none" stroke="#646464" stroke-width="2.083" stroke-dasharray="2.083 3.4375">
<path d="M74 842.5 L74 641.5"/>
<path d="M218 842.5 L218 641.5"/>
<path d="M365 842.5 L365 641.5"/>
<path d="M505 842.5 L505 641.5"/>
<path d="M650 842.5 L650 641.5"/>
<path d="M797 842.5 L797 641.5"/>
<path d="M940 842.5 L940 641.5"/>
<path d="M1091 842.5 L1091 641.5"/>
<path d="M1239 842.5 L1239 641.5"/>
<path d="M1394 842.5 L1394 641.5"/>
<path d="M1548 842.5 L1548 641.5"/>
<path d="M1687 842.5 L1687 641.5"/>
</g>
<clipPath id="axclip"><rect x="19.5" y="642.0" width="1766.0" height="200.5"/></clipPath>
<g font-family="'DejaVu Sans', 'Liberation Sans', sans-serif" font-size="27.78" fill="#555555" letter-spacing="-0.4" clip-path="url(#axclip)">
<text transform="translate(149.1,643.5) rotate(-90)" text-anchor="end">APR</text>
<text transform="translate(294.1,645.4) rotate(-90)" text-anchor="end">MAY</text>
<text transform="translate(435.1,641.0) rotate(-90)" text-anchor="end">JUN</text>
<text transform="translate(577.1,641.7) rotate(-90)" text-anchor="end">JUL</text>
<text transform="translate(722.1,641.1) rotate(-90)" text-anchor="end">AUG</text>
<text transform="translate(872.1,644.8) rotate(-90)" text-anchor="end">SEP</text>
<text transform="translate(1016.1,644.5) rotate(-90)" text-anchor="end">OCT</text>
<text transform="translate(1169.1,645.3) rotate(-90)" text-anchor="end">NOV</text>
<text transform="translate(1317.8999999999999,644.6) rotate(-90)" text-anchor="end">DEC</text>
<text transform="translate(1470.1,641.0) rotate(-90)" text-anchor="end">JAN</text>
<text transform="translate(1628.1,645.5) rotate(-90)" text-anchor="end">FEB</text>
<text transform="translate(1765.1,645.1) rotate(-90)" text-anchor="end">MAR</text>
</g>
<g fill="none" stroke="#ff0000" stroke-width="1.25" stroke-dasharray="5.14 2.22">
<path d="M1163.5 842.5 L1163.5 641.5"/>
<path d="M1166.5 842.5 L1166.5 641.5"/>
</g>
<path d="M106.0 834.0 L129.0 834.0" stroke="#ee8df0" stroke-width="4.1" fill="none"/>
<path d="M165.0 834.0 L345.0 834.0" stroke="#ee8df0" stroke-width="4.1" fill="none"/>
<path d="M366.0 834.0 L625.0 834.0" stroke="#ee8df0" stroke-width="4.1" fill="none"/>
<path d="M635.0 834.0 L786.0 834.0" stroke="#ee8df0" stroke-width="4.1" fill="none"/>
<path d="M807.0 834.0 L899.0 834.0" stroke="#ee8df0" stroke-width="4.1" fill="none"/>
<path d="M920.0 834.0 L973.0 834.0" stroke="#ee8df0" stroke-width="4.1" fill="none"/>
<path d="M984.0 834.0 L1066.0 834.0" stroke="#ee8df0" stroke-width="4.1" fill="none"/>
<path d="M1082.0 834.0 L1203.0 834.0" stroke="#ee8df0" stroke-width="4.1" fill="none"/>
<path d="M1244.0 834.0 L1326.0 834.0" stroke="#ee8df0" stroke-width="4.1" fill="none"/>
<path d="M1337.0 834.0 L1355.0 834.0" stroke="#ee8df0" stroke-width="4.1" fill="none"/>
<path d="M1381.0 834.0 L1444.0 834.0" stroke="#ee8df0" stroke-width="4.1" fill="none"/>
<path d="M1459.0 834.0 L1512.0 834.0" stroke="#ee8df0" stroke-width="4.1" fill="none"/>
<path d="M1523.0 834.0 L1547.0 834.0" stroke="#ee8df0" stroke-width="4.1" fill="none"/>
<path d="M1724.0 834.0 L1748.0 834.0" stroke="#ee8df0" stroke-width="4.1" fill="none"/>
<path d="M1758.0 834.0 L1782.0 834.0" stroke="#ee8df0" stroke-width="4.1" fill="none"/>
<path d="M165.0 818.0 L188.0 818.0" stroke="#cf18ff" stroke-width="4.1" fill="none"/>
<path d="M223.0 818.0 L286.0 818.0" stroke="#cf18ff" stroke-width="4.1" fill="none"/>
<path d="M312.0 818.0 L340.0 818.0" stroke="#cf18ff" stroke-width="4.1" fill="none"/>
<path d="M366.0 818.0 L492.0 818.0" stroke="#cf18ff" stroke-width="4.1" fill="none"/>
<path d="M508.0 818.0 L654.0 818.0" stroke="#cf18ff" stroke-width="4.1" fill="none"/>
<path d="M704.0 818.0 L737.0 818.0" stroke="#cf18ff" stroke-width="4.1" fill="none"/>
<path d="M773.0 818.0 L845.0 818.0" stroke="#cf18ff" stroke-width="4.1" fill="none"/>
<path d="M871.0 818.0 L988.0 818.0" stroke="#cf18ff" stroke-width="4.1" fill="none"/>
<path d="M1003.0 818.0 L1017.0 818.0" stroke="#cf18ff" stroke-width="4.1" fill="none"/>
<path d="M1062.0 818.0 L1213.0 818.0" stroke="#cf18ff" stroke-width="4.1" fill="none"/>
<path d="M1244.0 818.0 L1267.0 818.0" stroke="#cf18ff" stroke-width="4.1" fill="none"/>
<path d="M1293.0 818.0 L1316.0 818.0" stroke="#cf18ff" stroke-width="4.1" fill="none"/>
<path d="M1342.0 818.0 L1365.0 818.0" stroke="#cf18ff" stroke-width="4.1" fill="none"/>
<path d="M1386.0 818.0 L1429.0 818.0" stroke="#cf18ff" stroke-width="4.1" fill="none"/>
<path d="M1459.0 818.0 L1483.0 818.0" stroke="#cf18ff" stroke-width="4.1" fill="none"/>
<path d="M1548.0 818.0 L1571.0 818.0" stroke="#cf18ff" stroke-width="4.1" fill="none"/>
<path d="M165.0 802.0 L188.0 802.0" stroke="#ff1300" stroke-width="4.1" fill="none"/>
<path d="M258.0 802.0 L487.0 802.0" stroke="#ff1300" stroke-width="4.1" fill="none"/>
<path d="M508.0 802.0 L615.0 802.0" stroke="#ff1300" stroke-width="4.1" fill="none"/>
<path d="M626.0 802.0 L718.0 802.0" stroke="#ff1300" stroke-width="4.1" fill="none"/>
<path d="M729.0 802.0 L826.0 802.0" stroke="#ff1300" stroke-width="4.1" fill="none"/>
<path d="M949.0 802.0 L1149.0 802.0" stroke="#ff1300" stroke-width="4.1" fill="none"/>
<path d="M1160.0 802.0 L1248.0 802.0" stroke="#ff1300" stroke-width="4.1" fill="none"/>
<path d="M1258.0 802.0 L1444.0 802.0" stroke="#ff1300" stroke-width="4.1" fill="none"/>
<path d="M1459.0 802.0 L1483.0 802.0" stroke="#ff1300" stroke-width="4.1" fill="none"/>
<path d="M1552.0 802.0 L1576.0 802.0" stroke="#ff1300" stroke-width="4.1" fill="none"/>
<path d="M194.0 785.0 L218.0 785.0" stroke="#ffb20d" stroke-width="4.1" fill="none"/>
<path d="M321.0 785.0 L507.0 785.0" stroke="#ffb20d" stroke-width="4.1" fill="none"/>
<path d="M518.0 785.0 L541.0 785.0" stroke="#ffb20d" stroke-width="4.1" fill="none"/>
<path d="M557.0 785.0 L683.0 785.0" stroke="#ffb20d" stroke-width="4.1" fill="none"/>
<path d="M807.0 785.0 L831.0 785.0" stroke="#ffb20d" stroke-width="4.1" fill="none"/>
<path d="M954.0 785.0 L973.0 785.0" stroke="#ffb20d" stroke-width="4.1" fill="none"/>
<path d="M988.0 785.0 L1125.0 785.0" stroke="#ffb20d" stroke-width="4.1" fill="none"/>
<path d="M1155.0 785.0 L1218.0 785.0" stroke="#ffb20d" stroke-width="4.1" fill="none"/>
<path d="M1244.0 785.0 L1267.0 785.0" stroke="#ffb20d" stroke-width="4.1" fill="none"/>
<path d="M1317.0 785.0 L1341.0 785.0" stroke="#ffb20d" stroke-width="4.1" fill="none"/>
<path d="M1396.0 785.0 L1419.0 785.0" stroke="#ffb20d" stroke-width="4.1" fill="none"/>
<path d="M1464.0 785.0 L1650.0 785.0" stroke="#ffb20d" stroke-width="4.1" fill="none"/>
<path d="M341.0 769.0 L370.0 769.0" stroke="#fff000" stroke-width="4.1" fill="none"/>
<path d="M410.0 769.0 L448.0 769.0" stroke="#fff000" stroke-width="4.1" fill="none"/>
<path d="M469.0 769.0 L492.0 769.0" stroke="#fff000" stroke-width="4.1" fill="none"/>
<path d="M527.0 769.0 L546.0 769.0" stroke="#fff000" stroke-width="4.1" fill="none"/>
<path d="M562.0 769.0 L590.0 769.0" stroke="#fff000" stroke-width="4.1" fill="none"/>
<path d="M616.0 769.0 L649.0 769.0" stroke="#fff000" stroke-width="4.1" fill="none"/>
<path d="M959.0 769.0 L988.0 769.0" stroke="#fff000" stroke-width="4.1" fill="none"/>
<path d="M1062.0 769.0 L1086.0 769.0" stroke="#fff000" stroke-width="4.1" fill="none"/>
<path d="M1101.0 769.0 L1125.0 769.0" stroke="#fff000" stroke-width="4.1" fill="none"/>
<path d="M1160.0 769.0 L1194.0 769.0" stroke="#fff000" stroke-width="4.1" fill="none"/>
<path d="M1248.0 769.0 L1272.0 769.0" stroke="#fff000" stroke-width="4.1" fill="none"/>
<path d="M1425.0 769.0 L1512.0 769.0" stroke="#fff000" stroke-width="4.1" fill="none"/>
<path d="M420.0 752.0 L443.0 752.0" stroke="#a4ff28" stroke-width="4.1" fill="none"/>
<path d="M532.0 752.0 L556.0 752.0" stroke="#a4ff28" stroke-width="4.1" fill="none"/>
<path d="M567.0 752.0 L590.0 752.0" stroke="#a4ff28" stroke-width="4.1" fill="none"/>
<path d="M621.0 752.0 L742.0 752.0" stroke="#a4ff28" stroke-width="4.1" fill="none"/>
<path d="M969.0 752.0 L1135.0 752.0" stroke="#a4ff28" stroke-width="4.1" fill="none"/>
<path d="M1185.0 752.0 L1346.0 752.0" stroke="#a4ff28" stroke-width="4.1" fill="none"/>
<path d="M1469.0 752.0 L1493.0 752.0" stroke="#a4ff28" stroke-width="4.1" fill="none"/>
<path d="M429.0 736.0 L453.0 736.0" stroke="#59d200" stroke-width="4.1" fill="none"/>
<path d="M576.0 736.0 L733.0 736.0" stroke="#59d200" stroke-width="4.1" fill="none"/>
<path d="M993.0 736.0 L1105.0 736.0" stroke="#59d200" stroke-width="4.1" fill="none"/>
<path d="M1116.0 736.0 L1223.0 736.0" stroke="#59d200" stroke-width="4.1" fill="none"/>
<path d="M1263.0 736.0 L1292.0 736.0" stroke="#59d200" stroke-width="4.1" fill="none"/>
<path d="M1489.0 736.0 L1512.0 736.0" stroke="#59d200" stroke-width="4.1" fill="none"/>
<path d="M591.0 720.0 L615.0 720.0" stroke="#00fa88" stroke-width="4.1" fill="none"/>
<path d="M655.0 720.0 L772.0 720.0" stroke="#00fa88" stroke-width="4.1" fill="none"/>
<path d="M1072.0 720.0 L1243.0 720.0" stroke="#00fa88" stroke-width="4.1" fill="none"/>
<path d="M1263.0 720.0 L1287.0 720.0" stroke="#00fa88" stroke-width="4.1" fill="none"/>
<path d="M596.0 703.0 L733.0 703.0" stroke="#00d7ff" stroke-width="4.1" fill="none"/>
<path d="M1091.0 703.0 L1120.0 703.0" stroke="#00d7ff" stroke-width="4.1" fill="none"/>
<path d="M1199.0 703.0 L1223.0 703.0" stroke="#00d7ff" stroke-width="4.1" fill="none"/>
<path d="M1273.0 703.0 L1326.0 703.0" stroke="#00d7ff" stroke-width="4.1" fill="none"/>
<path d="M1111.0 687.0 L1135.0 687.0" stroke="#001bac" stroke-width="4.1" fill="none"/>
<path d="M112.8 834.0H121.2M117.0 829.8V838.2M240.8 834.0H249.2M245.0 829.8V838.2M510.8 834.0H519.2M515.0 829.8V838.2M706.8 834.0H715.2M711.0 829.8V838.2M832.8 834.0H841.2M837.0 829.8V838.2M961.8 834.0H970.2M966.0 829.8V838.2M985.8 834.0H994.2M990.0 829.8V838.2M1115.8 834.0H1124.2M1120.0 829.8V838.2M1294.8 834.0H1303.2M1299.0 829.8V838.2M1341.8 834.0H1350.2M1346.0 829.8V838.2M1412.8 834.0H1421.2M1417.0 829.8V838.2M1481.8 834.0H1490.2M1486.0 829.8V838.2M1530.8 834.0H1539.2M1535.0 829.8V838.2M1731.8 834.0H1740.2M1736.0 829.8V838.2M1765.8 834.0H1774.2M1770.0 829.8V838.2M171.8 818.0H180.2M176.0 813.8V822.2M255.8 818.0H264.2M260.0 813.8V822.2M322.8 818.0H331.2M327.0 813.8V822.2M436.8 818.0H445.2M441.0 813.8V822.2M598.8 818.0H607.2M603.0 813.8V822.2M716.8 818.0H725.2M721.0 813.8V822.2M792.8 818.0H801.2M797.0 813.8V822.2M938.8 818.0H947.2M943.0 813.8V822.2M1005.8 818.0H1014.2M1010.0 813.8V822.2M1152.8 818.0H1161.2M1157.0 813.8V822.2M1250.8 818.0H1259.2M1255.0 813.8V822.2M1299.8 818.0H1308.2M1304.0 813.8V822.2M1348.8 818.0H1357.2M1353.0 813.8V822.2M1402.8 818.0H1411.2M1407.0 813.8V822.2M1466.8 818.0H1475.2M1471.0 813.8V822.2M1554.8 818.0H1563.2M1559.0 813.8V822.2M173.8 802.0H182.2M178.0 797.8V806.2M377.8 802.0H386.2M382.0 797.8V806.2M544.8 802.0H553.2M549.0 797.8V806.2M681.8 802.0H690.2M686.0 797.8V806.2M740.8 802.0H749.2M745.0 797.8V806.2M1074.8 802.0H1083.2M1079.0 797.8V806.2M1216.8 802.0H1225.2M1221.0 797.8V806.2M1304.8 802.0H1313.2M1309.0 797.8V806.2M1466.8 802.0H1475.2M1471.0 797.8V806.2M1559.8 802.0H1568.2M1564.0 797.8V806.2M201.8 785.0H210.2M206.0 780.8V789.2M399.8 785.0H408.2M404.0 780.8V789.2M524.8 785.0H533.2M529.0 780.8V789.2M638.8 785.0H647.2M643.0 780.8V789.2M814.8 785.0H823.2M819.0 780.8V789.2M958.8 785.0H967.2M963.0 780.8V789.2M1039.8 785.0H1048.2M1044.0 780.8V789.2M1187.8 785.0H1196.2M1192.0 780.8V789.2M1250.8 785.0H1259.2M1255.0 780.8V789.2M1324.8 785.0H1333.2M1329.0 780.8V789.2M1402.8 785.0H1411.2M1407.0 780.8V789.2M1545.8 785.0H1554.2M1550.0 780.8V789.2M355.8 769.0H364.2M360.0 764.8V773.2M425.8 769.0H434.2M430.0 764.8V773.2M475.8 769.0H484.2M480.0 764.8V773.2M534.8 769.0H543.2M539.0 764.8V773.2M570.8 769.0H579.2M575.0 764.8V773.2M630.8 769.0H639.2M635.0 764.8V773.2M973.8 769.0H982.2M978.0 764.8V773.2M1069.8 769.0H1078.2M1074.0 764.8V773.2M1108.8 769.0H1117.2M1113.0 764.8V773.2M1177.8 769.0H1186.2M1182.0 764.8V773.2M1255.8 769.0H1264.2M1260.0 764.8V773.2M1466.8 769.0H1475.2M1471.0 764.8V773.2M426.8 752.0H435.2M431.0 747.8V756.2M539.8 752.0H548.2M544.0 747.8V756.2M573.8 752.0H582.2M578.0 747.8V756.2M703.8 752.0H712.2M708.0 747.8V756.2M1093.8 752.0H1102.2M1098.0 747.8V756.2M1270.8 752.0H1279.2M1275.0 747.8V756.2M1476.8 752.0H1485.2M1481.0 747.8V756.2M436.8 736.0H445.2M441.0 731.8V740.2M630.8 736.0H639.2M635.0 731.8V740.2M1038.8 736.0H1047.2M1043.0 731.8V740.2M1167.8 736.0H1176.2M1172.0 731.8V740.2M1274.8 736.0H1283.2M1279.0 731.8V740.2M1496.8 736.0H1505.2M1501.0 731.8V740.2M598.8 720.0H607.2M603.0 715.8V724.2M726.8 720.0H735.2M731.0 715.8V724.2M1187.8 720.0H1196.2M1192.0 715.8V724.2M1270.8 720.0H1279.2M1275.0 715.8V724.2M686.8 703.0H695.2M691.0 698.8V707.2M1101.8 703.0H1110.2M1106.0 698.8V707.2M1206.8 703.0H1215.2M1211.0 698.8V707.2M1299.8 703.0H1308.2M1304.0 698.8V707.2M1118.8 687.0H1127.2M1123.0 682.8V691.2" stroke="#ffffff" stroke-width="2.083" fill="none"/>
<g font-family="'DejaVu Sans', 'Liberation Sans', sans-serif" font-size="10.42" fill="#ffffff" text-anchor="middle">
<text x="117.5" y="832.1">KSE</text>
<text x="255.0" y="832.1">ETA</text>
<text x="495.5" y="832.1">NZC</text>
<text x="710.5" y="832.1">NDA</text>
<text x="853.0" y="832.1">SPE</text>
<text x="945.5" y="832.1">ARD</text>
<text x="1025.0" y="832.1">EGE</text>
<text x="1142.5" y="832.1">NTA</text>
<text x="1284.0" y="832.1">MON</text>
<text x="1346.0" y="832.1">URS</text>
<text x="1412.5" y="832.1">AHY</text>
<text x="1485.5" y="832.1">GUM</text>
<text x="1535.0" y="832.1">OHY</text>
<text x="1736.0" y="832.1">XHE</text>
<text x="1770.0" y="832.1">EVI</text>
<text x="175.5" y="815.7">AVB</text>
<text x="254.5" y="815.7">ELY</text>
<text x="323.8" y="815.7">CAM</text>
<text x="431.5" y="815.7">SSG</text>
<text x="578.8" y="815.7">PCA</text>
<text x="720.5" y="815.7">AUD</text>
<text x="809.0" y="815.7">AUR</text>
<text x="930.5" y="815.7">DSX</text>
<text x="1010.0" y="815.7">OCU</text>
<text x="1137.5" y="815.7">OER</text>
<text x="1255.5" y="815.7">DKD</text>
<text x="1304.5" y="815.7">DSV</text>
<text x="1353.5" y="815.7">ALY</text>
<text x="1407.5" y="815.7">JLE</text>
<text x="1471.0" y="815.7">SCC</text>
<text x="1559.5" y="815.7">FEV</text>
<text x="176.5" y="799.4">LYR</text>
<text x="372.5" y="799.4">JMC</text>
<text x="559.3" y="799.4">JPE</text>
<text x="672.0" y="799.4">PAU</text>
<text x="774.0" y="799.4">NIA</text>
<text x="1049.0" y="799.4">STA</text>
<text x="1205.5" y="799.4">NOO</text>
<text x="1351.0" y="799.4">COM</text>
<text x="1471.0" y="799.4">NCC</text>
<text x="1564.0" y="799.4">FED</text>
<text x="205.0" y="783.0">HVI</text>
<text x="412.0" y="783.0">ARI</text>
<text x="529.5" y="783.0">SZC</text>
<text x="617.5" y="783.0">CAP</text>
<text x="819.0" y="783.0">NUE</text>
<text x="961.0" y="783.0">OCT</text>
<text x="1059.0" y="783.0">ORI</text>
<text x="1186.5" y="783.0">AMO</text>
<text x="1255.5" y="783.0">DPC</text>
<text x="1329.0" y="783.0">XVI</text>
<text x="1407.5" y="783.0">QUA</text>
<text x="1559.5" y="783.0">AAN</text>
<text x="353.0" y="766.7">TAH</text>
<text x="431.5" y="766.7">JEA</text>
<text x="480.5" y="766.7">JIP</text>
<text x="539.2" y="766.7">PPS</text>
<text x="579.0" y="766.7">ZCS</text>
<text x="632.5" y="766.7">GDR</text>
<text x="970.0" y="766.7">DRA</text>
<text x="1073.0" y="766.7">LUM</text>
<text x="1113.0" y="766.7">RPU</text>
<text x="1177.0" y="766.7">THA</text>
<text x="1260.0" y="766.7">PSU</text>
<text x="1470.5" y="766.7">XCB</text>
<text x="431.5" y="750.3">JRC</text>
<text x="544.0" y="750.3">CAN</text>
<text x="578.5" y="750.3">FAN</text>
<text x="681.5" y="750.3">PER</text>
<text x="1049.0" y="750.3">CTA</text>
<text x="1264.5" y="750.3">HYD</text>
<text x="1481.0" y="750.3">XUM</text>
<text x="441.0" y="733.9">COR</text>
<text x="657.0" y="733.9">SDA</text>
<text x="1049.0" y="733.9">LMI</text>
<text x="1166.5" y="733.9">LEO</text>
<text x="1274.5" y="733.9">EHY</text>
<text x="1499.5" y="733.9">ECV</text>
<text x="603.0" y="717.6">JXA</text>
<text x="714.7" y="717.6">KCG</text>
<text x="1156.5" y="717.6">AND</text>
<text x="1275.0" y="717.6">DAD</text>
<text x="667.0" y="701.2">ERI</text>
<text x="1108.0" y="701.2">SLD</text>
<text x="1211.0" y="701.2">ORS</text>
<text x="1299.5" y="701.2">GEM</text>
<text x="1123.0" y="684.9">KUM</text>
</g>
<rect x="19.5" y="641.5" width="1766.0" height="201.0" fill="none" stroke="#ffffff" stroke-width="1.11"/>
<g stroke="#ffffff" stroke-width="1.11">
<path d="M19.5 842.5 v4.86"/>
<path d="M264.8 842.5 v4.86"/>
<path d="M510.0 842.5 v4.86"/>
<path d="M755.2 842.5 v4.86"/>
<path d="M1000.5 842.5 v4.86"/>
<path d="M1245.8 842.5 v4.86"/>
<path d="M1491.0 842.5 v4.86"/>
<path d="M1736.2 842.5 v4.86"/>
</g>
<g font-family="'DejaVu Sans', 'Liberation Sans', sans-serif" font-size="13.889" fill="#ffffff" text-anchor="middle">
<text x="19.5" y="862.2">0</text>
<text x="264.8" y="862.2">50</text>
<text x="510.0" y="862.2">100</text>
<text x="755.2" y="862.2">150</text>
<text x="1000.5" y="862.2">200</text>
<text x="1245.8" y="862.2">250</text>
<text x="1491.0" y="862.2">300</text>
<text x="1736.2" y="862.2">350</text>
<text x="902.5" y="882">Solar longitude (deg)</text>
</g>
</svg>
</body>
</html>
